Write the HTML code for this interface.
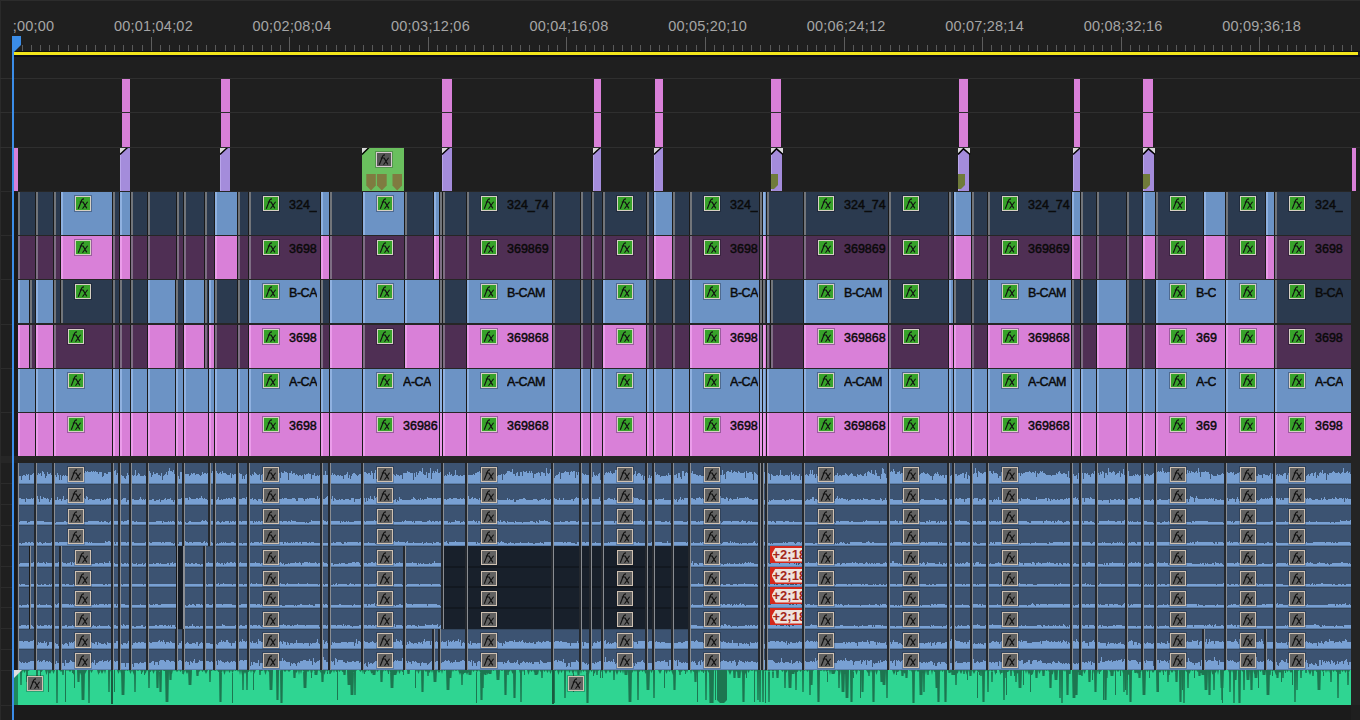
<!DOCTYPE html><html><head><meta charset="utf-8"><style>
*{margin:0;padding:0;box-sizing:border-box}
html,body{width:1360px;height:720px;overflow:hidden;background:#1f1f1f}
body>div,.abs{position:absolute}
#root{position:relative;width:1360px;height:720px;overflow:hidden;background:#1f1f1f;font-family:"Liberation Sans",sans-serif}
#root div{position:absolute}
#root svg{position:absolute}
.tc{width:120px;text-align:center;color:#a6a6a6;font-size:14.5px;letter-spacing:0.2px;line-height:16px;white-space:nowrap}
.lbl{color:#0a0a0a;font-size:12.5px;line-height:15px;white-space:nowrap;overflow:hidden;padding-top:3px;-webkit-text-stroke:0.45px #0a0a0a}
.fx{width:16px;height:15px;border:1.5px solid #cfc1b2;box-shadow:0 0 0 1px rgba(10,14,22,.3)}
.fg{background:#37a22a;border-color:#d6d0c4}
.fa{background:#626262;height:14.5px;width:16px;box-shadow:0 0 0 1px rgba(10,14,22,.25)}
.red{width:32px;height:17px;background:#d4281b;overflow:hidden}
.red:before{content:"";position:absolute;left:1.5px;top:1.5px;width:31px;height:14px;background:#eee3dd;clip-path:polygon(4px 0,100% 0,100% 100%,4px 100%,0 50%)}
.red span{position:absolute;left:2.5px;top:1px;color:#a3271b;font-size:13px;font-weight:bold;line-height:16px;white-space:nowrap}
</style></head><body><div id="root"><div style="left:0;top:0;width:1360px;height:1px;background:#2c2c2c"></div>
<div style="left:0;top:0;width:1px;height:720px;background:#2a2a2a"></div>
<div id="rul" style="left:13px;top:0;width:1347px;height:40px;overflow:hidden">
<div class="tc" style="left:-58.1px;top:18px">00;00;00;00</div>
<div class="tc" style="left:80.5px;top:18px">00;01;04;02</div>
<div class="tc" style="left:219.0px;top:18px">00;02;08;04</div>
<div class="tc" style="left:357.5px;top:18px">00;03;12;06</div>
<div class="tc" style="left:496.0px;top:18px">00;04;16;08</div>
<div class="tc" style="left:634.6px;top:18px">00;05;20;10</div>
<div class="tc" style="left:773.1px;top:18px">00;06;24;12</div>
<div class="tc" style="left:911.6px;top:18px">00;07;28;14</div>
<div class="tc" style="left:1050.2px;top:18px">00;08;32;16</div>
<div class="tc" style="left:1188.7px;top:18px">00;09;36;18</div>
</div>
<div style="left:22px;top:45px;width:1px;height:7px;background:#5a5a5a;"></div>
<div style="left:31px;top:45px;width:1px;height:7px;background:#5a5a5a;"></div>
<div style="left:40px;top:45px;width:1px;height:7px;background:#5a5a5a;"></div>
<div style="left:49px;top:45px;width:1px;height:7px;background:#5a5a5a;"></div>
<div style="left:58px;top:45px;width:1px;height:7px;background:#5a5a5a;"></div>
<div style="left:68px;top:45px;width:1px;height:7px;background:#5a5a5a;"></div>
<div style="left:77px;top:45px;width:1px;height:7px;background:#5a5a5a;"></div>
<div style="left:86px;top:45px;width:1px;height:7px;background:#5a5a5a;"></div>
<div style="left:95px;top:45px;width:1px;height:7px;background:#5a5a5a;"></div>
<div style="left:105px;top:45px;width:1px;height:7px;background:#5a5a5a;"></div>
<div style="left:114px;top:45px;width:1px;height:7px;background:#5a5a5a;"></div>
<div style="left:123px;top:45px;width:1px;height:7px;background:#5a5a5a;"></div>
<div style="left:132px;top:45px;width:1px;height:7px;background:#5a5a5a;"></div>
<div style="left:142px;top:45px;width:1px;height:7px;background:#5a5a5a;"></div>
<div style="left:151px;top:37px;width:1px;height:15px;background:#5e5e5e;"></div>
<div style="left:160px;top:45px;width:1px;height:7px;background:#5a5a5a;"></div>
<div style="left:169px;top:45px;width:1px;height:7px;background:#5a5a5a;"></div>
<div style="left:179px;top:45px;width:1px;height:7px;background:#5a5a5a;"></div>
<div style="left:188px;top:45px;width:1px;height:7px;background:#5a5a5a;"></div>
<div style="left:197px;top:45px;width:1px;height:7px;background:#5a5a5a;"></div>
<div style="left:206px;top:45px;width:1px;height:7px;background:#5a5a5a;"></div>
<div style="left:215px;top:45px;width:1px;height:7px;background:#5a5a5a;"></div>
<div style="left:225px;top:45px;width:1px;height:7px;background:#5a5a5a;"></div>
<div style="left:234px;top:45px;width:1px;height:7px;background:#5a5a5a;"></div>
<div style="left:243px;top:45px;width:1px;height:7px;background:#5a5a5a;"></div>
<div style="left:252px;top:45px;width:1px;height:7px;background:#5a5a5a;"></div>
<div style="left:262px;top:45px;width:1px;height:7px;background:#5a5a5a;"></div>
<div style="left:271px;top:45px;width:1px;height:7px;background:#5a5a5a;"></div>
<div style="left:280px;top:45px;width:1px;height:7px;background:#5a5a5a;"></div>
<div style="left:289px;top:37px;width:1px;height:15px;background:#5e5e5e;"></div>
<div style="left:299px;top:45px;width:1px;height:7px;background:#5a5a5a;"></div>
<div style="left:308px;top:45px;width:1px;height:7px;background:#5a5a5a;"></div>
<div style="left:317px;top:45px;width:1px;height:7px;background:#5a5a5a;"></div>
<div style="left:326px;top:45px;width:1px;height:7px;background:#5a5a5a;"></div>
<div style="left:336px;top:45px;width:1px;height:7px;background:#5a5a5a;"></div>
<div style="left:345px;top:45px;width:1px;height:7px;background:#5a5a5a;"></div>
<div style="left:354px;top:45px;width:1px;height:7px;background:#5a5a5a;"></div>
<div style="left:363px;top:45px;width:1px;height:7px;background:#5a5a5a;"></div>
<div style="left:372px;top:45px;width:1px;height:7px;background:#5a5a5a;"></div>
<div style="left:382px;top:45px;width:1px;height:7px;background:#5a5a5a;"></div>
<div style="left:391px;top:45px;width:1px;height:7px;background:#5a5a5a;"></div>
<div style="left:400px;top:45px;width:1px;height:7px;background:#5a5a5a;"></div>
<div style="left:409px;top:45px;width:1px;height:7px;background:#5a5a5a;"></div>
<div style="left:419px;top:45px;width:1px;height:7px;background:#5a5a5a;"></div>
<div style="left:428px;top:37px;width:1px;height:15px;background:#5e5e5e;"></div>
<div style="left:437px;top:45px;width:1px;height:7px;background:#5a5a5a;"></div>
<div style="left:446px;top:45px;width:1px;height:7px;background:#5a5a5a;"></div>
<div style="left:456px;top:45px;width:1px;height:7px;background:#5a5a5a;"></div>
<div style="left:465px;top:45px;width:1px;height:7px;background:#5a5a5a;"></div>
<div style="left:474px;top:45px;width:1px;height:7px;background:#5a5a5a;"></div>
<div style="left:483px;top:45px;width:1px;height:7px;background:#5a5a5a;"></div>
<div style="left:493px;top:45px;width:1px;height:7px;background:#5a5a5a;"></div>
<div style="left:502px;top:45px;width:1px;height:7px;background:#5a5a5a;"></div>
<div style="left:511px;top:45px;width:1px;height:7px;background:#5a5a5a;"></div>
<div style="left:520px;top:45px;width:1px;height:7px;background:#5a5a5a;"></div>
<div style="left:529px;top:45px;width:1px;height:7px;background:#5a5a5a;"></div>
<div style="left:539px;top:45px;width:1px;height:7px;background:#5a5a5a;"></div>
<div style="left:548px;top:45px;width:1px;height:7px;background:#5a5a5a;"></div>
<div style="left:557px;top:45px;width:1px;height:7px;background:#5a5a5a;"></div>
<div style="left:566px;top:37px;width:1px;height:15px;background:#5e5e5e;"></div>
<div style="left:576px;top:45px;width:1px;height:7px;background:#5a5a5a;"></div>
<div style="left:585px;top:45px;width:1px;height:7px;background:#5a5a5a;"></div>
<div style="left:594px;top:45px;width:1px;height:7px;background:#5a5a5a;"></div>
<div style="left:603px;top:45px;width:1px;height:7px;background:#5a5a5a;"></div>
<div style="left:613px;top:45px;width:1px;height:7px;background:#5a5a5a;"></div>
<div style="left:622px;top:45px;width:1px;height:7px;background:#5a5a5a;"></div>
<div style="left:631px;top:45px;width:1px;height:7px;background:#5a5a5a;"></div>
<div style="left:640px;top:45px;width:1px;height:7px;background:#5a5a5a;"></div>
<div style="left:650px;top:45px;width:1px;height:7px;background:#5a5a5a;"></div>
<div style="left:659px;top:45px;width:1px;height:7px;background:#5a5a5a;"></div>
<div style="left:668px;top:45px;width:1px;height:7px;background:#5a5a5a;"></div>
<div style="left:677px;top:45px;width:1px;height:7px;background:#5a5a5a;"></div>
<div style="left:686px;top:45px;width:1px;height:7px;background:#5a5a5a;"></div>
<div style="left:696px;top:45px;width:1px;height:7px;background:#5a5a5a;"></div>
<div style="left:705px;top:37px;width:1px;height:15px;background:#5e5e5e;"></div>
<div style="left:714px;top:45px;width:1px;height:7px;background:#5a5a5a;"></div>
<div style="left:723px;top:45px;width:1px;height:7px;background:#5a5a5a;"></div>
<div style="left:733px;top:45px;width:1px;height:7px;background:#5a5a5a;"></div>
<div style="left:742px;top:45px;width:1px;height:7px;background:#5a5a5a;"></div>
<div style="left:751px;top:45px;width:1px;height:7px;background:#5a5a5a;"></div>
<div style="left:760px;top:45px;width:1px;height:7px;background:#5a5a5a;"></div>
<div style="left:770px;top:45px;width:1px;height:7px;background:#5a5a5a;"></div>
<div style="left:779px;top:45px;width:1px;height:7px;background:#5a5a5a;"></div>
<div style="left:788px;top:45px;width:1px;height:7px;background:#5a5a5a;"></div>
<div style="left:797px;top:45px;width:1px;height:7px;background:#5a5a5a;"></div>
<div style="left:807px;top:45px;width:1px;height:7px;background:#5a5a5a;"></div>
<div style="left:816px;top:45px;width:1px;height:7px;background:#5a5a5a;"></div>
<div style="left:825px;top:45px;width:1px;height:7px;background:#5a5a5a;"></div>
<div style="left:834px;top:45px;width:1px;height:7px;background:#5a5a5a;"></div>
<div style="left:844px;top:37px;width:1px;height:15px;background:#5e5e5e;"></div>
<div style="left:853px;top:45px;width:1px;height:7px;background:#5a5a5a;"></div>
<div style="left:862px;top:45px;width:1px;height:7px;background:#5a5a5a;"></div>
<div style="left:871px;top:45px;width:1px;height:7px;background:#5a5a5a;"></div>
<div style="left:880px;top:45px;width:1px;height:7px;background:#5a5a5a;"></div>
<div style="left:890px;top:45px;width:1px;height:7px;background:#5a5a5a;"></div>
<div style="left:899px;top:45px;width:1px;height:7px;background:#5a5a5a;"></div>
<div style="left:908px;top:45px;width:1px;height:7px;background:#5a5a5a;"></div>
<div style="left:917px;top:45px;width:1px;height:7px;background:#5a5a5a;"></div>
<div style="left:927px;top:45px;width:1px;height:7px;background:#5a5a5a;"></div>
<div style="left:936px;top:45px;width:1px;height:7px;background:#5a5a5a;"></div>
<div style="left:945px;top:45px;width:1px;height:7px;background:#5a5a5a;"></div>
<div style="left:954px;top:45px;width:1px;height:7px;background:#5a5a5a;"></div>
<div style="left:964px;top:45px;width:1px;height:7px;background:#5a5a5a;"></div>
<div style="left:973px;top:45px;width:1px;height:7px;background:#5a5a5a;"></div>
<div style="left:982px;top:37px;width:1px;height:15px;background:#5e5e5e;"></div>
<div style="left:991px;top:45px;width:1px;height:7px;background:#5a5a5a;"></div>
<div style="left:1001px;top:45px;width:1px;height:7px;background:#5a5a5a;"></div>
<div style="left:1010px;top:45px;width:1px;height:7px;background:#5a5a5a;"></div>
<div style="left:1019px;top:45px;width:1px;height:7px;background:#5a5a5a;"></div>
<div style="left:1028px;top:45px;width:1px;height:7px;background:#5a5a5a;"></div>
<div style="left:1037px;top:45px;width:1px;height:7px;background:#5a5a5a;"></div>
<div style="left:1047px;top:45px;width:1px;height:7px;background:#5a5a5a;"></div>
<div style="left:1056px;top:45px;width:1px;height:7px;background:#5a5a5a;"></div>
<div style="left:1065px;top:45px;width:1px;height:7px;background:#5a5a5a;"></div>
<div style="left:1074px;top:45px;width:1px;height:7px;background:#5a5a5a;"></div>
<div style="left:1084px;top:45px;width:1px;height:7px;background:#5a5a5a;"></div>
<div style="left:1093px;top:45px;width:1px;height:7px;background:#5a5a5a;"></div>
<div style="left:1102px;top:45px;width:1px;height:7px;background:#5a5a5a;"></div>
<div style="left:1111px;top:45px;width:1px;height:7px;background:#5a5a5a;"></div>
<div style="left:1121px;top:37px;width:1px;height:15px;background:#5e5e5e;"></div>
<div style="left:1130px;top:45px;width:1px;height:7px;background:#5a5a5a;"></div>
<div style="left:1139px;top:45px;width:1px;height:7px;background:#5a5a5a;"></div>
<div style="left:1148px;top:45px;width:1px;height:7px;background:#5a5a5a;"></div>
<div style="left:1158px;top:45px;width:1px;height:7px;background:#5a5a5a;"></div>
<div style="left:1167px;top:45px;width:1px;height:7px;background:#5a5a5a;"></div>
<div style="left:1176px;top:45px;width:1px;height:7px;background:#5a5a5a;"></div>
<div style="left:1185px;top:45px;width:1px;height:7px;background:#5a5a5a;"></div>
<div style="left:1194px;top:45px;width:1px;height:7px;background:#5a5a5a;"></div>
<div style="left:1204px;top:45px;width:1px;height:7px;background:#5a5a5a;"></div>
<div style="left:1213px;top:45px;width:1px;height:7px;background:#5a5a5a;"></div>
<div style="left:1222px;top:45px;width:1px;height:7px;background:#5a5a5a;"></div>
<div style="left:1231px;top:45px;width:1px;height:7px;background:#5a5a5a;"></div>
<div style="left:1241px;top:45px;width:1px;height:7px;background:#5a5a5a;"></div>
<div style="left:1250px;top:45px;width:1px;height:7px;background:#5a5a5a;"></div>
<div style="left:1259px;top:37px;width:1px;height:15px;background:#5e5e5e;"></div>
<div style="left:1268px;top:45px;width:1px;height:7px;background:#5a5a5a;"></div>
<div style="left:1278px;top:45px;width:1px;height:7px;background:#5a5a5a;"></div>
<div style="left:1287px;top:45px;width:1px;height:7px;background:#5a5a5a;"></div>
<div style="left:1296px;top:45px;width:1px;height:7px;background:#5a5a5a;"></div>
<div style="left:1305px;top:45px;width:1px;height:7px;background:#5a5a5a;"></div>
<div style="left:1315px;top:45px;width:1px;height:7px;background:#5a5a5a;"></div>
<div style="left:1324px;top:45px;width:1px;height:7px;background:#5a5a5a;"></div>
<div style="left:1333px;top:45px;width:1px;height:7px;background:#5a5a5a;"></div>
<div style="left:1342px;top:45px;width:1px;height:7px;background:#5a5a5a;"></div>
<div style="left:1351px;top:45px;width:1px;height:7px;background:#5a5a5a;"></div>
<div style="left:13px;top:52px;width:1345px;height:3px;background:#f4e61c;"></div>
<div style="left:13px;top:55px;width:1347px;height:2px;background:#0d0d18;"></div>
<div style="left:13px;top:51px;width:1347px;height:1px;background:#111;"></div>
<div style="left:0px;top:78px;width:1360px;height:1px;background:#2f2f2f;"></div>
<div style="left:0px;top:112px;width:1360px;height:1px;background:#2f2f2f;"></div>
<div style="left:0px;top:147px;width:1360px;height:1px;background:#2f2f2f;"></div>
<div style="left:122px;top:79px;width:8px;height:33px;background:#d980d8;"></div>
<div style="left:122px;top:113px;width:8px;height:34px;background:#d980d8;"></div>
<div style="left:221px;top:79px;width:9px;height:33px;background:#d980d8;"></div>
<div style="left:221px;top:113px;width:9px;height:34px;background:#d980d8;"></div>
<div style="left:442px;top:79px;width:10px;height:33px;background:#d980d8;"></div>
<div style="left:442px;top:113px;width:10px;height:34px;background:#d980d8;"></div>
<div style="left:594px;top:79px;width:7px;height:33px;background:#d980d8;"></div>
<div style="left:594px;top:113px;width:7px;height:34px;background:#d980d8;"></div>
<div style="left:655px;top:79px;width:8px;height:33px;background:#d980d8;"></div>
<div style="left:655px;top:113px;width:8px;height:34px;background:#d980d8;"></div>
<div style="left:771px;top:79px;width:10px;height:33px;background:#d980d8;"></div>
<div style="left:771px;top:113px;width:10px;height:34px;background:#d980d8;"></div>
<div style="left:959px;top:79px;width:9px;height:33px;background:#d980d8;"></div>
<div style="left:959px;top:113px;width:9px;height:34px;background:#d980d8;"></div>
<div style="left:1074px;top:79px;width:6px;height:33px;background:#d980d8;"></div>
<div style="left:1074px;top:113px;width:6px;height:34px;background:#d980d8;"></div>
<div style="left:1143px;top:79px;width:10px;height:33px;background:#d980d8;"></div>
<div style="left:1143px;top:113px;width:10px;height:34px;background:#d980d8;"></div>
<div style="left:14px;top:148px;width:4px;height:43px;background:#d980d8;"></div>
<div style="left:1352px;top:148px;width:4px;height:43px;background:#d980d8;"></div>
<div style="left:120px;top:148px;width:10px;height:43px;background:#a48cdb;"></div>
<div style="left:120px;top:148px;width:1px;height:43px;background:#b9a6ea;"></div>
<svg class="abs" style="left:120px;top:148px" width="10" height="10"><polygon points="0,0 7,0 0,6" fill="#d9d9d9"/><line x1="0" y1="6.5" x2="7.5" y2="-0.5" stroke="#000" stroke-width="1.4"/></svg>
<div style="left:220px;top:148px;width:10px;height:43px;background:#a48cdb;"></div>
<div style="left:220px;top:148px;width:1px;height:43px;background:#b9a6ea;"></div>
<svg class="abs" style="left:220px;top:148px" width="10" height="10"><polygon points="0,0 7,0 0,6" fill="#d9d9d9"/><line x1="0" y1="6.5" x2="7.5" y2="-0.5" stroke="#000" stroke-width="1.4"/></svg>
<div style="left:442px;top:148px;width:10px;height:43px;background:#a48cdb;"></div>
<div style="left:442px;top:148px;width:1px;height:43px;background:#b9a6ea;"></div>
<svg class="abs" style="left:442px;top:148px" width="10" height="10"><polygon points="0,0 7,0 0,6" fill="#d9d9d9"/><line x1="0" y1="6.5" x2="7.5" y2="-0.5" stroke="#000" stroke-width="1.4"/></svg>
<div style="left:593px;top:148px;width:8px;height:43px;background:#a48cdb;"></div>
<div style="left:593px;top:148px;width:1px;height:43px;background:#b9a6ea;"></div>
<svg class="abs" style="left:593px;top:148px" width="8" height="10"><polygon points="0,0 7,0 0,6" fill="#d9d9d9"/><line x1="0" y1="6.5" x2="7.5" y2="-0.5" stroke="#000" stroke-width="1.4"/></svg>
<div style="left:654px;top:148px;width:9px;height:43px;background:#a48cdb;"></div>
<div style="left:654px;top:148px;width:1px;height:43px;background:#b9a6ea;"></div>
<svg class="abs" style="left:654px;top:148px" width="9" height="10"><polygon points="0,0 7,0 0,6" fill="#d9d9d9"/><line x1="0" y1="6.5" x2="7.5" y2="-0.5" stroke="#000" stroke-width="1.4"/></svg>
<div style="left:771px;top:148px;width:11px;height:43px;background:#a48cdb;"></div>
<div style="left:771px;top:148px;width:1px;height:43px;background:#b9a6ea;"></div>
<svg class="abs" style="left:771px;top:148px" width="13" height="12"><polygon points="0,0 12,0 12,6 5.5,0 0,6" fill="#d9d9d9"/><polyline points="0,6.5 5.5,0.8 12,6.5" fill="none" stroke="#000" stroke-width="1.6"/></svg>
<svg class="abs" style="left:771px;top:174px" width="8" height="16"><polygon points="0,0 7,0 7,11 3,15 0,15" fill="#6f7b3a"/></svg>
<div style="left:958px;top:148px;width:11px;height:43px;background:#a48cdb;"></div>
<div style="left:958px;top:148px;width:1px;height:43px;background:#b9a6ea;"></div>
<svg class="abs" style="left:958px;top:148px" width="13" height="12"><polygon points="0,0 12,0 12,6 5.5,0 0,6" fill="#d9d9d9"/><polyline points="0,6.5 5.5,0.8 12,6.5" fill="none" stroke="#000" stroke-width="1.6"/></svg>
<svg class="abs" style="left:958px;top:174px" width="8" height="16"><polygon points="0,0 7,0 7,11 3,15 0,15" fill="#6f7b3a"/></svg>
<div style="left:1073px;top:148px;width:7px;height:43px;background:#a48cdb;"></div>
<div style="left:1073px;top:148px;width:1px;height:43px;background:#b9a6ea;"></div>
<svg class="abs" style="left:1073px;top:148px" width="7" height="10"><polygon points="0,0 7,0 0,6" fill="#d9d9d9"/><line x1="0" y1="6.5" x2="7.5" y2="-0.5" stroke="#000" stroke-width="1.4"/></svg>
<div style="left:1143px;top:148px;width:11px;height:43px;background:#a48cdb;"></div>
<div style="left:1143px;top:148px;width:1px;height:43px;background:#b9a6ea;"></div>
<svg class="abs" style="left:1143px;top:148px" width="13" height="12"><polygon points="0,0 12,0 12,6 5.5,0 0,6" fill="#d9d9d9"/><polyline points="0,6.5 5.5,0.8 12,6.5" fill="none" stroke="#000" stroke-width="1.6"/></svg>
<svg class="abs" style="left:1143px;top:174px" width="8" height="16"><polygon points="0,0 7,0 7,11 3,15 0,15" fill="#6f7b3a"/></svg>
<div style="left:362px;top:148px;width:42px;height:43px;background:#6abf5e;"></div>
<svg class="abs" style="left:362px;top:148px" width="10" height="10"><polygon points="0,0 6,0 0,5.5" fill="#d9d9d9"/><line x1="0" y1="6.5" x2="7" y2="-0.5" stroke="#000" stroke-width="1.4"/></svg>
<div class="fx fa" style="left:376px;top:152px;background:#555;border-color:#d6c8cf"><svg width="16" height="15" style="left:-1.5px;top:-1.5px"><path d="M3.3 12.8L6.6 4.2Q7.1 2.9 9 2.9M4.8 6H8.3M8 5.9L11.8 12.4M12.6 5.7L7.5 12.7" stroke="#111" stroke-width="1.1" fill="none"/></svg></div>
<svg class="abs" style="left:362px;top:174px" width="42" height="17"><g fill="#7f7b40"><polygon points="4.3,0 13.8,0 13.8,11.5 9,16.5 4.3,11.5"/><polygon points="15,0 24.7,0 24.7,11.5 19.8,16.5 15,11.5"/><polygon points="30.5,0 40,0 40,11.5 35.2,16.5 30.5,11.5"/></g></svg>
<div style="left:14px;top:191px;width:1337px;height:265px;background:#262626;"></div>
<div class="clip" style="left:18px;top:192px;width:18px;height:43px;background:#2b3a4f;border-left:2px solid #72757a"></div>
<div style="left:17px;top:192px;width:1px;height:43px;background:#1a1a1a;"></div>
<div class="clip" style="left:36px;top:192px;width:18px;height:43px;background:#2b3a4f;border-left:2px solid #72757a"></div>
<div style="left:35px;top:192px;width:1px;height:43px;background:#1a1a1a;"></div>
<div class="clip" style="left:54px;top:192px;width:7px;height:43px;background:#2b3a4f;border-left:2px solid #72757a"></div>
<div style="left:53px;top:192px;width:1px;height:43px;background:#1a1a1a;"></div>
<div class="clip" style="left:61px;top:192px;width:52px;height:43px;background:#6c93c5;border-left:2px solid #8fb1e0"></div>
<div style="left:60px;top:192px;width:1px;height:43px;background:#1a1a1a;"></div>
<div class="clip" style="left:113px;top:192px;width:7px;height:43px;background:#2b3a4f;border-left:2px solid #72757a"></div>
<div style="left:112px;top:192px;width:1px;height:43px;background:#1a1a1a;"></div>
<div class="clip" style="left:120px;top:192px;width:11px;height:43px;background:#6c93c5;border-left:2px solid #8fb1e0"></div>
<div style="left:119px;top:192px;width:1px;height:43px;background:#1a1a1a;"></div>
<div class="clip" style="left:131px;top:192px;width:17px;height:43px;background:#2b3a4f;border-left:2px solid #72757a"></div>
<div style="left:130px;top:192px;width:1px;height:43px;background:#1a1a1a;"></div>
<div class="clip" style="left:148px;top:192px;width:29px;height:43px;background:#2b3a4f;border-left:2px solid #72757a"></div>
<div style="left:147px;top:192px;width:1px;height:43px;background:#1a1a1a;"></div>
<div class="clip" style="left:177px;top:192px;width:7px;height:43px;background:#2b3a4f;border-left:2px solid #72757a"></div>
<div style="left:176px;top:192px;width:1px;height:43px;background:#1a1a1a;"></div>
<div class="clip" style="left:184px;top:192px;width:21px;height:43px;background:#2b3a4f;border-left:2px solid #72757a"></div>
<div style="left:183px;top:192px;width:1px;height:43px;background:#1a1a1a;"></div>
<div class="clip" style="left:205px;top:192px;width:10px;height:43px;background:#2b3a4f;border-left:2px solid #72757a"></div>
<div style="left:204px;top:192px;width:1px;height:43px;background:#1a1a1a;"></div>
<div class="clip" style="left:215px;top:192px;width:23px;height:43px;background:#6c93c5;border-left:2px solid #8fb1e0"></div>
<div style="left:214px;top:192px;width:1px;height:43px;background:#1a1a1a;"></div>
<div class="clip" style="left:238px;top:192px;width:11px;height:43px;background:#2b3a4f;border-left:2px solid #72757a"></div>
<div style="left:237px;top:192px;width:1px;height:43px;background:#1a1a1a;"></div>
<div class="clip" style="left:249px;top:192px;width:72px;height:43px;background:#2b3a4f;border-left:2px solid #72757a"></div>
<div style="left:248px;top:192px;width:1px;height:43px;background:#1a1a1a;"></div>
<div class="clip" style="left:321px;top:192px;width:9px;height:43px;background:#6c93c5;border-left:2px solid #8fb1e0"></div>
<div style="left:320px;top:192px;width:1px;height:43px;background:#1a1a1a;"></div>
<div class="clip" style="left:330px;top:192px;width:33px;height:43px;background:#2b3a4f;border-left:2px solid #72757a"></div>
<div style="left:329px;top:192px;width:1px;height:43px;background:#1a1a1a;"></div>
<div class="clip" style="left:363px;top:192px;width:42px;height:43px;background:#6c93c5;border-left:2px solid #8fb1e0"></div>
<div style="left:362px;top:192px;width:1px;height:43px;background:#1a1a1a;"></div>
<div class="clip" style="left:405px;top:192px;width:29px;height:43px;background:#2b3a4f;border-left:2px solid #72757a"></div>
<div style="left:404px;top:192px;width:1px;height:43px;background:#1a1a1a;"></div>
<div class="clip" style="left:434px;top:192px;width:6px;height:43px;background:#6c93c5;border-left:2px solid #8fb1e0"></div>
<div style="left:433px;top:192px;width:1px;height:43px;background:#1a1a1a;"></div>
<div class="clip" style="left:440px;top:192px;width:3px;height:43px;background:#2b3a4f;border-left:2px solid #72757a"></div>
<div style="left:439px;top:192px;width:1px;height:43px;background:#1a1a1a;"></div>
<div class="clip" style="left:443px;top:192px;width:24px;height:43px;background:#2b3a4f;border-left:2px solid #72757a"></div>
<div style="left:442px;top:192px;width:1px;height:43px;background:#1a1a1a;"></div>
<div class="clip" style="left:467px;top:192px;width:86px;height:43px;background:#2b3a4f;border-left:2px solid #72757a"></div>
<div style="left:466px;top:192px;width:1px;height:43px;background:#1a1a1a;"></div>
<div class="clip" style="left:553px;top:192px;width:28px;height:43px;background:#2b3a4f;border-left:2px solid #72757a"></div>
<div style="left:552px;top:192px;width:1px;height:43px;background:#1a1a1a;"></div>
<div class="clip" style="left:581px;top:192px;width:11px;height:43px;background:#2b3a4f;border-left:2px solid #72757a"></div>
<div style="left:580px;top:192px;width:1px;height:43px;background:#1a1a1a;"></div>
<div class="clip" style="left:592px;top:192px;width:11px;height:43px;background:#2b3a4f;border-left:2px solid #72757a"></div>
<div style="left:591px;top:192px;width:1px;height:43px;background:#1a1a1a;"></div>
<div class="clip" style="left:603px;top:192px;width:44px;height:43px;background:#2b3a4f;border-left:2px solid #72757a"></div>
<div style="left:602px;top:192px;width:1px;height:43px;background:#1a1a1a;"></div>
<div class="clip" style="left:647px;top:192px;width:7px;height:43px;background:#2b3a4f;border-left:2px solid #72757a"></div>
<div style="left:646px;top:192px;width:1px;height:43px;background:#1a1a1a;"></div>
<div class="clip" style="left:654px;top:192px;width:19px;height:43px;background:#6c93c5;border-left:2px solid #8fb1e0"></div>
<div style="left:653px;top:192px;width:1px;height:43px;background:#1a1a1a;"></div>
<div class="clip" style="left:673px;top:192px;width:17px;height:43px;background:#2b3a4f;border-left:2px solid #72757a"></div>
<div style="left:672px;top:192px;width:1px;height:43px;background:#1a1a1a;"></div>
<div class="clip" style="left:690px;top:192px;width:70px;height:43px;background:#2b3a4f;border-left:2px solid #72757a"></div>
<div style="left:689px;top:192px;width:1px;height:43px;background:#1a1a1a;"></div>
<div class="clip" style="left:760px;top:192px;width:3px;height:43px;background:#2b3a4f;border-left:2px solid #72757a"></div>
<div style="left:759px;top:192px;width:1px;height:43px;background:#1a1a1a;"></div>
<div class="clip" style="left:763px;top:192px;width:4px;height:43px;background:#6c93c5;border-left:2px solid #8fb1e0"></div>
<div style="left:762px;top:192px;width:1px;height:43px;background:#1a1a1a;"></div>
<div class="clip" style="left:767px;top:192px;width:37px;height:43px;background:#2b3a4f;border-left:2px solid #72757a"></div>
<div style="left:766px;top:192px;width:1px;height:43px;background:#1a1a1a;"></div>
<div class="clip" style="left:804px;top:192px;width:85px;height:43px;background:#2b3a4f;border-left:2px solid #72757a"></div>
<div style="left:803px;top:192px;width:1px;height:43px;background:#1a1a1a;"></div>
<div class="clip" style="left:889px;top:192px;width:60px;height:43px;background:#2b3a4f;border-left:2px solid #72757a"></div>
<div style="left:888px;top:192px;width:1px;height:43px;background:#1a1a1a;"></div>
<div class="clip" style="left:949px;top:192px;width:5px;height:43px;background:#2b3a4f;border-left:2px solid #72757a"></div>
<div style="left:948px;top:192px;width:1px;height:43px;background:#1a1a1a;"></div>
<div class="clip" style="left:954px;top:192px;width:18px;height:43px;background:#6c93c5;border-left:2px solid #8fb1e0"></div>
<div style="left:953px;top:192px;width:1px;height:43px;background:#1a1a1a;"></div>
<div class="clip" style="left:972px;top:192px;width:16px;height:43px;background:#2b3a4f;border-left:2px solid #72757a"></div>
<div style="left:971px;top:192px;width:1px;height:43px;background:#1a1a1a;"></div>
<div class="clip" style="left:988px;top:192px;width:84px;height:43px;background:#2b3a4f;border-left:2px solid #72757a"></div>
<div style="left:987px;top:192px;width:1px;height:43px;background:#1a1a1a;"></div>
<div class="clip" style="left:1072px;top:192px;width:9px;height:43px;background:#6c93c5;border-left:2px solid #8fb1e0"></div>
<div style="left:1071px;top:192px;width:1px;height:43px;background:#1a1a1a;"></div>
<div class="clip" style="left:1081px;top:192px;width:16px;height:43px;background:#2b3a4f;border-left:2px solid #72757a"></div>
<div style="left:1080px;top:192px;width:1px;height:43px;background:#1a1a1a;"></div>
<div class="clip" style="left:1097px;top:192px;width:30px;height:43px;background:#2b3a4f;border-left:2px solid #72757a"></div>
<div style="left:1096px;top:192px;width:1px;height:43px;background:#1a1a1a;"></div>
<div class="clip" style="left:1127px;top:192px;width:16px;height:43px;background:#2b3a4f;border-left:2px solid #72757a"></div>
<div style="left:1126px;top:192px;width:1px;height:43px;background:#1a1a1a;"></div>
<div class="clip" style="left:1143px;top:192px;width:13px;height:43px;background:#6c93c5;border-left:2px solid #8fb1e0"></div>
<div style="left:1142px;top:192px;width:1px;height:43px;background:#1a1a1a;"></div>
<div class="clip" style="left:1156px;top:192px;width:48px;height:43px;background:#2b3a4f;border-left:2px solid #72757a"></div>
<div style="left:1155px;top:192px;width:1px;height:43px;background:#1a1a1a;"></div>
<div class="clip" style="left:1204px;top:192px;width:22px;height:43px;background:#6c93c5;border-left:2px solid #8fb1e0"></div>
<div style="left:1203px;top:192px;width:1px;height:43px;background:#1a1a1a;"></div>
<div class="clip" style="left:1226px;top:192px;width:40px;height:43px;background:#2b3a4f;border-left:2px solid #72757a"></div>
<div style="left:1225px;top:192px;width:1px;height:43px;background:#1a1a1a;"></div>
<div class="clip" style="left:1266px;top:192px;width:9px;height:43px;background:#6c93c5;border-left:2px solid #8fb1e0"></div>
<div style="left:1265px;top:192px;width:1px;height:43px;background:#1a1a1a;"></div>
<div class="clip" style="left:1275px;top:192px;width:76px;height:43px;background:#2b3a4f;border-left:2px solid #72757a"></div>
<div style="left:1274px;top:192px;width:1px;height:43px;background:#1a1a1a;"></div>
<div class="fx fg" style="left:75px;top:196px"><svg width="16" height="15" style="left:-1.5px;top:-1.5px"><path d="M3.3 12.8L6.6 4.2Q7.1 2.9 9 2.9M4.8 6H8.3M8 5.9L11.8 12.4M12.6 5.7L7.5 12.7" stroke="#111" stroke-width="1.1" fill="none"/></svg></div>
<div class="fx fg" style="left:263px;top:196px"><svg width="16" height="15" style="left:-1.5px;top:-1.5px"><path d="M3.3 12.8L6.6 4.2Q7.1 2.9 9 2.9M4.8 6H8.3M8 5.9L11.8 12.4M12.6 5.7L7.5 12.7" stroke="#111" stroke-width="1.1" fill="none"/></svg></div>
<div class="fx fg" style="left:377px;top:196px"><svg width="16" height="15" style="left:-1.5px;top:-1.5px"><path d="M3.3 12.8L6.6 4.2Q7.1 2.9 9 2.9M4.8 6H8.3M8 5.9L11.8 12.4M12.6 5.7L7.5 12.7" stroke="#111" stroke-width="1.1" fill="none"/></svg></div>
<div class="fx fg" style="left:481px;top:196px"><svg width="16" height="15" style="left:-1.5px;top:-1.5px"><path d="M3.3 12.8L6.6 4.2Q7.1 2.9 9 2.9M4.8 6H8.3M8 5.9L11.8 12.4M12.6 5.7L7.5 12.7" stroke="#111" stroke-width="1.1" fill="none"/></svg></div>
<div class="fx fg" style="left:617px;top:196px"><svg width="16" height="15" style="left:-1.5px;top:-1.5px"><path d="M3.3 12.8L6.6 4.2Q7.1 2.9 9 2.9M4.8 6H8.3M8 5.9L11.8 12.4M12.6 5.7L7.5 12.7" stroke="#111" stroke-width="1.1" fill="none"/></svg></div>
<div class="fx fg" style="left:704px;top:196px"><svg width="16" height="15" style="left:-1.5px;top:-1.5px"><path d="M3.3 12.8L6.6 4.2Q7.1 2.9 9 2.9M4.8 6H8.3M8 5.9L11.8 12.4M12.6 5.7L7.5 12.7" stroke="#111" stroke-width="1.1" fill="none"/></svg></div>
<div class="fx fg" style="left:818px;top:196px"><svg width="16" height="15" style="left:-1.5px;top:-1.5px"><path d="M3.3 12.8L6.6 4.2Q7.1 2.9 9 2.9M4.8 6H8.3M8 5.9L11.8 12.4M12.6 5.7L7.5 12.7" stroke="#111" stroke-width="1.1" fill="none"/></svg></div>
<div class="fx fg" style="left:903px;top:196px"><svg width="16" height="15" style="left:-1.5px;top:-1.5px"><path d="M3.3 12.8L6.6 4.2Q7.1 2.9 9 2.9M4.8 6H8.3M8 5.9L11.8 12.4M12.6 5.7L7.5 12.7" stroke="#111" stroke-width="1.1" fill="none"/></svg></div>
<div class="fx fg" style="left:1002px;top:196px"><svg width="16" height="15" style="left:-1.5px;top:-1.5px"><path d="M3.3 12.8L6.6 4.2Q7.1 2.9 9 2.9M4.8 6H8.3M8 5.9L11.8 12.4M12.6 5.7L7.5 12.7" stroke="#111" stroke-width="1.1" fill="none"/></svg></div>
<div class="fx fg" style="left:1170px;top:196px"><svg width="16" height="15" style="left:-1.5px;top:-1.5px"><path d="M3.3 12.8L6.6 4.2Q7.1 2.9 9 2.9M4.8 6H8.3M8 5.9L11.8 12.4M12.6 5.7L7.5 12.7" stroke="#111" stroke-width="1.1" fill="none"/></svg></div>
<div class="fx fg" style="left:1240px;top:196px"><svg width="16" height="15" style="left:-1.5px;top:-1.5px"><path d="M3.3 12.8L6.6 4.2Q7.1 2.9 9 2.9M4.8 6H8.3M8 5.9L11.8 12.4M12.6 5.7L7.5 12.7" stroke="#111" stroke-width="1.1" fill="none"/></svg></div>
<div class="fx fg" style="left:1289px;top:196px"><svg width="16" height="15" style="left:-1.5px;top:-1.5px"><path d="M3.3 12.8L6.6 4.2Q7.1 2.9 9 2.9M4.8 6H8.3M8 5.9L11.8 12.4M12.6 5.7L7.5 12.7" stroke="#111" stroke-width="1.1" fill="none"/></svg></div>
<div class="lbl" style="left:289px;top:195px">324_</div>
<div class="lbl" style="left:507px;top:195px">324_74</div>
<div class="lbl" style="left:730px;top:195px">324_</div>
<div class="lbl" style="left:844px;top:195px">324_74</div>
<div class="lbl" style="left:1028px;top:195px">324_74</div>
<div class="lbl" style="left:1315px;top:195px">324_</div>
<div class="clip" style="left:18px;top:236px;width:18px;height:43px;background:#4f2f54;border-left:2px solid #7e6e84"></div>
<div style="left:17px;top:236px;width:1px;height:43px;background:#1a1a1a;"></div>
<div class="clip" style="left:36px;top:236px;width:18px;height:43px;background:#4f2f54;border-left:2px solid #7e6e84"></div>
<div style="left:35px;top:236px;width:1px;height:43px;background:#1a1a1a;"></div>
<div class="clip" style="left:54px;top:236px;width:7px;height:43px;background:#4f2f54;border-left:2px solid #7e6e84"></div>
<div style="left:53px;top:236px;width:1px;height:43px;background:#1a1a1a;"></div>
<div class="clip" style="left:61px;top:236px;width:52px;height:43px;background:#d980d8;border-left:2px solid #eb9cea"></div>
<div style="left:60px;top:236px;width:1px;height:43px;background:#1a1a1a;"></div>
<div class="clip" style="left:113px;top:236px;width:7px;height:43px;background:#4f2f54;border-left:2px solid #7e6e84"></div>
<div style="left:112px;top:236px;width:1px;height:43px;background:#1a1a1a;"></div>
<div class="clip" style="left:120px;top:236px;width:11px;height:43px;background:#d980d8;border-left:2px solid #eb9cea"></div>
<div style="left:119px;top:236px;width:1px;height:43px;background:#1a1a1a;"></div>
<div class="clip" style="left:131px;top:236px;width:17px;height:43px;background:#4f2f54;border-left:2px solid #7e6e84"></div>
<div style="left:130px;top:236px;width:1px;height:43px;background:#1a1a1a;"></div>
<div class="clip" style="left:148px;top:236px;width:29px;height:43px;background:#4f2f54;border-left:2px solid #7e6e84"></div>
<div style="left:147px;top:236px;width:1px;height:43px;background:#1a1a1a;"></div>
<div class="clip" style="left:177px;top:236px;width:7px;height:43px;background:#4f2f54;border-left:2px solid #7e6e84"></div>
<div style="left:176px;top:236px;width:1px;height:43px;background:#1a1a1a;"></div>
<div class="clip" style="left:184px;top:236px;width:21px;height:43px;background:#4f2f54;border-left:2px solid #7e6e84"></div>
<div style="left:183px;top:236px;width:1px;height:43px;background:#1a1a1a;"></div>
<div class="clip" style="left:205px;top:236px;width:10px;height:43px;background:#4f2f54;border-left:2px solid #7e6e84"></div>
<div style="left:204px;top:236px;width:1px;height:43px;background:#1a1a1a;"></div>
<div class="clip" style="left:215px;top:236px;width:23px;height:43px;background:#d980d8;border-left:2px solid #eb9cea"></div>
<div style="left:214px;top:236px;width:1px;height:43px;background:#1a1a1a;"></div>
<div class="clip" style="left:238px;top:236px;width:11px;height:43px;background:#4f2f54;border-left:2px solid #7e6e84"></div>
<div style="left:237px;top:236px;width:1px;height:43px;background:#1a1a1a;"></div>
<div class="clip" style="left:249px;top:236px;width:72px;height:43px;background:#4f2f54;border-left:2px solid #7e6e84"></div>
<div style="left:248px;top:236px;width:1px;height:43px;background:#1a1a1a;"></div>
<div class="clip" style="left:321px;top:236px;width:9px;height:43px;background:#d980d8;border-left:2px solid #eb9cea"></div>
<div style="left:320px;top:236px;width:1px;height:43px;background:#1a1a1a;"></div>
<div class="clip" style="left:330px;top:236px;width:33px;height:43px;background:#4f2f54;border-left:2px solid #7e6e84"></div>
<div style="left:329px;top:236px;width:1px;height:43px;background:#1a1a1a;"></div>
<div class="clip" style="left:363px;top:236px;width:42px;height:43px;background:#4f2f54;border-left:2px solid #7e6e84"></div>
<div style="left:362px;top:236px;width:1px;height:43px;background:#1a1a1a;"></div>
<div class="clip" style="left:405px;top:236px;width:29px;height:43px;background:#4f2f54;border-left:2px solid #7e6e84"></div>
<div style="left:404px;top:236px;width:1px;height:43px;background:#1a1a1a;"></div>
<div class="clip" style="left:434px;top:236px;width:6px;height:43px;background:#d980d8;border-left:2px solid #eb9cea"></div>
<div style="left:433px;top:236px;width:1px;height:43px;background:#1a1a1a;"></div>
<div class="clip" style="left:440px;top:236px;width:3px;height:43px;background:#4f2f54;border-left:2px solid #7e6e84"></div>
<div style="left:439px;top:236px;width:1px;height:43px;background:#1a1a1a;"></div>
<div class="clip" style="left:443px;top:236px;width:24px;height:43px;background:#4f2f54;border-left:2px solid #7e6e84"></div>
<div style="left:442px;top:236px;width:1px;height:43px;background:#1a1a1a;"></div>
<div class="clip" style="left:467px;top:236px;width:86px;height:43px;background:#4f2f54;border-left:2px solid #7e6e84"></div>
<div style="left:466px;top:236px;width:1px;height:43px;background:#1a1a1a;"></div>
<div class="clip" style="left:553px;top:236px;width:28px;height:43px;background:#4f2f54;border-left:2px solid #7e6e84"></div>
<div style="left:552px;top:236px;width:1px;height:43px;background:#1a1a1a;"></div>
<div class="clip" style="left:581px;top:236px;width:11px;height:43px;background:#4f2f54;border-left:2px solid #7e6e84"></div>
<div style="left:580px;top:236px;width:1px;height:43px;background:#1a1a1a;"></div>
<div class="clip" style="left:592px;top:236px;width:11px;height:43px;background:#4f2f54;border-left:2px solid #7e6e84"></div>
<div style="left:591px;top:236px;width:1px;height:43px;background:#1a1a1a;"></div>
<div class="clip" style="left:603px;top:236px;width:44px;height:43px;background:#4f2f54;border-left:2px solid #7e6e84"></div>
<div style="left:602px;top:236px;width:1px;height:43px;background:#1a1a1a;"></div>
<div class="clip" style="left:647px;top:236px;width:7px;height:43px;background:#4f2f54;border-left:2px solid #7e6e84"></div>
<div style="left:646px;top:236px;width:1px;height:43px;background:#1a1a1a;"></div>
<div class="clip" style="left:654px;top:236px;width:19px;height:43px;background:#d980d8;border-left:2px solid #eb9cea"></div>
<div style="left:653px;top:236px;width:1px;height:43px;background:#1a1a1a;"></div>
<div class="clip" style="left:673px;top:236px;width:17px;height:43px;background:#4f2f54;border-left:2px solid #7e6e84"></div>
<div style="left:672px;top:236px;width:1px;height:43px;background:#1a1a1a;"></div>
<div class="clip" style="left:690px;top:236px;width:70px;height:43px;background:#4f2f54;border-left:2px solid #7e6e84"></div>
<div style="left:689px;top:236px;width:1px;height:43px;background:#1a1a1a;"></div>
<div class="clip" style="left:760px;top:236px;width:3px;height:43px;background:#4f2f54;border-left:2px solid #7e6e84"></div>
<div style="left:759px;top:236px;width:1px;height:43px;background:#1a1a1a;"></div>
<div class="clip" style="left:763px;top:236px;width:4px;height:43px;background:#d980d8;border-left:2px solid #eb9cea"></div>
<div style="left:762px;top:236px;width:1px;height:43px;background:#1a1a1a;"></div>
<div class="clip" style="left:767px;top:236px;width:37px;height:43px;background:#4f2f54;border-left:2px solid #7e6e84"></div>
<div style="left:766px;top:236px;width:1px;height:43px;background:#1a1a1a;"></div>
<div class="clip" style="left:804px;top:236px;width:85px;height:43px;background:#4f2f54;border-left:2px solid #7e6e84"></div>
<div style="left:803px;top:236px;width:1px;height:43px;background:#1a1a1a;"></div>
<div class="clip" style="left:889px;top:236px;width:60px;height:43px;background:#4f2f54;border-left:2px solid #7e6e84"></div>
<div style="left:888px;top:236px;width:1px;height:43px;background:#1a1a1a;"></div>
<div class="clip" style="left:949px;top:236px;width:5px;height:43px;background:#4f2f54;border-left:2px solid #7e6e84"></div>
<div style="left:948px;top:236px;width:1px;height:43px;background:#1a1a1a;"></div>
<div class="clip" style="left:954px;top:236px;width:18px;height:43px;background:#d980d8;border-left:2px solid #eb9cea"></div>
<div style="left:953px;top:236px;width:1px;height:43px;background:#1a1a1a;"></div>
<div class="clip" style="left:972px;top:236px;width:16px;height:43px;background:#4f2f54;border-left:2px solid #7e6e84"></div>
<div style="left:971px;top:236px;width:1px;height:43px;background:#1a1a1a;"></div>
<div class="clip" style="left:988px;top:236px;width:84px;height:43px;background:#4f2f54;border-left:2px solid #7e6e84"></div>
<div style="left:987px;top:236px;width:1px;height:43px;background:#1a1a1a;"></div>
<div class="clip" style="left:1072px;top:236px;width:9px;height:43px;background:#d980d8;border-left:2px solid #eb9cea"></div>
<div style="left:1071px;top:236px;width:1px;height:43px;background:#1a1a1a;"></div>
<div class="clip" style="left:1081px;top:236px;width:16px;height:43px;background:#4f2f54;border-left:2px solid #7e6e84"></div>
<div style="left:1080px;top:236px;width:1px;height:43px;background:#1a1a1a;"></div>
<div class="clip" style="left:1097px;top:236px;width:30px;height:43px;background:#4f2f54;border-left:2px solid #7e6e84"></div>
<div style="left:1096px;top:236px;width:1px;height:43px;background:#1a1a1a;"></div>
<div class="clip" style="left:1127px;top:236px;width:16px;height:43px;background:#4f2f54;border-left:2px solid #7e6e84"></div>
<div style="left:1126px;top:236px;width:1px;height:43px;background:#1a1a1a;"></div>
<div class="clip" style="left:1143px;top:236px;width:13px;height:43px;background:#d980d8;border-left:2px solid #eb9cea"></div>
<div style="left:1142px;top:236px;width:1px;height:43px;background:#1a1a1a;"></div>
<div class="clip" style="left:1156px;top:236px;width:48px;height:43px;background:#4f2f54;border-left:2px solid #7e6e84"></div>
<div style="left:1155px;top:236px;width:1px;height:43px;background:#1a1a1a;"></div>
<div class="clip" style="left:1204px;top:236px;width:22px;height:43px;background:#d980d8;border-left:2px solid #eb9cea"></div>
<div style="left:1203px;top:236px;width:1px;height:43px;background:#1a1a1a;"></div>
<div class="clip" style="left:1226px;top:236px;width:40px;height:43px;background:#4f2f54;border-left:2px solid #7e6e84"></div>
<div style="left:1225px;top:236px;width:1px;height:43px;background:#1a1a1a;"></div>
<div class="clip" style="left:1266px;top:236px;width:9px;height:43px;background:#d980d8;border-left:2px solid #eb9cea"></div>
<div style="left:1265px;top:236px;width:1px;height:43px;background:#1a1a1a;"></div>
<div class="clip" style="left:1275px;top:236px;width:76px;height:43px;background:#4f2f54;border-left:2px solid #7e6e84"></div>
<div style="left:1274px;top:236px;width:1px;height:43px;background:#1a1a1a;"></div>
<div class="fx fg" style="left:75px;top:240px"><svg width="16" height="15" style="left:-1.5px;top:-1.5px"><path d="M3.3 12.8L6.6 4.2Q7.1 2.9 9 2.9M4.8 6H8.3M8 5.9L11.8 12.4M12.6 5.7L7.5 12.7" stroke="#111" stroke-width="1.1" fill="none"/></svg></div>
<div class="fx fg" style="left:263px;top:240px"><svg width="16" height="15" style="left:-1.5px;top:-1.5px"><path d="M3.3 12.8L6.6 4.2Q7.1 2.9 9 2.9M4.8 6H8.3M8 5.9L11.8 12.4M12.6 5.7L7.5 12.7" stroke="#111" stroke-width="1.1" fill="none"/></svg></div>
<div class="fx fg" style="left:377px;top:240px"><svg width="16" height="15" style="left:-1.5px;top:-1.5px"><path d="M3.3 12.8L6.6 4.2Q7.1 2.9 9 2.9M4.8 6H8.3M8 5.9L11.8 12.4M12.6 5.7L7.5 12.7" stroke="#111" stroke-width="1.1" fill="none"/></svg></div>
<div class="fx fg" style="left:481px;top:240px"><svg width="16" height="15" style="left:-1.5px;top:-1.5px"><path d="M3.3 12.8L6.6 4.2Q7.1 2.9 9 2.9M4.8 6H8.3M8 5.9L11.8 12.4M12.6 5.7L7.5 12.7" stroke="#111" stroke-width="1.1" fill="none"/></svg></div>
<div class="fx fg" style="left:617px;top:240px"><svg width="16" height="15" style="left:-1.5px;top:-1.5px"><path d="M3.3 12.8L6.6 4.2Q7.1 2.9 9 2.9M4.8 6H8.3M8 5.9L11.8 12.4M12.6 5.7L7.5 12.7" stroke="#111" stroke-width="1.1" fill="none"/></svg></div>
<div class="fx fg" style="left:704px;top:240px"><svg width="16" height="15" style="left:-1.5px;top:-1.5px"><path d="M3.3 12.8L6.6 4.2Q7.1 2.9 9 2.9M4.8 6H8.3M8 5.9L11.8 12.4M12.6 5.7L7.5 12.7" stroke="#111" stroke-width="1.1" fill="none"/></svg></div>
<div class="fx fg" style="left:818px;top:240px"><svg width="16" height="15" style="left:-1.5px;top:-1.5px"><path d="M3.3 12.8L6.6 4.2Q7.1 2.9 9 2.9M4.8 6H8.3M8 5.9L11.8 12.4M12.6 5.7L7.5 12.7" stroke="#111" stroke-width="1.1" fill="none"/></svg></div>
<div class="fx fg" style="left:903px;top:240px"><svg width="16" height="15" style="left:-1.5px;top:-1.5px"><path d="M3.3 12.8L6.6 4.2Q7.1 2.9 9 2.9M4.8 6H8.3M8 5.9L11.8 12.4M12.6 5.7L7.5 12.7" stroke="#111" stroke-width="1.1" fill="none"/></svg></div>
<div class="fx fg" style="left:1002px;top:240px"><svg width="16" height="15" style="left:-1.5px;top:-1.5px"><path d="M3.3 12.8L6.6 4.2Q7.1 2.9 9 2.9M4.8 6H8.3M8 5.9L11.8 12.4M12.6 5.7L7.5 12.7" stroke="#111" stroke-width="1.1" fill="none"/></svg></div>
<div class="fx fg" style="left:1170px;top:240px"><svg width="16" height="15" style="left:-1.5px;top:-1.5px"><path d="M3.3 12.8L6.6 4.2Q7.1 2.9 9 2.9M4.8 6H8.3M8 5.9L11.8 12.4M12.6 5.7L7.5 12.7" stroke="#111" stroke-width="1.1" fill="none"/></svg></div>
<div class="fx fg" style="left:1240px;top:240px"><svg width="16" height="15" style="left:-1.5px;top:-1.5px"><path d="M3.3 12.8L6.6 4.2Q7.1 2.9 9 2.9M4.8 6H8.3M8 5.9L11.8 12.4M12.6 5.7L7.5 12.7" stroke="#111" stroke-width="1.1" fill="none"/></svg></div>
<div class="fx fg" style="left:1289px;top:240px"><svg width="16" height="15" style="left:-1.5px;top:-1.5px"><path d="M3.3 12.8L6.6 4.2Q7.1 2.9 9 2.9M4.8 6H8.3M8 5.9L11.8 12.4M12.6 5.7L7.5 12.7" stroke="#111" stroke-width="1.1" fill="none"/></svg></div>
<div class="lbl" style="left:289px;top:239px">3698</div>
<div class="lbl" style="left:507px;top:239px">369869</div>
<div class="lbl" style="left:730px;top:239px">3698</div>
<div class="lbl" style="left:844px;top:239px">369869</div>
<div class="lbl" style="left:1028px;top:239px">369869</div>
<div class="lbl" style="left:1315px;top:239px">3698</div>
<div class="clip" style="left:18px;top:280px;width:12px;height:43px;background:#6c93c5;border-left:2px solid #8fb1e0"></div>
<div style="left:17px;top:280px;width:1px;height:43px;background:#1a1a1a;"></div>
<div class="clip" style="left:30px;top:280px;width:6px;height:43px;background:#2b3a4f;border-left:2px solid #72757a"></div>
<div style="left:29px;top:280px;width:1px;height:43px;background:#1a1a1a;"></div>
<div class="clip" style="left:36px;top:280px;width:18px;height:43px;background:#6c93c5;border-left:2px solid #8fb1e0"></div>
<div style="left:35px;top:280px;width:1px;height:43px;background:#1a1a1a;"></div>
<div class="clip" style="left:54px;top:280px;width:7px;height:43px;background:#2b3a4f;border-left:2px solid #72757a"></div>
<div style="left:53px;top:280px;width:1px;height:43px;background:#1a1a1a;"></div>
<div class="clip" style="left:61px;top:280px;width:52px;height:43px;background:#2b3a4f;border-left:2px solid #72757a"></div>
<div style="left:60px;top:280px;width:1px;height:43px;background:#1a1a1a;"></div>
<div class="clip" style="left:113px;top:280px;width:7px;height:43px;background:#2b3a4f;border-left:2px solid #72757a"></div>
<div style="left:112px;top:280px;width:1px;height:43px;background:#1a1a1a;"></div>
<div class="clip" style="left:120px;top:280px;width:11px;height:43px;background:#2b3a4f;border-left:2px solid #72757a"></div>
<div style="left:119px;top:280px;width:1px;height:43px;background:#1a1a1a;"></div>
<div class="clip" style="left:131px;top:280px;width:17px;height:43px;background:#2b3a4f;border-left:2px solid #72757a"></div>
<div style="left:130px;top:280px;width:1px;height:43px;background:#1a1a1a;"></div>
<div class="clip" style="left:148px;top:280px;width:28px;height:43px;background:#6c93c5;border-left:2px solid #8fb1e0"></div>
<div style="left:147px;top:280px;width:1px;height:43px;background:#1a1a1a;"></div>
<div class="clip" style="left:176px;top:280px;width:8px;height:43px;background:#2b3a4f;border-left:2px solid #72757a"></div>
<div style="left:175px;top:280px;width:1px;height:43px;background:#1a1a1a;"></div>
<div class="clip" style="left:184px;top:280px;width:21px;height:43px;background:#6c93c5;border-left:2px solid #8fb1e0"></div>
<div style="left:183px;top:280px;width:1px;height:43px;background:#1a1a1a;"></div>
<div class="clip" style="left:205px;top:280px;width:4px;height:43px;background:#2b3a4f;border-left:2px solid #72757a"></div>
<div style="left:204px;top:280px;width:1px;height:43px;background:#1a1a1a;"></div>
<div class="clip" style="left:209px;top:280px;width:6px;height:43px;background:#6c93c5;border-left:2px solid #8fb1e0"></div>
<div style="left:208px;top:280px;width:1px;height:43px;background:#1a1a1a;"></div>
<div class="clip" style="left:215px;top:280px;width:23px;height:43px;background:#2b3a4f;border-left:2px solid #72757a"></div>
<div style="left:214px;top:280px;width:1px;height:43px;background:#1a1a1a;"></div>
<div class="clip" style="left:238px;top:280px;width:11px;height:43px;background:#2b3a4f;border-left:2px solid #72757a"></div>
<div style="left:237px;top:280px;width:1px;height:43px;background:#1a1a1a;"></div>
<div class="clip" style="left:249px;top:280px;width:72px;height:43px;background:#6c93c5;border-left:2px solid #8fb1e0"></div>
<div style="left:248px;top:280px;width:1px;height:43px;background:#1a1a1a;"></div>
<div class="clip" style="left:321px;top:280px;width:9px;height:43px;background:#2b3a4f;border-left:2px solid #72757a"></div>
<div style="left:320px;top:280px;width:1px;height:43px;background:#1a1a1a;"></div>
<div class="clip" style="left:330px;top:280px;width:33px;height:43px;background:#6c93c5;border-left:2px solid #8fb1e0"></div>
<div style="left:329px;top:280px;width:1px;height:43px;background:#1a1a1a;"></div>
<div class="clip" style="left:363px;top:280px;width:42px;height:43px;background:#6c93c5;border-left:2px solid #8fb1e0"></div>
<div style="left:362px;top:280px;width:1px;height:43px;background:#1a1a1a;"></div>
<div class="clip" style="left:405px;top:280px;width:35px;height:43px;background:#6c93c5;border-left:2px solid #8fb1e0"></div>
<div style="left:404px;top:280px;width:1px;height:43px;background:#1a1a1a;"></div>
<div class="clip" style="left:440px;top:280px;width:3px;height:43px;background:#2b3a4f;border-left:2px solid #72757a"></div>
<div style="left:439px;top:280px;width:1px;height:43px;background:#1a1a1a;"></div>
<div class="clip" style="left:443px;top:280px;width:24px;height:43px;background:#2b3a4f;border-left:2px solid #72757a"></div>
<div style="left:442px;top:280px;width:1px;height:43px;background:#1a1a1a;"></div>
<div class="clip" style="left:467px;top:280px;width:86px;height:43px;background:#6c93c5;border-left:2px solid #8fb1e0"></div>
<div style="left:466px;top:280px;width:1px;height:43px;background:#1a1a1a;"></div>
<div class="clip" style="left:553px;top:280px;width:28px;height:43px;background:#2b3a4f;border-left:2px solid #72757a"></div>
<div style="left:552px;top:280px;width:1px;height:43px;background:#1a1a1a;"></div>
<div class="clip" style="left:581px;top:280px;width:11px;height:43px;background:#2b3a4f;border-left:2px solid #72757a"></div>
<div style="left:580px;top:280px;width:1px;height:43px;background:#1a1a1a;"></div>
<div class="clip" style="left:592px;top:280px;width:11px;height:43px;background:#2b3a4f;border-left:2px solid #72757a"></div>
<div style="left:591px;top:280px;width:1px;height:43px;background:#1a1a1a;"></div>
<div class="clip" style="left:603px;top:280px;width:44px;height:43px;background:#6c93c5;border-left:2px solid #8fb1e0"></div>
<div style="left:602px;top:280px;width:1px;height:43px;background:#1a1a1a;"></div>
<div class="clip" style="left:647px;top:280px;width:7px;height:43px;background:#2b3a4f;border-left:2px solid #72757a"></div>
<div style="left:646px;top:280px;width:1px;height:43px;background:#1a1a1a;"></div>
<div class="clip" style="left:654px;top:280px;width:19px;height:43px;background:#2b3a4f;border-left:2px solid #72757a"></div>
<div style="left:653px;top:280px;width:1px;height:43px;background:#1a1a1a;"></div>
<div class="clip" style="left:673px;top:280px;width:17px;height:43px;background:#2b3a4f;border-left:2px solid #72757a"></div>
<div style="left:672px;top:280px;width:1px;height:43px;background:#1a1a1a;"></div>
<div class="clip" style="left:690px;top:280px;width:70px;height:43px;background:#6c93c5;border-left:2px solid #8fb1e0"></div>
<div style="left:689px;top:280px;width:1px;height:43px;background:#1a1a1a;"></div>
<div class="clip" style="left:760px;top:280px;width:3px;height:43px;background:#2b3a4f;border-left:2px solid #72757a"></div>
<div style="left:759px;top:280px;width:1px;height:43px;background:#1a1a1a;"></div>
<div class="clip" style="left:763px;top:280px;width:4px;height:43px;background:#2b3a4f;border-left:2px solid #72757a"></div>
<div style="left:762px;top:280px;width:1px;height:43px;background:#1a1a1a;"></div>
<div class="clip" style="left:767px;top:280px;width:4px;height:43px;background:#6c93c5;border-left:2px solid #8fb1e0"></div>
<div style="left:766px;top:280px;width:1px;height:43px;background:#1a1a1a;"></div>
<div class="clip" style="left:771px;top:280px;width:33px;height:43px;background:#2b3a4f;border-left:2px solid #72757a"></div>
<div style="left:770px;top:280px;width:1px;height:43px;background:#1a1a1a;"></div>
<div class="clip" style="left:804px;top:280px;width:85px;height:43px;background:#6c93c5;border-left:2px solid #8fb1e0"></div>
<div style="left:803px;top:280px;width:1px;height:43px;background:#1a1a1a;"></div>
<div class="clip" style="left:889px;top:280px;width:60px;height:43px;background:#2b3a4f;border-left:2px solid #72757a"></div>
<div style="left:888px;top:280px;width:1px;height:43px;background:#1a1a1a;"></div>
<div class="clip" style="left:949px;top:280px;width:5px;height:43px;background:#6c93c5;border-left:2px solid #8fb1e0"></div>
<div style="left:948px;top:280px;width:1px;height:43px;background:#1a1a1a;"></div>
<div class="clip" style="left:954px;top:280px;width:18px;height:43px;background:#2b3a4f;border-left:2px solid #72757a"></div>
<div style="left:953px;top:280px;width:1px;height:43px;background:#1a1a1a;"></div>
<div class="clip" style="left:972px;top:280px;width:16px;height:43px;background:#2b3a4f;border-left:2px solid #72757a"></div>
<div style="left:971px;top:280px;width:1px;height:43px;background:#1a1a1a;"></div>
<div class="clip" style="left:988px;top:280px;width:84px;height:43px;background:#6c93c5;border-left:2px solid #8fb1e0"></div>
<div style="left:987px;top:280px;width:1px;height:43px;background:#1a1a1a;"></div>
<div class="clip" style="left:1072px;top:280px;width:9px;height:43px;background:#2b3a4f;border-left:2px solid #72757a"></div>
<div style="left:1071px;top:280px;width:1px;height:43px;background:#1a1a1a;"></div>
<div class="clip" style="left:1081px;top:280px;width:16px;height:43px;background:#2b3a4f;border-left:2px solid #72757a"></div>
<div style="left:1080px;top:280px;width:1px;height:43px;background:#1a1a1a;"></div>
<div class="clip" style="left:1097px;top:280px;width:30px;height:43px;background:#6c93c5;border-left:2px solid #8fb1e0"></div>
<div style="left:1096px;top:280px;width:1px;height:43px;background:#1a1a1a;"></div>
<div class="clip" style="left:1127px;top:280px;width:16px;height:43px;background:#2b3a4f;border-left:2px solid #72757a"></div>
<div style="left:1126px;top:280px;width:1px;height:43px;background:#1a1a1a;"></div>
<div class="clip" style="left:1143px;top:280px;width:13px;height:43px;background:#2b3a4f;border-left:2px solid #72757a"></div>
<div style="left:1142px;top:280px;width:1px;height:43px;background:#1a1a1a;"></div>
<div class="clip" style="left:1156px;top:280px;width:70px;height:43px;background:#6c93c5;border-left:2px solid #8fb1e0"></div>
<div style="left:1155px;top:280px;width:1px;height:43px;background:#1a1a1a;"></div>
<div class="clip" style="left:1226px;top:280px;width:49px;height:43px;background:#6c93c5;border-left:2px solid #8fb1e0"></div>
<div style="left:1225px;top:280px;width:1px;height:43px;background:#1a1a1a;"></div>
<div class="clip" style="left:1275px;top:280px;width:76px;height:43px;background:#2b3a4f;border-left:2px solid #72757a"></div>
<div style="left:1274px;top:280px;width:1px;height:43px;background:#1a1a1a;"></div>
<div class="fx fg" style="left:75px;top:284px"><svg width="16" height="15" style="left:-1.5px;top:-1.5px"><path d="M3.3 12.8L6.6 4.2Q7.1 2.9 9 2.9M4.8 6H8.3M8 5.9L11.8 12.4M12.6 5.7L7.5 12.7" stroke="#111" stroke-width="1.1" fill="none"/></svg></div>
<div class="fx fg" style="left:263px;top:284px"><svg width="16" height="15" style="left:-1.5px;top:-1.5px"><path d="M3.3 12.8L6.6 4.2Q7.1 2.9 9 2.9M4.8 6H8.3M8 5.9L11.8 12.4M12.6 5.7L7.5 12.7" stroke="#111" stroke-width="1.1" fill="none"/></svg></div>
<div class="fx fg" style="left:377px;top:284px"><svg width="16" height="15" style="left:-1.5px;top:-1.5px"><path d="M3.3 12.8L6.6 4.2Q7.1 2.9 9 2.9M4.8 6H8.3M8 5.9L11.8 12.4M12.6 5.7L7.5 12.7" stroke="#111" stroke-width="1.1" fill="none"/></svg></div>
<div class="fx fg" style="left:481px;top:284px"><svg width="16" height="15" style="left:-1.5px;top:-1.5px"><path d="M3.3 12.8L6.6 4.2Q7.1 2.9 9 2.9M4.8 6H8.3M8 5.9L11.8 12.4M12.6 5.7L7.5 12.7" stroke="#111" stroke-width="1.1" fill="none"/></svg></div>
<div class="fx fg" style="left:617px;top:284px"><svg width="16" height="15" style="left:-1.5px;top:-1.5px"><path d="M3.3 12.8L6.6 4.2Q7.1 2.9 9 2.9M4.8 6H8.3M8 5.9L11.8 12.4M12.6 5.7L7.5 12.7" stroke="#111" stroke-width="1.1" fill="none"/></svg></div>
<div class="fx fg" style="left:704px;top:284px"><svg width="16" height="15" style="left:-1.5px;top:-1.5px"><path d="M3.3 12.8L6.6 4.2Q7.1 2.9 9 2.9M4.8 6H8.3M8 5.9L11.8 12.4M12.6 5.7L7.5 12.7" stroke="#111" stroke-width="1.1" fill="none"/></svg></div>
<div class="fx fg" style="left:818px;top:284px"><svg width="16" height="15" style="left:-1.5px;top:-1.5px"><path d="M3.3 12.8L6.6 4.2Q7.1 2.9 9 2.9M4.8 6H8.3M8 5.9L11.8 12.4M12.6 5.7L7.5 12.7" stroke="#111" stroke-width="1.1" fill="none"/></svg></div>
<div class="fx fg" style="left:903px;top:284px"><svg width="16" height="15" style="left:-1.5px;top:-1.5px"><path d="M3.3 12.8L6.6 4.2Q7.1 2.9 9 2.9M4.8 6H8.3M8 5.9L11.8 12.4M12.6 5.7L7.5 12.7" stroke="#111" stroke-width="1.1" fill="none"/></svg></div>
<div class="fx fg" style="left:1002px;top:284px"><svg width="16" height="15" style="left:-1.5px;top:-1.5px"><path d="M3.3 12.8L6.6 4.2Q7.1 2.9 9 2.9M4.8 6H8.3M8 5.9L11.8 12.4M12.6 5.7L7.5 12.7" stroke="#111" stroke-width="1.1" fill="none"/></svg></div>
<div class="fx fg" style="left:1170px;top:284px"><svg width="16" height="15" style="left:-1.5px;top:-1.5px"><path d="M3.3 12.8L6.6 4.2Q7.1 2.9 9 2.9M4.8 6H8.3M8 5.9L11.8 12.4M12.6 5.7L7.5 12.7" stroke="#111" stroke-width="1.1" fill="none"/></svg></div>
<div class="fx fg" style="left:1240px;top:284px"><svg width="16" height="15" style="left:-1.5px;top:-1.5px"><path d="M3.3 12.8L6.6 4.2Q7.1 2.9 9 2.9M4.8 6H8.3M8 5.9L11.8 12.4M12.6 5.7L7.5 12.7" stroke="#111" stroke-width="1.1" fill="none"/></svg></div>
<div class="fx fg" style="left:1289px;top:284px"><svg width="16" height="15" style="left:-1.5px;top:-1.5px"><path d="M3.3 12.8L6.6 4.2Q7.1 2.9 9 2.9M4.8 6H8.3M8 5.9L11.8 12.4M12.6 5.7L7.5 12.7" stroke="#111" stroke-width="1.1" fill="none"/></svg></div>
<div class="lbl" style="left:289px;top:283px;letter-spacing:-0.45px">B-CA</div>
<div class="lbl" style="left:507px;top:283px;letter-spacing:-0.45px">B-CAM</div>
<div class="lbl" style="left:730px;top:283px;letter-spacing:-0.45px">B-CA</div>
<div class="lbl" style="left:844px;top:283px;letter-spacing:-0.45px">B-CAM</div>
<div class="lbl" style="left:1028px;top:283px;letter-spacing:-0.45px">B-CAM</div>
<div class="lbl" style="left:1196px;top:283px;letter-spacing:-0.45px">B-C</div>
<div class="lbl" style="left:1315px;top:283px;letter-spacing:-0.45px">B-CA</div>
<div class="clip" style="left:18px;top:325px;width:12px;height:43px;background:#d980d8;border-left:2px solid #eb9cea"></div>
<div style="left:17px;top:325px;width:1px;height:43px;background:#1a1a1a;"></div>
<div class="clip" style="left:30px;top:325px;width:6px;height:43px;background:#4f2f54;border-left:2px solid #7e6e84"></div>
<div style="left:29px;top:325px;width:1px;height:43px;background:#1a1a1a;"></div>
<div class="clip" style="left:36px;top:325px;width:18px;height:43px;background:#d980d8;border-left:2px solid #eb9cea"></div>
<div style="left:35px;top:325px;width:1px;height:43px;background:#1a1a1a;"></div>
<div class="clip" style="left:54px;top:325px;width:59px;height:43px;background:#4f2f54;border-left:2px solid #7e6e84"></div>
<div style="left:53px;top:325px;width:1px;height:43px;background:#1a1a1a;"></div>
<div class="clip" style="left:113px;top:325px;width:7px;height:43px;background:#4f2f54;border-left:2px solid #7e6e84"></div>
<div style="left:112px;top:325px;width:1px;height:43px;background:#1a1a1a;"></div>
<div class="clip" style="left:120px;top:325px;width:11px;height:43px;background:#4f2f54;border-left:2px solid #7e6e84"></div>
<div style="left:119px;top:325px;width:1px;height:43px;background:#1a1a1a;"></div>
<div class="clip" style="left:131px;top:325px;width:17px;height:43px;background:#4f2f54;border-left:2px solid #7e6e84"></div>
<div style="left:130px;top:325px;width:1px;height:43px;background:#1a1a1a;"></div>
<div class="clip" style="left:148px;top:325px;width:28px;height:43px;background:#d980d8;border-left:2px solid #eb9cea"></div>
<div style="left:147px;top:325px;width:1px;height:43px;background:#1a1a1a;"></div>
<div class="clip" style="left:176px;top:325px;width:8px;height:43px;background:#4f2f54;border-left:2px solid #7e6e84"></div>
<div style="left:175px;top:325px;width:1px;height:43px;background:#1a1a1a;"></div>
<div class="clip" style="left:184px;top:325px;width:21px;height:43px;background:#d980d8;border-left:2px solid #eb9cea"></div>
<div style="left:183px;top:325px;width:1px;height:43px;background:#1a1a1a;"></div>
<div class="clip" style="left:205px;top:325px;width:4px;height:43px;background:#4f2f54;border-left:2px solid #7e6e84"></div>
<div style="left:204px;top:325px;width:1px;height:43px;background:#1a1a1a;"></div>
<div class="clip" style="left:209px;top:325px;width:6px;height:43px;background:#d980d8;border-left:2px solid #eb9cea"></div>
<div style="left:208px;top:325px;width:1px;height:43px;background:#1a1a1a;"></div>
<div class="clip" style="left:215px;top:325px;width:23px;height:43px;background:#4f2f54;border-left:2px solid #7e6e84"></div>
<div style="left:214px;top:325px;width:1px;height:43px;background:#1a1a1a;"></div>
<div class="clip" style="left:238px;top:325px;width:11px;height:43px;background:#4f2f54;border-left:2px solid #7e6e84"></div>
<div style="left:237px;top:325px;width:1px;height:43px;background:#1a1a1a;"></div>
<div class="clip" style="left:249px;top:325px;width:72px;height:43px;background:#d980d8;border-left:2px solid #eb9cea"></div>
<div style="left:248px;top:325px;width:1px;height:43px;background:#1a1a1a;"></div>
<div class="clip" style="left:321px;top:325px;width:9px;height:43px;background:#4f2f54;border-left:2px solid #7e6e84"></div>
<div style="left:320px;top:325px;width:1px;height:43px;background:#1a1a1a;"></div>
<div class="clip" style="left:330px;top:325px;width:33px;height:43px;background:#d980d8;border-left:2px solid #eb9cea"></div>
<div style="left:329px;top:325px;width:1px;height:43px;background:#1a1a1a;"></div>
<div class="clip" style="left:363px;top:325px;width:42px;height:43px;background:#4f2f54;border-left:2px solid #7e6e84"></div>
<div style="left:362px;top:325px;width:1px;height:43px;background:#1a1a1a;"></div>
<div class="clip" style="left:405px;top:325px;width:35px;height:43px;background:#d980d8;border-left:2px solid #eb9cea"></div>
<div style="left:404px;top:325px;width:1px;height:43px;background:#1a1a1a;"></div>
<div class="clip" style="left:440px;top:325px;width:3px;height:43px;background:#4f2f54;border-left:2px solid #7e6e84"></div>
<div style="left:439px;top:325px;width:1px;height:43px;background:#1a1a1a;"></div>
<div class="clip" style="left:443px;top:325px;width:24px;height:43px;background:#4f2f54;border-left:2px solid #7e6e84"></div>
<div style="left:442px;top:325px;width:1px;height:43px;background:#1a1a1a;"></div>
<div class="clip" style="left:467px;top:325px;width:86px;height:43px;background:#d980d8;border-left:2px solid #eb9cea"></div>
<div style="left:466px;top:325px;width:1px;height:43px;background:#1a1a1a;"></div>
<div class="clip" style="left:553px;top:325px;width:28px;height:43px;background:#4f2f54;border-left:2px solid #7e6e84"></div>
<div style="left:552px;top:325px;width:1px;height:43px;background:#1a1a1a;"></div>
<div class="clip" style="left:581px;top:325px;width:11px;height:43px;background:#4f2f54;border-left:2px solid #7e6e84"></div>
<div style="left:580px;top:325px;width:1px;height:43px;background:#1a1a1a;"></div>
<div class="clip" style="left:592px;top:325px;width:11px;height:43px;background:#4f2f54;border-left:2px solid #7e6e84"></div>
<div style="left:591px;top:325px;width:1px;height:43px;background:#1a1a1a;"></div>
<div class="clip" style="left:603px;top:325px;width:44px;height:43px;background:#d980d8;border-left:2px solid #eb9cea"></div>
<div style="left:602px;top:325px;width:1px;height:43px;background:#1a1a1a;"></div>
<div class="clip" style="left:647px;top:325px;width:7px;height:43px;background:#4f2f54;border-left:2px solid #7e6e84"></div>
<div style="left:646px;top:325px;width:1px;height:43px;background:#1a1a1a;"></div>
<div class="clip" style="left:654px;top:325px;width:19px;height:43px;background:#4f2f54;border-left:2px solid #7e6e84"></div>
<div style="left:653px;top:325px;width:1px;height:43px;background:#1a1a1a;"></div>
<div class="clip" style="left:673px;top:325px;width:17px;height:43px;background:#4f2f54;border-left:2px solid #7e6e84"></div>
<div style="left:672px;top:325px;width:1px;height:43px;background:#1a1a1a;"></div>
<div class="clip" style="left:690px;top:325px;width:70px;height:43px;background:#d980d8;border-left:2px solid #eb9cea"></div>
<div style="left:689px;top:325px;width:1px;height:43px;background:#1a1a1a;"></div>
<div class="clip" style="left:760px;top:325px;width:3px;height:43px;background:#4f2f54;border-left:2px solid #7e6e84"></div>
<div style="left:759px;top:325px;width:1px;height:43px;background:#1a1a1a;"></div>
<div class="clip" style="left:763px;top:325px;width:4px;height:43px;background:#d980d8;border-left:2px solid #eb9cea"></div>
<div style="left:762px;top:325px;width:1px;height:43px;background:#1a1a1a;"></div>
<div class="clip" style="left:767px;top:325px;width:4px;height:43px;background:#4f2f54;border-left:2px solid #7e6e84"></div>
<div style="left:766px;top:325px;width:1px;height:43px;background:#1a1a1a;"></div>
<div class="clip" style="left:771px;top:325px;width:33px;height:43px;background:#4f2f54;border-left:2px solid #7e6e84"></div>
<div style="left:770px;top:325px;width:1px;height:43px;background:#1a1a1a;"></div>
<div class="clip" style="left:804px;top:325px;width:85px;height:43px;background:#d980d8;border-left:2px solid #eb9cea"></div>
<div style="left:803px;top:325px;width:1px;height:43px;background:#1a1a1a;"></div>
<div class="clip" style="left:889px;top:325px;width:60px;height:43px;background:#4f2f54;border-left:2px solid #7e6e84"></div>
<div style="left:888px;top:325px;width:1px;height:43px;background:#1a1a1a;"></div>
<div class="clip" style="left:949px;top:325px;width:5px;height:43px;background:#d980d8;border-left:2px solid #eb9cea"></div>
<div style="left:948px;top:325px;width:1px;height:43px;background:#1a1a1a;"></div>
<div class="clip" style="left:954px;top:325px;width:18px;height:43px;background:#d980d8;border-left:2px solid #eb9cea"></div>
<div style="left:953px;top:325px;width:1px;height:43px;background:#1a1a1a;"></div>
<div class="clip" style="left:972px;top:325px;width:16px;height:43px;background:#4f2f54;border-left:2px solid #7e6e84"></div>
<div style="left:971px;top:325px;width:1px;height:43px;background:#1a1a1a;"></div>
<div class="clip" style="left:988px;top:325px;width:84px;height:43px;background:#d980d8;border-left:2px solid #eb9cea"></div>
<div style="left:987px;top:325px;width:1px;height:43px;background:#1a1a1a;"></div>
<div class="clip" style="left:1072px;top:325px;width:9px;height:43px;background:#4f2f54;border-left:2px solid #7e6e84"></div>
<div style="left:1071px;top:325px;width:1px;height:43px;background:#1a1a1a;"></div>
<div class="clip" style="left:1081px;top:325px;width:16px;height:43px;background:#4f2f54;border-left:2px solid #7e6e84"></div>
<div style="left:1080px;top:325px;width:1px;height:43px;background:#1a1a1a;"></div>
<div class="clip" style="left:1097px;top:325px;width:30px;height:43px;background:#d980d8;border-left:2px solid #eb9cea"></div>
<div style="left:1096px;top:325px;width:1px;height:43px;background:#1a1a1a;"></div>
<div class="clip" style="left:1127px;top:325px;width:16px;height:43px;background:#4f2f54;border-left:2px solid #7e6e84"></div>
<div style="left:1126px;top:325px;width:1px;height:43px;background:#1a1a1a;"></div>
<div class="clip" style="left:1143px;top:325px;width:13px;height:43px;background:#4f2f54;border-left:2px solid #7e6e84"></div>
<div style="left:1142px;top:325px;width:1px;height:43px;background:#1a1a1a;"></div>
<div class="clip" style="left:1156px;top:325px;width:70px;height:43px;background:#d980d8;border-left:2px solid #eb9cea"></div>
<div style="left:1155px;top:325px;width:1px;height:43px;background:#1a1a1a;"></div>
<div class="clip" style="left:1226px;top:325px;width:49px;height:43px;background:#d980d8;border-left:2px solid #eb9cea"></div>
<div style="left:1225px;top:325px;width:1px;height:43px;background:#1a1a1a;"></div>
<div class="clip" style="left:1275px;top:325px;width:76px;height:43px;background:#4f2f54;border-left:2px solid #7e6e84"></div>
<div style="left:1274px;top:325px;width:1px;height:43px;background:#1a1a1a;"></div>
<div class="fx fg" style="left:68px;top:329px"><svg width="16" height="15" style="left:-1.5px;top:-1.5px"><path d="M3.3 12.8L6.6 4.2Q7.1 2.9 9 2.9M4.8 6H8.3M8 5.9L11.8 12.4M12.6 5.7L7.5 12.7" stroke="#111" stroke-width="1.1" fill="none"/></svg></div>
<div class="fx fg" style="left:263px;top:329px"><svg width="16" height="15" style="left:-1.5px;top:-1.5px"><path d="M3.3 12.8L6.6 4.2Q7.1 2.9 9 2.9M4.8 6H8.3M8 5.9L11.8 12.4M12.6 5.7L7.5 12.7" stroke="#111" stroke-width="1.1" fill="none"/></svg></div>
<div class="fx fg" style="left:377px;top:329px"><svg width="16" height="15" style="left:-1.5px;top:-1.5px"><path d="M3.3 12.8L6.6 4.2Q7.1 2.9 9 2.9M4.8 6H8.3M8 5.9L11.8 12.4M12.6 5.7L7.5 12.7" stroke="#111" stroke-width="1.1" fill="none"/></svg></div>
<div class="fx fg" style="left:481px;top:329px"><svg width="16" height="15" style="left:-1.5px;top:-1.5px"><path d="M3.3 12.8L6.6 4.2Q7.1 2.9 9 2.9M4.8 6H8.3M8 5.9L11.8 12.4M12.6 5.7L7.5 12.7" stroke="#111" stroke-width="1.1" fill="none"/></svg></div>
<div class="fx fg" style="left:617px;top:329px"><svg width="16" height="15" style="left:-1.5px;top:-1.5px"><path d="M3.3 12.8L6.6 4.2Q7.1 2.9 9 2.9M4.8 6H8.3M8 5.9L11.8 12.4M12.6 5.7L7.5 12.7" stroke="#111" stroke-width="1.1" fill="none"/></svg></div>
<div class="fx fg" style="left:704px;top:329px"><svg width="16" height="15" style="left:-1.5px;top:-1.5px"><path d="M3.3 12.8L6.6 4.2Q7.1 2.9 9 2.9M4.8 6H8.3M8 5.9L11.8 12.4M12.6 5.7L7.5 12.7" stroke="#111" stroke-width="1.1" fill="none"/></svg></div>
<div class="fx fg" style="left:818px;top:329px"><svg width="16" height="15" style="left:-1.5px;top:-1.5px"><path d="M3.3 12.8L6.6 4.2Q7.1 2.9 9 2.9M4.8 6H8.3M8 5.9L11.8 12.4M12.6 5.7L7.5 12.7" stroke="#111" stroke-width="1.1" fill="none"/></svg></div>
<div class="fx fg" style="left:903px;top:329px"><svg width="16" height="15" style="left:-1.5px;top:-1.5px"><path d="M3.3 12.8L6.6 4.2Q7.1 2.9 9 2.9M4.8 6H8.3M8 5.9L11.8 12.4M12.6 5.7L7.5 12.7" stroke="#111" stroke-width="1.1" fill="none"/></svg></div>
<div class="fx fg" style="left:1002px;top:329px"><svg width="16" height="15" style="left:-1.5px;top:-1.5px"><path d="M3.3 12.8L6.6 4.2Q7.1 2.9 9 2.9M4.8 6H8.3M8 5.9L11.8 12.4M12.6 5.7L7.5 12.7" stroke="#111" stroke-width="1.1" fill="none"/></svg></div>
<div class="fx fg" style="left:1170px;top:329px"><svg width="16" height="15" style="left:-1.5px;top:-1.5px"><path d="M3.3 12.8L6.6 4.2Q7.1 2.9 9 2.9M4.8 6H8.3M8 5.9L11.8 12.4M12.6 5.7L7.5 12.7" stroke="#111" stroke-width="1.1" fill="none"/></svg></div>
<div class="fx fg" style="left:1240px;top:329px"><svg width="16" height="15" style="left:-1.5px;top:-1.5px"><path d="M3.3 12.8L6.6 4.2Q7.1 2.9 9 2.9M4.8 6H8.3M8 5.9L11.8 12.4M12.6 5.7L7.5 12.7" stroke="#111" stroke-width="1.1" fill="none"/></svg></div>
<div class="fx fg" style="left:1289px;top:329px"><svg width="16" height="15" style="left:-1.5px;top:-1.5px"><path d="M3.3 12.8L6.6 4.2Q7.1 2.9 9 2.9M4.8 6H8.3M8 5.9L11.8 12.4M12.6 5.7L7.5 12.7" stroke="#111" stroke-width="1.1" fill="none"/></svg></div>
<div class="lbl" style="left:289px;top:328px">3698</div>
<div class="lbl" style="left:507px;top:328px">369868</div>
<div class="lbl" style="left:730px;top:328px">3698</div>
<div class="lbl" style="left:844px;top:328px">369868</div>
<div class="lbl" style="left:1028px;top:328px">369868</div>
<div class="lbl" style="left:1196px;top:328px">369</div>
<div class="lbl" style="left:1315px;top:328px">3698</div>
<div class="clip" style="left:18px;top:369px;width:18px;height:43px;background:#6c93c5;border-left:2px solid #8fb1e0"></div>
<div style="left:17px;top:369px;width:1px;height:43px;background:#1a1a1a;"></div>
<div class="clip" style="left:36px;top:369px;width:18px;height:43px;background:#6c93c5;border-left:2px solid #8fb1e0"></div>
<div style="left:35px;top:369px;width:1px;height:43px;background:#1a1a1a;"></div>
<div class="clip" style="left:54px;top:369px;width:59px;height:43px;background:#6c93c5;border-left:2px solid #8fb1e0"></div>
<div style="left:53px;top:369px;width:1px;height:43px;background:#1a1a1a;"></div>
<div class="clip" style="left:113px;top:369px;width:7px;height:43px;background:#6c93c5;border-left:2px solid #8fb1e0"></div>
<div style="left:112px;top:369px;width:1px;height:43px;background:#1a1a1a;"></div>
<div class="clip" style="left:120px;top:369px;width:11px;height:43px;background:#6c93c5;border-left:2px solid #8fb1e0"></div>
<div style="left:119px;top:369px;width:1px;height:43px;background:#1a1a1a;"></div>
<div class="clip" style="left:131px;top:369px;width:17px;height:43px;background:#6c93c5;border-left:2px solid #8fb1e0"></div>
<div style="left:130px;top:369px;width:1px;height:43px;background:#1a1a1a;"></div>
<div class="clip" style="left:148px;top:369px;width:28px;height:43px;background:#6c93c5;border-left:2px solid #8fb1e0"></div>
<div style="left:147px;top:369px;width:1px;height:43px;background:#1a1a1a;"></div>
<div class="clip" style="left:176px;top:369px;width:8px;height:43px;background:#6c93c5;border-left:2px solid #8fb1e0"></div>
<div style="left:175px;top:369px;width:1px;height:43px;background:#1a1a1a;"></div>
<div class="clip" style="left:184px;top:369px;width:25px;height:43px;background:#6c93c5;border-left:2px solid #8fb1e0"></div>
<div style="left:183px;top:369px;width:1px;height:43px;background:#1a1a1a;"></div>
<div class="clip" style="left:209px;top:369px;width:6px;height:43px;background:#6c93c5;border-left:2px solid #8fb1e0"></div>
<div style="left:208px;top:369px;width:1px;height:43px;background:#1a1a1a;"></div>
<div class="clip" style="left:215px;top:369px;width:23px;height:43px;background:#6c93c5;border-left:2px solid #8fb1e0"></div>
<div style="left:214px;top:369px;width:1px;height:43px;background:#1a1a1a;"></div>
<div class="clip" style="left:238px;top:369px;width:11px;height:43px;background:#6c93c5;border-left:2px solid #8fb1e0"></div>
<div style="left:237px;top:369px;width:1px;height:43px;background:#1a1a1a;"></div>
<div class="clip" style="left:249px;top:369px;width:72px;height:43px;background:#6c93c5;border-left:2px solid #8fb1e0"></div>
<div style="left:248px;top:369px;width:1px;height:43px;background:#1a1a1a;"></div>
<div class="clip" style="left:321px;top:369px;width:9px;height:43px;background:#6c93c5;border-left:2px solid #8fb1e0"></div>
<div style="left:320px;top:369px;width:1px;height:43px;background:#1a1a1a;"></div>
<div class="clip" style="left:330px;top:369px;width:33px;height:43px;background:#6c93c5;border-left:2px solid #8fb1e0"></div>
<div style="left:329px;top:369px;width:1px;height:43px;background:#1a1a1a;"></div>
<div class="clip" style="left:363px;top:369px;width:77px;height:43px;background:#6c93c5;border-left:2px solid #8fb1e0"></div>
<div style="left:362px;top:369px;width:1px;height:43px;background:#1a1a1a;"></div>
<div class="clip" style="left:440px;top:369px;width:3px;height:43px;background:#6c93c5;border-left:2px solid #8fb1e0"></div>
<div style="left:439px;top:369px;width:1px;height:43px;background:#1a1a1a;"></div>
<div class="clip" style="left:443px;top:369px;width:24px;height:43px;background:#6c93c5;border-left:2px solid #8fb1e0"></div>
<div style="left:442px;top:369px;width:1px;height:43px;background:#1a1a1a;"></div>
<div class="clip" style="left:467px;top:369px;width:86px;height:43px;background:#6c93c5;border-left:2px solid #8fb1e0"></div>
<div style="left:466px;top:369px;width:1px;height:43px;background:#1a1a1a;"></div>
<div class="clip" style="left:553px;top:369px;width:28px;height:43px;background:#6c93c5;border-left:2px solid #8fb1e0"></div>
<div style="left:552px;top:369px;width:1px;height:43px;background:#1a1a1a;"></div>
<div class="clip" style="left:581px;top:369px;width:10px;height:43px;background:#6c93c5;border-left:2px solid #8fb1e0"></div>
<div style="left:580px;top:369px;width:1px;height:43px;background:#1a1a1a;"></div>
<div class="clip" style="left:591px;top:369px;width:12px;height:43px;background:#6c93c5;border-left:2px solid #8fb1e0"></div>
<div style="left:590px;top:369px;width:1px;height:43px;background:#1a1a1a;"></div>
<div class="clip" style="left:603px;top:369px;width:44px;height:43px;background:#6c93c5;border-left:2px solid #8fb1e0"></div>
<div style="left:602px;top:369px;width:1px;height:43px;background:#1a1a1a;"></div>
<div class="clip" style="left:647px;top:369px;width:7px;height:43px;background:#6c93c5;border-left:2px solid #8fb1e0"></div>
<div style="left:646px;top:369px;width:1px;height:43px;background:#1a1a1a;"></div>
<div class="clip" style="left:654px;top:369px;width:19px;height:43px;background:#6c93c5;border-left:2px solid #8fb1e0"></div>
<div style="left:653px;top:369px;width:1px;height:43px;background:#1a1a1a;"></div>
<div class="clip" style="left:673px;top:369px;width:17px;height:43px;background:#6c93c5;border-left:2px solid #8fb1e0"></div>
<div style="left:672px;top:369px;width:1px;height:43px;background:#1a1a1a;"></div>
<div class="clip" style="left:690px;top:369px;width:70px;height:43px;background:#6c93c5;border-left:2px solid #8fb1e0"></div>
<div style="left:689px;top:369px;width:1px;height:43px;background:#1a1a1a;"></div>
<div class="clip" style="left:760px;top:369px;width:3px;height:43px;background:#6c93c5;border-left:2px solid #8fb1e0"></div>
<div style="left:759px;top:369px;width:1px;height:43px;background:#1a1a1a;"></div>
<div class="clip" style="left:763px;top:369px;width:4px;height:43px;background:#6c93c5;border-left:2px solid #8fb1e0"></div>
<div style="left:762px;top:369px;width:1px;height:43px;background:#1a1a1a;"></div>
<div class="clip" style="left:767px;top:369px;width:37px;height:43px;background:#6c93c5;border-left:2px solid #8fb1e0"></div>
<div style="left:766px;top:369px;width:1px;height:43px;background:#1a1a1a;"></div>
<div class="clip" style="left:804px;top:369px;width:85px;height:43px;background:#6c93c5;border-left:2px solid #8fb1e0"></div>
<div style="left:803px;top:369px;width:1px;height:43px;background:#1a1a1a;"></div>
<div class="clip" style="left:889px;top:369px;width:60px;height:43px;background:#6c93c5;border-left:2px solid #8fb1e0"></div>
<div style="left:888px;top:369px;width:1px;height:43px;background:#1a1a1a;"></div>
<div class="clip" style="left:949px;top:369px;width:5px;height:43px;background:#6c93c5;border-left:2px solid #8fb1e0"></div>
<div style="left:948px;top:369px;width:1px;height:43px;background:#1a1a1a;"></div>
<div class="clip" style="left:954px;top:369px;width:18px;height:43px;background:#6c93c5;border-left:2px solid #8fb1e0"></div>
<div style="left:953px;top:369px;width:1px;height:43px;background:#1a1a1a;"></div>
<div class="clip" style="left:972px;top:369px;width:16px;height:43px;background:#6c93c5;border-left:2px solid #8fb1e0"></div>
<div style="left:971px;top:369px;width:1px;height:43px;background:#1a1a1a;"></div>
<div class="clip" style="left:988px;top:369px;width:84px;height:43px;background:#6c93c5;border-left:2px solid #8fb1e0"></div>
<div style="left:987px;top:369px;width:1px;height:43px;background:#1a1a1a;"></div>
<div class="clip" style="left:1072px;top:369px;width:9px;height:43px;background:#6c93c5;border-left:2px solid #8fb1e0"></div>
<div style="left:1071px;top:369px;width:1px;height:43px;background:#1a1a1a;"></div>
<div class="clip" style="left:1081px;top:369px;width:16px;height:43px;background:#6c93c5;border-left:2px solid #8fb1e0"></div>
<div style="left:1080px;top:369px;width:1px;height:43px;background:#1a1a1a;"></div>
<div class="clip" style="left:1097px;top:369px;width:30px;height:43px;background:#6c93c5;border-left:2px solid #8fb1e0"></div>
<div style="left:1096px;top:369px;width:1px;height:43px;background:#1a1a1a;"></div>
<div class="clip" style="left:1127px;top:369px;width:16px;height:43px;background:#6c93c5;border-left:2px solid #8fb1e0"></div>
<div style="left:1126px;top:369px;width:1px;height:43px;background:#1a1a1a;"></div>
<div class="clip" style="left:1143px;top:369px;width:13px;height:43px;background:#6c93c5;border-left:2px solid #8fb1e0"></div>
<div style="left:1142px;top:369px;width:1px;height:43px;background:#1a1a1a;"></div>
<div class="clip" style="left:1156px;top:369px;width:70px;height:43px;background:#6c93c5;border-left:2px solid #8fb1e0"></div>
<div style="left:1155px;top:369px;width:1px;height:43px;background:#1a1a1a;"></div>
<div class="clip" style="left:1226px;top:369px;width:49px;height:43px;background:#6c93c5;border-left:2px solid #8fb1e0"></div>
<div style="left:1225px;top:369px;width:1px;height:43px;background:#1a1a1a;"></div>
<div class="clip" style="left:1275px;top:369px;width:76px;height:43px;background:#6c93c5;border-left:2px solid #8fb1e0"></div>
<div style="left:1274px;top:369px;width:1px;height:43px;background:#1a1a1a;"></div>
<div class="fx fg" style="left:68px;top:373px"><svg width="16" height="15" style="left:-1.5px;top:-1.5px"><path d="M3.3 12.8L6.6 4.2Q7.1 2.9 9 2.9M4.8 6H8.3M8 5.9L11.8 12.4M12.6 5.7L7.5 12.7" stroke="#111" stroke-width="1.1" fill="none"/></svg></div>
<div class="fx fg" style="left:263px;top:373px"><svg width="16" height="15" style="left:-1.5px;top:-1.5px"><path d="M3.3 12.8L6.6 4.2Q7.1 2.9 9 2.9M4.8 6H8.3M8 5.9L11.8 12.4M12.6 5.7L7.5 12.7" stroke="#111" stroke-width="1.1" fill="none"/></svg></div>
<div class="fx fg" style="left:377px;top:373px"><svg width="16" height="15" style="left:-1.5px;top:-1.5px"><path d="M3.3 12.8L6.6 4.2Q7.1 2.9 9 2.9M4.8 6H8.3M8 5.9L11.8 12.4M12.6 5.7L7.5 12.7" stroke="#111" stroke-width="1.1" fill="none"/></svg></div>
<div class="fx fg" style="left:481px;top:373px"><svg width="16" height="15" style="left:-1.5px;top:-1.5px"><path d="M3.3 12.8L6.6 4.2Q7.1 2.9 9 2.9M4.8 6H8.3M8 5.9L11.8 12.4M12.6 5.7L7.5 12.7" stroke="#111" stroke-width="1.1" fill="none"/></svg></div>
<div class="fx fg" style="left:617px;top:373px"><svg width="16" height="15" style="left:-1.5px;top:-1.5px"><path d="M3.3 12.8L6.6 4.2Q7.1 2.9 9 2.9M4.8 6H8.3M8 5.9L11.8 12.4M12.6 5.7L7.5 12.7" stroke="#111" stroke-width="1.1" fill="none"/></svg></div>
<div class="fx fg" style="left:704px;top:373px"><svg width="16" height="15" style="left:-1.5px;top:-1.5px"><path d="M3.3 12.8L6.6 4.2Q7.1 2.9 9 2.9M4.8 6H8.3M8 5.9L11.8 12.4M12.6 5.7L7.5 12.7" stroke="#111" stroke-width="1.1" fill="none"/></svg></div>
<div class="fx fg" style="left:818px;top:373px"><svg width="16" height="15" style="left:-1.5px;top:-1.5px"><path d="M3.3 12.8L6.6 4.2Q7.1 2.9 9 2.9M4.8 6H8.3M8 5.9L11.8 12.4M12.6 5.7L7.5 12.7" stroke="#111" stroke-width="1.1" fill="none"/></svg></div>
<div class="fx fg" style="left:903px;top:373px"><svg width="16" height="15" style="left:-1.5px;top:-1.5px"><path d="M3.3 12.8L6.6 4.2Q7.1 2.9 9 2.9M4.8 6H8.3M8 5.9L11.8 12.4M12.6 5.7L7.5 12.7" stroke="#111" stroke-width="1.1" fill="none"/></svg></div>
<div class="fx fg" style="left:1002px;top:373px"><svg width="16" height="15" style="left:-1.5px;top:-1.5px"><path d="M3.3 12.8L6.6 4.2Q7.1 2.9 9 2.9M4.8 6H8.3M8 5.9L11.8 12.4M12.6 5.7L7.5 12.7" stroke="#111" stroke-width="1.1" fill="none"/></svg></div>
<div class="fx fg" style="left:1170px;top:373px"><svg width="16" height="15" style="left:-1.5px;top:-1.5px"><path d="M3.3 12.8L6.6 4.2Q7.1 2.9 9 2.9M4.8 6H8.3M8 5.9L11.8 12.4M12.6 5.7L7.5 12.7" stroke="#111" stroke-width="1.1" fill="none"/></svg></div>
<div class="fx fg" style="left:1240px;top:373px"><svg width="16" height="15" style="left:-1.5px;top:-1.5px"><path d="M3.3 12.8L6.6 4.2Q7.1 2.9 9 2.9M4.8 6H8.3M8 5.9L11.8 12.4M12.6 5.7L7.5 12.7" stroke="#111" stroke-width="1.1" fill="none"/></svg></div>
<div class="fx fg" style="left:1289px;top:373px"><svg width="16" height="15" style="left:-1.5px;top:-1.5px"><path d="M3.3 12.8L6.6 4.2Q7.1 2.9 9 2.9M4.8 6H8.3M8 5.9L11.8 12.4M12.6 5.7L7.5 12.7" stroke="#111" stroke-width="1.1" fill="none"/></svg></div>
<div class="lbl" style="left:289px;top:372px;letter-spacing:-0.45px">A-CA</div>
<div class="lbl" style="left:403px;top:372px;letter-spacing:-0.45px">A-CA</div>
<div class="lbl" style="left:507px;top:372px;letter-spacing:-0.45px">A-CAM</div>
<div class="lbl" style="left:730px;top:372px;letter-spacing:-0.45px">A-CA</div>
<div class="lbl" style="left:844px;top:372px;letter-spacing:-0.45px">A-CAM</div>
<div class="lbl" style="left:1028px;top:372px;letter-spacing:-0.45px">A-CAM</div>
<div class="lbl" style="left:1196px;top:372px;letter-spacing:-0.45px">A-C</div>
<div class="lbl" style="left:1315px;top:372px;letter-spacing:-0.45px">A-CA</div>
<div class="clip" style="left:18px;top:413px;width:18px;height:43px;background:#d980d8;border-left:2px solid #eb9cea"></div>
<div style="left:17px;top:413px;width:1px;height:43px;background:#1a1a1a;"></div>
<div class="clip" style="left:36px;top:413px;width:18px;height:43px;background:#d980d8;border-left:2px solid #eb9cea"></div>
<div style="left:35px;top:413px;width:1px;height:43px;background:#1a1a1a;"></div>
<div class="clip" style="left:54px;top:413px;width:59px;height:43px;background:#d980d8;border-left:2px solid #eb9cea"></div>
<div style="left:53px;top:413px;width:1px;height:43px;background:#1a1a1a;"></div>
<div class="clip" style="left:113px;top:413px;width:7px;height:43px;background:#d980d8;border-left:2px solid #eb9cea"></div>
<div style="left:112px;top:413px;width:1px;height:43px;background:#1a1a1a;"></div>
<div class="clip" style="left:120px;top:413px;width:11px;height:43px;background:#d980d8;border-left:2px solid #eb9cea"></div>
<div style="left:119px;top:413px;width:1px;height:43px;background:#1a1a1a;"></div>
<div class="clip" style="left:131px;top:413px;width:17px;height:43px;background:#d980d8;border-left:2px solid #eb9cea"></div>
<div style="left:130px;top:413px;width:1px;height:43px;background:#1a1a1a;"></div>
<div class="clip" style="left:148px;top:413px;width:28px;height:43px;background:#d980d8;border-left:2px solid #eb9cea"></div>
<div style="left:147px;top:413px;width:1px;height:43px;background:#1a1a1a;"></div>
<div class="clip" style="left:176px;top:413px;width:8px;height:43px;background:#d980d8;border-left:2px solid #eb9cea"></div>
<div style="left:175px;top:413px;width:1px;height:43px;background:#1a1a1a;"></div>
<div class="clip" style="left:184px;top:413px;width:25px;height:43px;background:#d980d8;border-left:2px solid #eb9cea"></div>
<div style="left:183px;top:413px;width:1px;height:43px;background:#1a1a1a;"></div>
<div class="clip" style="left:209px;top:413px;width:6px;height:43px;background:#d980d8;border-left:2px solid #eb9cea"></div>
<div style="left:208px;top:413px;width:1px;height:43px;background:#1a1a1a;"></div>
<div class="clip" style="left:215px;top:413px;width:23px;height:43px;background:#d980d8;border-left:2px solid #eb9cea"></div>
<div style="left:214px;top:413px;width:1px;height:43px;background:#1a1a1a;"></div>
<div class="clip" style="left:238px;top:413px;width:11px;height:43px;background:#d980d8;border-left:2px solid #eb9cea"></div>
<div style="left:237px;top:413px;width:1px;height:43px;background:#1a1a1a;"></div>
<div class="clip" style="left:249px;top:413px;width:72px;height:43px;background:#d980d8;border-left:2px solid #eb9cea"></div>
<div style="left:248px;top:413px;width:1px;height:43px;background:#1a1a1a;"></div>
<div class="clip" style="left:321px;top:413px;width:9px;height:43px;background:#d980d8;border-left:2px solid #eb9cea"></div>
<div style="left:320px;top:413px;width:1px;height:43px;background:#1a1a1a;"></div>
<div class="clip" style="left:330px;top:413px;width:33px;height:43px;background:#d980d8;border-left:2px solid #eb9cea"></div>
<div style="left:329px;top:413px;width:1px;height:43px;background:#1a1a1a;"></div>
<div class="clip" style="left:363px;top:413px;width:77px;height:43px;background:#d980d8;border-left:2px solid #eb9cea"></div>
<div style="left:362px;top:413px;width:1px;height:43px;background:#1a1a1a;"></div>
<div class="clip" style="left:440px;top:413px;width:3px;height:43px;background:#d980d8;border-left:2px solid #eb9cea"></div>
<div style="left:439px;top:413px;width:1px;height:43px;background:#1a1a1a;"></div>
<div class="clip" style="left:443px;top:413px;width:24px;height:43px;background:#d980d8;border-left:2px solid #eb9cea"></div>
<div style="left:442px;top:413px;width:1px;height:43px;background:#1a1a1a;"></div>
<div class="clip" style="left:467px;top:413px;width:86px;height:43px;background:#d980d8;border-left:2px solid #eb9cea"></div>
<div style="left:466px;top:413px;width:1px;height:43px;background:#1a1a1a;"></div>
<div class="clip" style="left:553px;top:413px;width:28px;height:43px;background:#d980d8;border-left:2px solid #eb9cea"></div>
<div style="left:552px;top:413px;width:1px;height:43px;background:#1a1a1a;"></div>
<div class="clip" style="left:581px;top:413px;width:10px;height:43px;background:#d980d8;border-left:2px solid #eb9cea"></div>
<div style="left:580px;top:413px;width:1px;height:43px;background:#1a1a1a;"></div>
<div class="clip" style="left:591px;top:413px;width:12px;height:43px;background:#d980d8;border-left:2px solid #eb9cea"></div>
<div style="left:590px;top:413px;width:1px;height:43px;background:#1a1a1a;"></div>
<div class="clip" style="left:603px;top:413px;width:44px;height:43px;background:#d980d8;border-left:2px solid #eb9cea"></div>
<div style="left:602px;top:413px;width:1px;height:43px;background:#1a1a1a;"></div>
<div class="clip" style="left:647px;top:413px;width:7px;height:43px;background:#d980d8;border-left:2px solid #eb9cea"></div>
<div style="left:646px;top:413px;width:1px;height:43px;background:#1a1a1a;"></div>
<div class="clip" style="left:654px;top:413px;width:19px;height:43px;background:#d980d8;border-left:2px solid #eb9cea"></div>
<div style="left:653px;top:413px;width:1px;height:43px;background:#1a1a1a;"></div>
<div class="clip" style="left:673px;top:413px;width:17px;height:43px;background:#d980d8;border-left:2px solid #eb9cea"></div>
<div style="left:672px;top:413px;width:1px;height:43px;background:#1a1a1a;"></div>
<div class="clip" style="left:690px;top:413px;width:70px;height:43px;background:#d980d8;border-left:2px solid #eb9cea"></div>
<div style="left:689px;top:413px;width:1px;height:43px;background:#1a1a1a;"></div>
<div class="clip" style="left:760px;top:413px;width:3px;height:43px;background:#d980d8;border-left:2px solid #eb9cea"></div>
<div style="left:759px;top:413px;width:1px;height:43px;background:#1a1a1a;"></div>
<div class="clip" style="left:763px;top:413px;width:4px;height:43px;background:#d980d8;border-left:2px solid #eb9cea"></div>
<div style="left:762px;top:413px;width:1px;height:43px;background:#1a1a1a;"></div>
<div class="clip" style="left:767px;top:413px;width:37px;height:43px;background:#d980d8;border-left:2px solid #eb9cea"></div>
<div style="left:766px;top:413px;width:1px;height:43px;background:#1a1a1a;"></div>
<div class="clip" style="left:804px;top:413px;width:85px;height:43px;background:#d980d8;border-left:2px solid #eb9cea"></div>
<div style="left:803px;top:413px;width:1px;height:43px;background:#1a1a1a;"></div>
<div class="clip" style="left:889px;top:413px;width:60px;height:43px;background:#d980d8;border-left:2px solid #eb9cea"></div>
<div style="left:888px;top:413px;width:1px;height:43px;background:#1a1a1a;"></div>
<div class="clip" style="left:949px;top:413px;width:5px;height:43px;background:#d980d8;border-left:2px solid #eb9cea"></div>
<div style="left:948px;top:413px;width:1px;height:43px;background:#1a1a1a;"></div>
<div class="clip" style="left:954px;top:413px;width:18px;height:43px;background:#d980d8;border-left:2px solid #eb9cea"></div>
<div style="left:953px;top:413px;width:1px;height:43px;background:#1a1a1a;"></div>
<div class="clip" style="left:972px;top:413px;width:16px;height:43px;background:#d980d8;border-left:2px solid #eb9cea"></div>
<div style="left:971px;top:413px;width:1px;height:43px;background:#1a1a1a;"></div>
<div class="clip" style="left:988px;top:413px;width:84px;height:43px;background:#d980d8;border-left:2px solid #eb9cea"></div>
<div style="left:987px;top:413px;width:1px;height:43px;background:#1a1a1a;"></div>
<div class="clip" style="left:1072px;top:413px;width:9px;height:43px;background:#d980d8;border-left:2px solid #eb9cea"></div>
<div style="left:1071px;top:413px;width:1px;height:43px;background:#1a1a1a;"></div>
<div class="clip" style="left:1081px;top:413px;width:16px;height:43px;background:#d980d8;border-left:2px solid #eb9cea"></div>
<div style="left:1080px;top:413px;width:1px;height:43px;background:#1a1a1a;"></div>
<div class="clip" style="left:1097px;top:413px;width:30px;height:43px;background:#d980d8;border-left:2px solid #eb9cea"></div>
<div style="left:1096px;top:413px;width:1px;height:43px;background:#1a1a1a;"></div>
<div class="clip" style="left:1127px;top:413px;width:16px;height:43px;background:#d980d8;border-left:2px solid #eb9cea"></div>
<div style="left:1126px;top:413px;width:1px;height:43px;background:#1a1a1a;"></div>
<div class="clip" style="left:1143px;top:413px;width:13px;height:43px;background:#d980d8;border-left:2px solid #eb9cea"></div>
<div style="left:1142px;top:413px;width:1px;height:43px;background:#1a1a1a;"></div>
<div class="clip" style="left:1156px;top:413px;width:70px;height:43px;background:#d980d8;border-left:2px solid #eb9cea"></div>
<div style="left:1155px;top:413px;width:1px;height:43px;background:#1a1a1a;"></div>
<div class="clip" style="left:1226px;top:413px;width:49px;height:43px;background:#d980d8;border-left:2px solid #eb9cea"></div>
<div style="left:1225px;top:413px;width:1px;height:43px;background:#1a1a1a;"></div>
<div class="clip" style="left:1275px;top:413px;width:76px;height:43px;background:#d980d8;border-left:2px solid #eb9cea"></div>
<div style="left:1274px;top:413px;width:1px;height:43px;background:#1a1a1a;"></div>
<div class="fx fg" style="left:68px;top:417px"><svg width="16" height="15" style="left:-1.5px;top:-1.5px"><path d="M3.3 12.8L6.6 4.2Q7.1 2.9 9 2.9M4.8 6H8.3M8 5.9L11.8 12.4M12.6 5.7L7.5 12.7" stroke="#111" stroke-width="1.1" fill="none"/></svg></div>
<div class="fx fg" style="left:263px;top:417px"><svg width="16" height="15" style="left:-1.5px;top:-1.5px"><path d="M3.3 12.8L6.6 4.2Q7.1 2.9 9 2.9M4.8 6H8.3M8 5.9L11.8 12.4M12.6 5.7L7.5 12.7" stroke="#111" stroke-width="1.1" fill="none"/></svg></div>
<div class="fx fg" style="left:377px;top:417px"><svg width="16" height="15" style="left:-1.5px;top:-1.5px"><path d="M3.3 12.8L6.6 4.2Q7.1 2.9 9 2.9M4.8 6H8.3M8 5.9L11.8 12.4M12.6 5.7L7.5 12.7" stroke="#111" stroke-width="1.1" fill="none"/></svg></div>
<div class="fx fg" style="left:481px;top:417px"><svg width="16" height="15" style="left:-1.5px;top:-1.5px"><path d="M3.3 12.8L6.6 4.2Q7.1 2.9 9 2.9M4.8 6H8.3M8 5.9L11.8 12.4M12.6 5.7L7.5 12.7" stroke="#111" stroke-width="1.1" fill="none"/></svg></div>
<div class="fx fg" style="left:617px;top:417px"><svg width="16" height="15" style="left:-1.5px;top:-1.5px"><path d="M3.3 12.8L6.6 4.2Q7.1 2.9 9 2.9M4.8 6H8.3M8 5.9L11.8 12.4M12.6 5.7L7.5 12.7" stroke="#111" stroke-width="1.1" fill="none"/></svg></div>
<div class="fx fg" style="left:704px;top:417px"><svg width="16" height="15" style="left:-1.5px;top:-1.5px"><path d="M3.3 12.8L6.6 4.2Q7.1 2.9 9 2.9M4.8 6H8.3M8 5.9L11.8 12.4M12.6 5.7L7.5 12.7" stroke="#111" stroke-width="1.1" fill="none"/></svg></div>
<div class="fx fg" style="left:818px;top:417px"><svg width="16" height="15" style="left:-1.5px;top:-1.5px"><path d="M3.3 12.8L6.6 4.2Q7.1 2.9 9 2.9M4.8 6H8.3M8 5.9L11.8 12.4M12.6 5.7L7.5 12.7" stroke="#111" stroke-width="1.1" fill="none"/></svg></div>
<div class="fx fg" style="left:903px;top:417px"><svg width="16" height="15" style="left:-1.5px;top:-1.5px"><path d="M3.3 12.8L6.6 4.2Q7.1 2.9 9 2.9M4.8 6H8.3M8 5.9L11.8 12.4M12.6 5.7L7.5 12.7" stroke="#111" stroke-width="1.1" fill="none"/></svg></div>
<div class="fx fg" style="left:1002px;top:417px"><svg width="16" height="15" style="left:-1.5px;top:-1.5px"><path d="M3.3 12.8L6.6 4.2Q7.1 2.9 9 2.9M4.8 6H8.3M8 5.9L11.8 12.4M12.6 5.7L7.5 12.7" stroke="#111" stroke-width="1.1" fill="none"/></svg></div>
<div class="fx fg" style="left:1170px;top:417px"><svg width="16" height="15" style="left:-1.5px;top:-1.5px"><path d="M3.3 12.8L6.6 4.2Q7.1 2.9 9 2.9M4.8 6H8.3M8 5.9L11.8 12.4M12.6 5.7L7.5 12.7" stroke="#111" stroke-width="1.1" fill="none"/></svg></div>
<div class="fx fg" style="left:1240px;top:417px"><svg width="16" height="15" style="left:-1.5px;top:-1.5px"><path d="M3.3 12.8L6.6 4.2Q7.1 2.9 9 2.9M4.8 6H8.3M8 5.9L11.8 12.4M12.6 5.7L7.5 12.7" stroke="#111" stroke-width="1.1" fill="none"/></svg></div>
<div class="fx fg" style="left:1289px;top:417px"><svg width="16" height="15" style="left:-1.5px;top:-1.5px"><path d="M3.3 12.8L6.6 4.2Q7.1 2.9 9 2.9M4.8 6H8.3M8 5.9L11.8 12.4M12.6 5.7L7.5 12.7" stroke="#111" stroke-width="1.1" fill="none"/></svg></div>
<div class="lbl" style="left:289px;top:416px">3698</div>
<div class="lbl" style="left:403px;top:416px">36986</div>
<div class="lbl" style="left:507px;top:416px">369868</div>
<div class="lbl" style="left:730px;top:416px">3698</div>
<div class="lbl" style="left:844px;top:416px">369868</div>
<div class="lbl" style="left:1028px;top:416px">369868</div>
<div class="lbl" style="left:1196px;top:416px">369</div>
<div class="lbl" style="left:1315px;top:416px">3698</div>
<div style="left:14px;top:191px;width:3px;height:265px;background:#1a1a1a;"></div>
<div style="left:14px;top:456px;width:1337px;height:7px;background:#262626;"></div>
<div style="left:14px;top:460px;width:1337px;height:3px;background:#222;"></div>
<div style="left:18px;top:463px;width:1333px;height:21px;background:#3c5372;"></div>
<div style="left:18px;top:484px;width:1333px;height:21px;background:#3c5372;"></div>
<div style="left:18px;top:484px;width:1333px;height:1px;background:#34475e;"></div>
<div style="left:18px;top:505px;width:1333px;height:20px;background:#3c5372;"></div>
<div style="left:18px;top:505px;width:1333px;height:1px;background:#34475e;"></div>
<div style="left:18px;top:525px;width:1333px;height:21px;background:#3c5372;"></div>
<div style="left:18px;top:525px;width:1333px;height:1px;background:#34475e;"></div>
<div style="left:18px;top:546px;width:1333px;height:21px;background:#3c5372;"></div>
<div style="left:18px;top:546px;width:1333px;height:1px;background:#34475e;"></div>
<div style="left:18px;top:567px;width:1333px;height:20px;background:#3c5372;"></div>
<div style="left:18px;top:567px;width:1333px;height:1px;background:#34475e;"></div>
<div style="left:18px;top:587px;width:1333px;height:21px;background:#3c5372;"></div>
<div style="left:18px;top:587px;width:1333px;height:1px;background:#34475e;"></div>
<div style="left:18px;top:608px;width:1333px;height:21px;background:#3c5372;"></div>
<div style="left:18px;top:608px;width:1333px;height:1px;background:#34475e;"></div>
<div style="left:18px;top:629px;width:1333px;height:20px;background:#3c5372;"></div>
<div style="left:18px;top:629px;width:1333px;height:1px;background:#34475e;"></div>
<div style="left:18px;top:649px;width:1333px;height:21px;background:#3c5372;"></div>
<div style="left:18px;top:649px;width:1333px;height:1px;background:#34475e;"></div>
<svg class="abs" style="left:0;top:0" width="1360" height="720"><g fill="#78a0d3"><path d="M18 483v-9h1v2h2v4h1v-4h1v-1h2v1h1v-2h1v1h1v-1h1v6h1v-5h2v-1h1v-1h1v-1h1v2h1v2h1v-1h1v-2h1v1h1v-1h1v3h1v-5h1v1h1v2h1v4h1v-2h1v-4h1v2h2v-1h1v2h2v4h1v-4h2v2h1v-4h1v2h1v5h1v-5h1v5h1v-4h1v-1h1v1h1v-1h1v1h3v-2h1v4h1v-6h1v1h1v-2h1v1h1v-1h1v1h1v1h1v1h1v-1h1v-2h1v2h2v-1h1v1h1v-2h1v1h1v-1h1v1h3v-1h1v1h1v-1h1v1h1v-1h1v1h2v2h1v-2h3v5h1v-1h1v-3h2v1h2v-2h4v-1h1v1h1v-1h1v-1h1v5h1v-2h1v1h1v1h1v1h1v-1h1v1h2v2h1v1h1v-3h1v-3h1v2h1v-1h1v-1h1v1h1v1h1v1h1v-1h1v-5h1v6h1v-1h1v-2h1v1h1v2h4v-1h1v1h1v-2h1v-1h2v-2h1v2h1v4h1v-2h1v-3h1v2h2v-1h2v2h2v1h1v-3h1v7h1v-4h1v-1h1v-1h1v-2h1v3h1v-4h1v-3h1v3h2v1h1v-2h1v4h2v3h1v-4h1v3h1v3h1v-7h2v-1h1v2h1v-1h1v2h4v2h1v-1h1v-2h1v1h1v-1h2v2h1v-1h3v1h1v1h1v-1h1v-3h1v2h1v-1h2v1h1v-1h2v-2h2v2h1v-2h1v2h1v-4h1v3h1v-1h1v2h1v1h1v-1h1v-1h1v2h1v-3h1v2h3v1h1v1h3v-2h1v5h1v-4h1v1h1v-1h2v1h1v-1h1v1h1v-2h1v1h2v5h1v-3h1v3h1v-4h1v-1h2v5h1v-4h2v1h1v-2h1v1h1v-3h1v1h1v1h1v1h2v-1h1v6h1v-5h1v-1h1v1h1v3h1v-3h1v5h1v-4h1v-1h1v-1h1v1h1v-1h1v4h1v-5h1v3h1v-3h2v1h1v1h1v-2h1v5h1v-6h1v1h2v-2h1v1h2v1h1v7h1v-7h2v-2h1v3h1v-1h2v2h1v-1h1v1h1v1h1v-1h2v1h1v-1h1v4h1v-5h1v1h1v-1h2v-1h1v1h2v5h1v-4h2v-2h1v3h2v-1h1v1h1v-1h2v3h1v-2h1v-1h2v-4h1v4h4v-2h1v2h1v-2h1v2h1v-1h1v1h1v1h1v-1h2v1h1v-1h1v1h2v3h1v-4h2v-1h1v-2h1v6h1v-3h1v4h1v-3h1v-2h1v-1h2v1h1v1h1v1h1v-1h1v-1h3v1h1v-5h1v2h2v1h1v1h1v-1h2v2h1v-4h1v2h1v6h1v-6h1v-3h1v9h1v-10h1v4h1v1h1v1h1v-3h1v3h1v3h1v-3h2v1h7v-2h1v1h1v1h1v-2h1v1h2v1h1v-1h2v4h1v-6h4v-2h1v1h2v1h3v7h1v-7h1v4h1v-5h1v3h1v-2h1v-2h2v1h1v-4h1v6h1v1h2v-3h1v6h1v-5h2v-5h1v11h1v-6h1v-2h1v2h1v-2h1v1h1v-3h1v4h2v-1h1v3h3v1h1v-1h1v1h1v-2h1v1h1v-3h1v3h1v-1h1v2h2v-1h1v-5h1v5h2v1h2v-1h1v1h2v-1h3v-1h2v1h5v-1h1v1h1v-2h2v-1h2v-1h1v2h1v-5h1v10h2v-5h3v-1h3v1h1v-1h1v1h1v1h1v-1h1v1h1v1h1v1h1v-1h3v-1h1v6h1v-6h1v1h1v-1h1v-1h1v-2h3v1h2v-3h1v5h2v2h1v-3h1v-1h1v4h2v-4h2v4h1v-5h1v1h2v-1h1v2h2v-2h1v2h1v-2h1v2h1v5h1v-4h2v-1h2v-1h1v1h1v3h1v-4h2v1h2v3h1v-8h1v5h1v1h1v-1h1v-4h1v6h1v1h1v-7h1v9h1v-2h1v-1h2v-1h1v-2h1v7h1v-6h3v-1h1v-1h1v1h3v3h1v-3h1v-1h1v1h1v-1h2v7h1v-6h1v3h1v-3h4v1h1v1h1v1h1v-1h1v1h6v2h1v-5h1v3h1v1h1v-1h1v1h1v-2h1v-1h1v7h1v-5h1v1h1v-1h2v-2h1v-1h1v1h1v-1h1v1h1v-2h1v2h1v1h1v-1h2v-3h2v5h1v2h2v-2h1v-4h1v4h2v-1h1v2h1v-1h1v-1h2v1h1v1h1v1h1v-3h1v1h1v-1h1v-3h1v5h1v-2h1v-1h2v1h1v2h1v-1h1v5h1v-4h1v-1h2v1h1v2h1v-3h1v3h1v-2h4v-4h1v3h1v-1h1v1h2v2h1v-1h5v-1h1v1h1v-3h1v2h7v-1h1v4h1v-5h2v4h1v2h1v-8h2v5h1v-3h1v-1h1v1h1v-1h1v-4h1v4h1v1h1v-2h1v3h3v1h2v1h1v-1h2v1h3v-1h1v-1h1v1h3v-1h1v-1h2v-5h1v5h1v1h1v-1h1v1h4v1h2v-5h1v5h1v-1h1v5h1v-7h1v-1h2v1h2v-2h1v3h1v-1h1v-1h1v1h2v1h1v-2h1v1h1v1h4v-1h1v6h1v-7h1v2h2v-1h3v2h1v6h1v-8h1v1h1v1h1v1h2v-1h1v3h1v-4h2v-2h1v1h1v1h1v1h1v1h1v-2h1v1h1v6h1v-6h1v1h1v1h3v-1h2v1h1v-1h1v-5h1v5h2v1h2v-1h3v1h1v-1h1v5h1v-8h1v3h1v-1h1v2h1v-1h2v1h2v-2h1v6h1v-4h1v-1h1v1h1v-1h2v-1h1v1h1v1h1v-2h1v-4h1v4h1v-4h1v5h1v-1h1v4h1v-4h1v2h1v-1h2v1h2v-4h1v4h1v-2h1v1h1v1h1v-2h1v2h1v-1h1v1h1v4h1v-4h3v-1h2v-2h1v3h1v-1h2v1h1v-1h3v-2h1v1h1v1h1v1h1v-1h1v-1h1v-1h1v1h1v2h3v1h1v-3h1v1h2v-1h1v1h1v1h2v-2h1v-1h1v3h1v-4h1v-1h1v1h1v1h1v-3h1v4h2v1h1v-5h1v3h1v3h3v3h1v-5h1v-6h1v1h1v4h1v1h1v4h1v-1h1v-4h1v1h1v-2h1v-1h1v1h1v-3h1v2h1v3h2v-2h2v-1h1v3h1v-1h3v5h1v-5h1v6h1v-7h1v-1h1v1h1v2h1v-1h3v2h3v1h2v-1h1v-1h1v-1h2v-1h1v1h1v1h2v-1h1v1h1v1h1v1h2v4h1v-4h1v-2h1v-1h1v1h1v-2h1v2h1v2h1v-1h1v1h1v-1h2v3h1v-3h4v1h2v-1h2v1h1v2h1v-4h2v2h1v-1h2v-1h2v-1h2v5h1v-4h1v-2h1v7h1v-4h1v1h1v-1h2v-2h1v1h1v-1h1v-5h1v5h1v4h1v-6h1v1h1v1h2v1h1v-1h1v-1h2v1h1v-1h2v-1h2v2h1v1h1v-3h1v2h3v1h1v4h1v-2h2v-4h1v4h1v-1h1v-2h1v2h2v1h1v4h1v-4h1v2h1v-3h1v-1h3v1h1v2h1v-5h1v1h2v3h1v-3h1v1h1v-1h2v-1h4v-1h1v1h1v1h1v-1h2v1h1v-2h1v6h1v-4h1v1h1v-1h1v-2h1v1h1v-1h1v2h2v1h1v1h5v1h1v-1h4v-2h1v1h1v-2h1v-1h1v2h1v1h2v-1h2v1h2v3h1v-6h1v7h1v-2h1v-2h1v-2h1v2h1v2h2v-1h1v4h1v-6h1v2h1v-1h1v1h1v-2h1v6h1v-6h2v1h1v-1h1v2h2v2h1v-3h1v-1h1v1h1v-3h2v1h1v-1h1v2h1v2h1v-3h1v2h1v-3h1v1h1v6h1v-5h2v2h1v-7h1v4h2v1h1v-1h1v-1h1v1h1v3h1v-1h1v-1h2v-2h1v6h1v-4h1v1h1v-5h1v6h2v1h1v-1h1v-4h1v5h4v-1h1v1h1v-2h1v1h1v-1h1v1h1v1h1v-1h2v-1h1v1h1v-1h1v2h1v-2h2v1h1v1h1v-1h2v-1h1v-1h1v1h1v-1h1v-2h1v1h1v-1h1v1h1v-1h1v1h1v-4h1v3h1v2h1v-1h1v1h1v-1h3v1h1v4h1v-8h1v5h1v1h1v-1h3v2h1v-1h1v-1h1v-2h2v1h1v-1h2v2h1v-4h1v3h1v-2h1v2h1v-2h1v1h2v1h1v-1h1v-1h1v2h1v-5h1v4h1v5h1v-5h4v-1h1v1h3v2h1v5h1v-5h1v1h1v1h4v-2h1v1h3v-1h1v-1h1v1h1v1h1v4h1v-4h1v-3h1v1h2v-1h2v1h1v-1h1v3h1v-1h2v-1h2v-1h1v-1h2v1h1v1h2v1h1v-2h1v2h1v-1h1v-4h1v4h1v2h1v-2h1v1h1v1h1v-2h1v3h2v-2h1v1h3v3h1v-4h2v1h3v1h1v-1h1v-2h1v6h1v-5h3v6h1v-5h1v-1h1v2h1v-2h1v1h2v1h1v-2h1v-1h2v6h1v-4h1v-2h1v2h2v-1h1v1h1v-3h1v4h1v-1h1v3h1v-2h2v-1h1v1h1v-1h2v-1h1v-4h1v10h1v-4h1v-1h1v-1h1v2h1v-2h1v-1h2v3h1v-3h1v-1h1v6h1v-3h1v1h1v-3h1v-1h1v1h1v-3h1v4h1v-1h2v7h1v-6h1v1h1v-2h3v-1h1v-1h1v1h1v1h3v-1h1v1h1v1h1v-1h1v-1h1v-4h1v5h2v-1h1v-1h1v2h1v-1h1v2h1V483z"/><rect x="18" y="482" width="1333" height="1.6"/><path d="M18 504v-5h1v-1h2v1h4v3h1v-4h1v1h4v-1h1v1h1v-1h1v4h1v-4h1v1h1v-3h1v3h1v3h1v-6h1v3h2v-2h1v1h2v1h1v-1h1v1h1v3h1v-2h1v-2h1v2h1v2h1v-2h3v-3h1v3h1v-1h2v2h1v-2h1v-3h1v4h2v-1h3v-1h1v1h2v1h2v-1h1v1h1v-1h3v-2h2v1h1v3h1v-2h1v-1h1v1h1v-3h1v1h1v3h1v-1h3v1h3v-1h5v2h1v-2h1v1h2v-1h1v1h1v-1h1v-1h1v1h1v-1h3v-1h1v2h4v1h3v-1h1v1h1v-1h1v-1h3v4h1v-2h2v2h1v-3h4v1h5v-1h1v-2h1v2h1v1h1v-1h1v1h1v-1h2v1h5v-1h2v2h2v-1h3v-1h1v3h1v-2h3v-1h1v-1h1v2h1v-1h3v-1h1v2h2v2h1v-2h2v-1h1v-1h1v1h3v-1h1v-2h1v3h2v-1h3v2h1v-3h1v1h1v1h5v-1h2v1h1v-1h2v-2h1v2h1v1h1v-1h1v1h2v1h1v2h1v-3h4v1h4v-1h1v-2h1v3h2v-1h1v1h1v-1h3v-1h1v1h1v-1h2v1h1v-1h1v1h1v-2h2v1h3v1h4v-1h3v1h1v-2h1v1h1v-1h1v2h3v-1h1v2h1v-1h2v1h1v1h1v-2h3v2h1v-2h4v-1h1v1h1v-1h1v-2h1v5h1v-3h8v1h3v-1h1v1h1v-1h3v1h5v-1h3v1h1v2h2v-3h5v1h1v2h1v-2h2v-1h1v1h1v-1h6v1h2v-3h1v3h1v-1h2v1h1v1h1v-1h2v-1h1v-1h1v-1h1v3h1v-1h1v1h2v-3h1v5h1v-3h1v1h1v1h3v-1h1v1h1v-1h2v1h2v-1h4v1h2v-2h3v4h1v-3h5v-1h1v3h1v-1h1v-1h1v-1h1v4h1v-4h1v3h1v-3h1v1h1v-3h1v3h2v1h1v-4h1v2h1v-1h1v1h2v1h1v1h1v-1h2v1h2v-1h1v-1h1v2h8v-1h1v3h1v-2h1v1h1v-4h1v2h2v1h9v-1h2v-2h1v1h1v1h1v1h2v-1h1v1h1v-2h1v2h1v-1h1v1h1v-1h3v-2h1v1h4v1h1v-1h3v1h1v-1h6v3h1v-2h2v1h1v-1h2v-1h2v1h2v-1h4v1h3v-1h1v1h2v-1h1v1h2v-1h1v1h1v-3h1v3h2v-1h1v-1h1v2h1v-1h2v1h2v1h1v-2h1v2h1v-1h1v1h3v-1h1v1h8v2h1v-3h3v1h9v-2h1v2h1v-1h1v1h3v-1h1v3h2v-2h3v-1h4v-1h2v1h1v1h7v-1h4v1h1v1h1v-1h2v-1h3v-1h1v2h1v-1h1v1h3v-1h1v-1h1v1h1v-1h2v1h2v1h2v-2h1v2h3v-2h1v2h7v-1h2v2h1v-2h1v-1h1v-1h1v1h2v1h2v-1h2v2h2v-1h2v-1h1v1h1v-1h3v1h7v-2h1v4h1v-2h2v1h4v-1h1v-1h2v1h3v1h1v-2h1v2h2v-1h1v-1h3v1h1v1h2v-3h1v2h5v-1h3v-1h1v1h4v1h1v1h1v-1h2v1h3v3h1v-3h9v-1h2v1h1v-1h5v-1h1v2h9v-1h2v1h1v-1h1v3h1v-2h1v-1h1v-2h1v3h1v-1h1v1h1v-2h5v-1h1v2h1v-1h2v1h2v1h1v-2h3v-1h1v1h1v1h1v-1h1v1h1v-1h2v2h2v-3h1v3h1v-1h3v-1h5v-2h1v2h1v-2h1v2h3v1h2v-2h1v1h1v3h1v-2h1v-1h1v1h1v1h1v-1h4v-2h1v2h1v-1h6v-1h1v1h1v-1h1v1h1v1h3v1h2v-1h4v-1h1v1h3v3h1v-3h1v1h4v2h1v-2h1v1h1v-1h2v-1h1v1h8v-1h2v1h1v1h1v-1h3v-1h1v1h1v-1h3v1h8v2h1v-2h2v1h1v-1h1v-1h1v1h2v-1h2v-2h2v4h1v-2h2v1h1v-1h1v1h2v-2h4v1h2v1h2v-3h1v1h1v1h1v-1h2v3h1v-2h1v-1h1v-2h1v3h1v-1h1v1h1v-1h2v1h3v1h1v-1h1v2h1v-1h2v-1h4v1h2v-1h2v1h1v-1h1v1h2v-2h1v1h4v1h3v-1h4v1h5v-2h1v1h1v2h1v-1h2v-2h1v2h1v-1h1v1h2v-1h3v1h9v-1h1v1h1v-1h1v1h1v-1h3v2h1v1h1v-2h3v-1h2v1h1v-1h1v1h1v1h1v-1h1v-1h3v1h11v-2h1v1h3v1h4v-1h2v1h2v-3h1v2h8v-1h1v1h2v-1h2v1h3v3h1v-3h2v-1h6v1h1v-1h4v3h1v-2h2v1h1v-1h1v-1h2v1h2v3h1v-2h4v2h1v-2h1v-1h1v1h1v-1h1v1h1v-3h1v3h3v-1h1v-1h2v2h1v-1h2v-1h1v1h1v1h7v-1h3v2h1v-3h1v1h5v-1h1v1h2v1h6v-3h1v3h1v-1h7v-1h2v3h1v-3h1v1h1v2h1v-2h1v1h1v-1h2v1h2v-1h1v1h2v-1h3v1h1v-1h2v-1h1v1h1v-1h2v1h1v-1h1v2h1v-2h2v-1h1v2h1v-1h1v2h1v-1h3v-1h2v4h1v-4h4v1h1v-2h1v1h1v1h3v1h1v-2h1v1h1v1h4v1h1v-1h6v3h1v-4h1v1h3v-1h2v1h2v-1h2v1h2v-1h1v1h4v-1h3v-1h3v1h2v-1h3v1h1v-2h1v3h10v1h1v-1h1v-1h1v1h6v-1h2v1h7v-1h2v1h1v-1h1v-1h1v3h1v-3h1v-2h1v2h1v1h1v-1h1v2h1v-1h1v-2h1v5h1v-3h1v1h2v-1h2v3h1v-3h1v-3h1v1h2v1h1v4h1v-4h1v-2h1v2h1v1h7v-1h1v1h3v-1h1v1h1v-1h1v1h1v-1h1v3h1v-2h2v1h3v-1h1v1h3v-1h2v-1h2v3h1v-2h3v-1h1v1h2v3h1v-3h1v-2h1v2h1v2h1v-2h3v-1h3v1h5v-1h1v1h2v1h4v1h1v-1h1v-1h1v-1h1v1h3v-1h1v1h1v-1h1v1h1v-1h2v-2h1v2h2v2h1v-1h1v-1h2v1h1v-1h1v2h1v-2h1v2h2v-2h5v-1h1v4h1v-2h6v1h1v1h1v-2h4v-1h1v1h1v-1h1v1h1v-1h1v1h1v-1h2v1h1v1h3v-1h3v1h3v-2h1v2h1v-1h1v-2h1v2h1v1h2v-1h4v-1h1v1h2v-2h1v1h1v1h2v-1h3v1h1v-1h1v4h1v-4h1v1h1v-1h1v1h3V504z"/><rect x="18" y="503" width="1333" height="1.6"/><path d="M18 524v-2h2v-1h7v2h1v-1h2v-1h14v1h11v1h1v-1h8v-1h2v1h2v-1h2v1h2v-1h1v1h15v-1h11v1h2v-1h1v1h2v-1h2v1h2v1h1v-1h1v-1h1v1h3v-1h9v1h1v-1h3v-1h2v1h5v1h2v-1h1v1h19v-1h6v2h1v-2h1v1h4v-1h1v1h1v-1h1v1h1v-1h2v1h4v-1h1v1h1v-1h1v1h5v1h2v-1h1v-1h2v1h10v-1h1v-1h1v1h2v-1h1v1h1v1h1v1h1v-3h1v1h4v1h3v-1h2v1h1v1h1v-1h1v-1h1v1h2v-1h4v2h1v-2h1v1h1v-1h2v1h1v-1h6v1h1v-1h11v2h1v-2h1v1h1v-1h1v1h1v-1h2v1h1v-1h2v1h1v-1h3v1h12v-1h3v1h1v-1h4v1h1v-1h2v1h1v-2h1v1h4v1h9v1h1v-1h1v1h2v-1h2v-2h1v1h10v2h1v-3h1v1h2v1h1v-1h13v2h1v-2h1v1h1v-1h1v1h2v-1h1v1h1v-1h1v1h5v-1h11v1h1v-1h8v-1h1v1h14v1h1v-1h4v1h8v-1h1v1h1v-1h1v-1h1v1h6v1h1v-1h1v2h1v-2h7v1h5v-1h2v-1h1v1h1v1h1v-1h2v1h1v-1h3v1h1v-1h4v1h1v-1h4v2h1v-1h1v1h1v-1h4v-2h1v1h4v2h1v-1h2v-1h1v1h3v-1h6v-1h1v1h1v1h1v-1h1v2h1v-2h2v1h10v-1h1v1h1v1h1v-2h6v1h1v-2h1v2h2v-1h2v1h1v1h1v-2h1v1h6v1h1v-2h1v1h6v1h1v-1h7v-1h3v1h2v1h1v-2h1v1h1v1h1v-3h1v1h4v-1h1v1h3v1h2v1h2v-1h8v-1h1v1h4v-1h3v1h2v-1h6v1h2v-1h2v1h20v-1h1v1h2v-1h11v2h1v-2h3v1h1v-1h9v1h1v-1h1v-1h1v1h9v-1h1v1h2v1h1v-1h17v1h4v-1h2v1h2v-1h1v2h1v-1h1v-1h11v1h4v-1h2v1h1v-1h6v1h2v-1h1v1h1v-1h4v2h1v-2h2v-1h1v1h2v1h7v-1h4v2h1v-1h1v-1h8v1h1v-1h7v1h2v-1h1v-1h1v1h3v2h1v-1h1v-1h2v1h1v-1h1v1h7v-1h7v2h1v-2h4v1h1v-1h2v1h1v1h1v-2h7v1h2v-1h4v1h4v-1h1v1h24v-1h2v1h2v-1h1v2h1v-2h1v2h1v-2h1v1h1v-1h3v2h1v-2h2v1h1v1h1v-2h3v1h1v-1h9v1h2v-1h2v1h10v-1h1v1h1v-1h1v-1h1v1h12v2h1v-2h15v-1h1v1h2v2h1v-2h17v-1h1v1h3v1h5v1h1v-2h2v1h1v-2h1v2h1v-1h5v2h1v-1h1v-1h1v2h1v-2h2v1h1v-1h1v1h1v-1h3v1h1v-1h2v2h1v-3h1v2h1v-1h5v-1h1v1h7v1h2v1h1v-2h6v1h1v-1h4v1h1v-1h4v-1h1v1h3v1h1v-1h5v1h1v-1h1v1h1v-1h4v1h1v-2h1v2h8v-1h4v-1h1v1h9v1h2v1h2v-2h12v2h1v-2h2v-1h1v1h4v1h1v-1h2v2h1v-2h1v1h1v-1h1v-1h1v1h3v1h1v1h1v-1h2v-1h3v1h1v-2h1v1h8v1h2v-1h2v2h1v-2h4v1h2v-1h2v1h2v1h1v-2h2v-1h1v3h1v-2h9v-1h1v1h6v1h2v-1h4v2h1v-2h2v-1h1v1h1v1h2v-1h1v1h1v-1h1v1h1v-1h1v1h4v-1h1v1h6v-1h3v1h6v1h1v-1h2v-1h1v1h3v1h2v-1h2v-1h1v1h3v-1h1v1h6v1h1v-1h4v-1h1v1h10v1h1v-2h2v1h1v-1h13v1h15v1h1v-1h3v-1h4v1h1v-1h1v2h1v-1h1v-1h5v1h1v-1h1v1h2v1h1v-1h1v-1h1v1h1v1h1v-1h22v-1h2v1h1v1h2v-1h9v-1h1v1h8v-1h7v1h1v-2h2v1h1v1h4v-1h1v1h6v-1h1v1h13v1h1v-1h3v1h1v-1h5v-2h1v1h5v-1h1v1h3v-1h1V524z"/><rect x="18" y="523" width="1333" height="1.6"/><path d="M18 545v-2h3v1h1v-1h3v-1h2v1h1v-1h2v1h1v-1h2v1h1v1h1v-2h3v1h1v-1h2v1h1v1h1v-1h2v-1h1v1h5v-1h1v1h2v-1h4v1h1v-1h10v1h2v-1h1v1h2v-1h1v1h1v-1h3v-1h2v1h1v1h2v-1h4v1h1v-1h1v1h1v-1h1v1h13v-2h1v1h2v-1h2v1h5v2h1v-2h10v1h1v-1h2v1h1v-1h1v1h1v-1h2v1h11v-1h1v1h3v-1h1v1h2v-1h9v1h1v-1h2v1h1v-1h6v1h2v1h1v-1h3v-1h1v2h1v-2h6v-1h1v1h2v1h1v-1h3v1h1v-1h8v1h2v-1h1v-1h1v2h1v-1h1v1h1v-1h4v1h4v1h1v-1h1v1h1v-1h2v-1h1v1h1v-1h1v1h1v-1h1v1h5v-1h3v1h3v1h1v-1h4v1h1v-1h5v-1h1v2h1v-1h1v-1h1v1h2v-1h5v1h1v-1h4v-1h1v1h7v1h3v-1h1v1h1v1h1v-2h5v2h1v-2h2v1h1v-1h1v1h3v-1h1v1h1v-1h1v1h1v-1h3v1h1v-1h2v2h1v-2h5v1h2v-1h1v1h1v-1h3v1h19v-1h1v1h2v-1h5v1h1v1h2v-2h2v1h1v-1h11v1h1v-1h3v1h1v-1h1v1h4v-1h1v1h6v1h1v-1h3v-1h15v-1h1v1h3v-1h1v1h6v1h1v-1h1v-1h1v2h5v-1h1v1h8v-1h1v2h1v-1h2v-1h1v1h5v1h1v-2h1v1h2v-1h3v1h4v-1h3v-1h1v2h1v1h1v-2h6v-1h1v1h9v2h1v-2h1v1h1v-1h8v2h1v-2h1v1h2v-1h3v1h4v-1h8v2h2v-2h2v1h1v-1h1v-1h1v1h2v1h3v1h1v-1h2v-1h1v1h3v1h1v-1h5v-1h1v1h7v-1h1v1h4v1h2v-1h5v-1h1v1h2v1h1v-2h19v1h1v-1h2v1h1v-1h4v1h4v1h2v-2h8v1h1v-1h5v1h4v-1h1v1h5v-1h1v1h1v1h1v-1h4v-1h1v1h1v-1h8v1h10v1h2v-1h1v-1h5v1h2v-1h1v1h12v-1h3v2h1v-2h7v1h5v-2h1v2h6v-1h12v1h1v-1h2v1h4v-1h1v1h6v-1h1v1h1v-1h8v1h1v-1h1v-1h2v2h1v-2h1v2h1v-2h1v1h2v1h1v1h1v-1h1v-1h5v1h2v-2h1v2h1v-1h1v1h1v-1h1v1h4v1h1v-1h1v1h1v-1h5v1h1v-1h5v-1h1v-1h1v2h1v1h1v-1h7v-1h1v1h5v1h1v-1h1v1h1v-1h10v-1h1v1h1v-1h1v1h2v-1h6v1h1v1h1v-1h1v-1h3v1h1v-1h1v-1h1v2h10v1h2v-1h4v1h1v-1h2v1h1v-2h5v1h1v-1h1v1h4v1h1v-1h1v1h1v-1h1v1h1v-1h1v-1h2v1h1v-1h1v1h1v1h2v-1h1v1h2v-2h12v1h4v-1h2v-1h1v1h1v1h2v-1h2v1h17v-1h1v1h1v-1h8v1h4v-1h15v1h1v-1h4v1h1v-1h1v1h1v-1h10v2h1v-2h1v1h1v-1h1v1h6v-1h2v1h2v-1h9v1h1v-1h4v1h2v-1h3v1h1v-1h2v1h1v-1h1v1h1v1h3v-1h7v-1h2v2h1v-2h2v1h1v-1h1v2h1v-2h7v1h1v-1h3v1h1v-1h1v1h1v-1h3v1h3v-1h1v1h4v1h1v-1h9v1h1v-1h4v-1h1v1h11v1h2v-2h1v1h3v-1h10v1h1v-1h7v-1h1v1h8v1h1v-1h9v1h1v1h1v-1h1v-1h2v1h7v-1h1v1h1v-1h1v1h6v1h1v-1h1v-1h1v1h3v-1h1v1h1v-1h1v1h1v-1h1v1h1v1h1v-1h5v-1h1v1h1v-1h4v1h1v1h1v-2h12v2h1v-2h4v1h2v-1h15v1h1v-2h1v1h12v1h5v-1h1v1h1v-1h2v2h1v-2h2v-1h1v1h15v1h1v1h1v-2h2v2h1v-2h5v1h3v-1h3v-1h1v2h1v-1h1v1h1v-1h5v1h1v-1h1v1h1v-1h1v1h10v1h2v-1h10v1h1v-1h2v-1h2v1h4v-1h1v1h2v-1h1v1h15v-1h4v1h4v1h1v-1h1v1h1v-1h3v-1h1v1h6v-1h12v1h1v-1h5v1h1v-1h1v1h2v-1h1v1h2v-1h12v1h1V545z"/><rect x="18" y="544" width="1333" height="1.6"/><path d="M18 566v-3h1v1h1v-1h9v1h1v-1h3v-1h1v1h2v-1h1v1h1v-1h1v1h4v-1h1v1h1v1h1v-2h1v1h11v-1h1v1h3v-1h1v1h3v1h1v-1h3v-1h1v3h1v-3h1v1h1v-1h2v1h4v1h2v1h1v-2h2v1h2v-1h2v1h1v-1h1v1h4v-1h3v1h1v-1h4v1h1v-2h1v1h4v-2h1v2h5v1h6v-1h1v1h2v-1h2v1h1v-1h1v1h3v-2h1v1h1v1h3v-1h1v2h1v-1h4v-1h1v2h1v-1h1v-1h2v1h6v-1h1v1h2v-1h3v1h1v-1h1v1h6v-1h2v2h1v-2h2v-1h1v2h1v-1h8v2h1v-1h1v-1h3v1h1v-1h1v1h2v-1h2v1h2v-1h2v1h3v1h1v-1h2v1h1v-2h4v-1h1v1h5v-1h1v1h2v-1h1v1h2v1h1v-1h2v2h1v-2h1v1h1v-1h1v-1h1v1h2v-1h2v1h2v-1h1v1h2v-1h1v-1h1v2h1v-1h1v1h14v-1h1v1h4v1h1v-1h3v-1h1v2h10v-1h2v-1h2v1h1v-1h1v1h1v1h1v-1h1v2h1v-1h3v-1h1v1h1v-1h5v-1h1v1h3v-1h1v1h1v2h1v-2h2v-1h4v1h1v-1h1v1h5v-1h1v1h1v1h1v-1h5v-1h1v1h3v1h1v-1h2v-1h1v1h2v2h1v-1h5v-1h1v1h1v-1h4v1h3v-1h4v-1h3v1h1v-1h3v1h1v2h1v-2h1v-1h1v2h1v-1h3v1h1v-1h3v-1h2v1h2v-1h1v1h2v-1h2v2h1v-1h6v1h1v-1h4v-1h1v1h2v1h1v-1h3v-1h1v1h3v-1h1v1h8v-1h1v1h4v2h1v-2h1v1h1v-1h1v1h2v-1h1v1h5v-1h1v1h2v-1h2v-2h1v2h6v1h1v1h1v-2h2v1h1v-1h1v2h1v-2h1v1h4v-1h4v1h1v-1h1v1h1v-2h1v2h1v-1h2v1h1v-1h4v1h2v-1h2v2h1v-1h1v-1h10v-1h1v1h3v1h1v-3h1v2h5v-1h1v2h1v-1h2v-1h1v2h5v-1h1v1h8v-1h1v1h1v-1h4v1h2v-1h7v1h1v-1h5v1h1v-1h3v-1h1v1h1v-1h1v1h6v1h4v-1h1v1h1v-1h1v1h5v-1h1v1h1v-1h4v1h1v-2h1v1h1v-1h2v1h6v1h1v-1h1v-1h1v1h2v2h1v-2h1v1h6v-1h2v2h1v-1h1v-2h1v2h2v-1h3v1h8v-1h1v1h2v-1h6v-1h1v2h1v-1h2v2h3v-2h1v1h2v-1h3v1h1v-1h4v-1h1v1h1v1h1v-1h9v2h1v-2h5v-1h1v1h3v1h3v-1h2v1h1v-2h1v1h3v2h1v-2h2v-1h1v1h10v1h1v-1h2v-1h1v1h2v-1h1v1h1v-1h1v1h1v-2h1v4h1v-2h3v1h1v1h1v-2h4v1h2v-1h6v-1h2v1h2v-1h1v1h5v1h2v1h1v-1h3v-1h1v1h1v-1h1v1h4v-1h1v1h4v-1h1v1h2v-1h1v1h1v-1h1v-1h1v1h2v-1h1v1h1v-1h1v1h3v1h8v-1h1v1h2v-2h1v3h1v-1h1v-1h1v1h2v-1h2v-2h1v1h1v1h3v-1h1v2h1v-3h1v2h1v-1h1v1h6v1h1v-1h4v1h1v-1h1v2h1v-2h1v2h1v-1h1v-1h1v1h1v-1h6v-1h1v1h7v-1h1v1h5v-1h1v2h1v-1h2v-1h1v1h2v-1h1v1h3v1h4v-1h3v2h1v-1h1v-1h3v1h1v-1h6v-1h1v1h2v-1h1v1h2v1h1v-1h4v1h2v-1h1v-1h1v1h1v1h1v-1h1v1h1v-1h2v1h1v-1h1v1h1v-1h4v1h3v-1h2v-1h1v1h6v-2h2v2h4v1h1v-1h1v1h3v-1h3v1h1v-1h2v2h1v-2h2v1h1v-1h2v-1h1v1h2v-1h1v1h2v1h1v-1h1v-1h1v1h1v2h1v-1h1v-2h1v1h7v1h4v-2h1v2h2v1h1v-2h2v1h1v-1h1v1h8v-1h1v1h1v-1h1v1h2v-1h1v1h1v-1h2v1h1v-1h1v-1h2v1h6v2h1v-2h1v-1h3v2h1v-1h1v1h9v-1h1v1h4v-1h3v-1h1v1h6v1h1v-1h3v1h4v-1h1v1h2v-1h1v1h2v-2h1v1h3v2h1v-2h7v1h1v-2h2v1h1v2h1v-2h2v-1h1v1h2v1h1v-1h5v-1h1v1h1v-1h1v1h4v1h2v-1h2v2h1v-2h2v1h1v1h1v-2h3v1h1v-1h2v1h1v-1h1v-1h1v1h1v1h1v-1h2v1h4v-1h1v1h1v-1h3v2h1v-2h2v-1h2v1h6v1h1v1h1v-1h5v1h1v-2h1v2h1v-2h2v2h1v-2h3v-1h1v1h10v2h1v-2h4v1h1v-1h2v-1h1v1h3v-1h1v1h2v-1h1v1h2v-1h2v1h1v1h1v-1h1v1h3v-1h4v1h1v-2h1v1h3v-1h1v1h5v-1h1v1h3v2h1v-2h1v1h2v-1h1v1h2v-1h5v1h2v-1h10v1h8v-1h1v1h1v-1h2v2h1v-2h1v1h1v-1h1v1h4v-1h2v2h1v-3h1v1h3v1h1v-1h2v1h1v1h1v-1h3v-1h7v1h1v-1h2v-1h1v1h6v1h1v-1h1v1h4v-1h1v1h6v1h1v-1h4v-1h2v1h8v-1h4v1h1v-1h9v1h1v-1h1v2h1v-1h2v-1h1v2h1v-2h5v-1h1v1h2v1h1v-1h2v-1h1v1h2v-1h1v1h2v-1h1v1h2v1h4v-1h2v-1h1v1h5v1h2v-1h1v1h1v1h1v-1h2v-1h9v-1h2v1h5v1h1v-1h1v1h1V566z"/><rect x="18" y="565" width="1333" height="1.6"/><path d="M18 586v-2h2v1h1v-1h4v1h6v-1h7v1h3v-1h1v1h2v-1h2v1h3v-1h1v1h1v-1h8v1h3v-1h3v1h1v-1h3v1h4v-1h1v1h2v-1h5v1h5v-1h1v1h1v-1h1v1h1v-1h13v1h2v-1h2v1h1v-1h14v1h1v-1h20v1h1v-1h3v1h1v-1h34v1h1v-1h24v1h1v-1h6v1h1v-1h3v-1h1v2h1v-1h3v-1h1v1h8v1h1v-1h10v1h1v-1h7v-1h1v1h4v-1h1v1h7v1h1v-2h1v2h1v-1h4v1h2v-1h2v1h1v-1h1v-1h1v1h2v-1h1v1h4v1h1v-1h1v-1h1v1h10v-1h1v1h8v-1h1v1h10v1h1v-1h2v1h1v-1h2v1h1v-1h6v1h2v-1h1v1h1v-1h1v-1h1v2h1v-1h9v1h2v-1h1v-1h1v1h3v1h1v-1h13v1h1v-1h7v-1h1v1h8v1h6v-1h1v1h2v-1h8v1h2v-1h2v1h1v-1h12v1h1v-1h11v1h1v-1h8v1h1v-1h3v-1h1v1h7v1h1v-1h1v1h2v-1h3v1h1v-1h6v1h1v-1h15v1h1v-1h2v1h2v-1h2v1h1v-1h14v1h1v-1h5v1h1v-1h6v1h1v-1h12v-1h1v1h5v-1h1v2h1v-1h11v1h1v-1h10v-1h1v1h7v1h1v-1h32v1h1v1h1v-1h1v-1h4v1h1v-1h4v1h1v-1h5v1h3v-1h2v1h1v-1h14v1h1v-1h4v1h1v-1h3v1h1v-1h2v1h2v-1h1v1h1v-1h2v1h2v-1h1v1h1v-1h1v1h2v-1h8v1h1v-1h1v1h1v-1h8v1h2v-1h1v1h3v-1h9v-1h1v1h9v1h1v-1h1v2h1v-1h2v-1h1v1h1v-1h1v1h3v-1h1v1h1v-1h2v1h3v-1h4v1h3v-1h4v1h1v-1h6v-1h1v1h9v1h1v-1h2v1h1v-1h7v1h1v-1h3v1h1v-1h4v1h1v-1h1v1h2v-1h3v1h3v-1h3v1h2v-1h1v1h4v-1h1v1h2v-1h3v1h1v-1h20v1h1v-1h3v1h1v-1h1v1h3v-1h5v1h1v-1h11v1h1v-1h3v1h1v-1h9v1h1v-1h2v1h1v-1h3v1h5v-1h1v1h1v-1h1v1h3v-1h2v1h2v-1h1v1h2v-1h1v1h2v-1h7v1h1v-1h12v1h1v-1h4v1h3v-1h1v1h1v-1h7v1h3v-1h1v1h2v-1h2v1h2v-1h26v1h1v-1h2v1h1v-1h10v1h1v-1h1v1h1v-1h20v1h1v-1h2v1h1v-1h5v1h1v-1h7v1h1v-1h2v-1h1v1h6v1h1v-1h6v1h4v-1h17v1h1v-1h2v1h1v-1h2v-1h1v1h9v1h5v-1h5v1h2v-1h3v-1h1v2h1v-1h2v1h1v-1h1v1h4v-1h3v1h1v-1h1v-1h1v1h20v1h1v-1h4v1h1v-1h12v1h1v-1h1v-1h1v1h2v1h1v-1h2v1h1v-1h1v1h1v-1h1v2h1v-1h1v-1h1v1h1v-1h1v1h2v-1h2v1h1v-1h4v1h2v-1h5v1h1v-1h4v1h1v-1h1v1h1v-1h6v1h1v-1h29v1h1v-1h6v-1h1v1h5v1h2v-1h3v1h1v-1h3v1h1v-1h1v1h1v-1h4v1h3v-1h8v-1h1v1h1v1h1v-1h4v1h1v-1h19v1h7v-1h1v1h1v-1h3v-1h1v2h1v-1h4v-1h1v1h1v1h1v-1h6v1h1v-1h1v-1h1v2h1v-1h1v1h1v-1h5v-1h2v1h9v1h1v-1h2v1h3v-1h3v1h1v-1h2v1h2v-1h5V586z"/><rect x="18" y="585" width="1333" height="1.6"/><path d="M18 607v-2h3v1h1v-1h5v-1h1v1h3v-1h5v1h3v-1h1v1h6v-1h1v1h4v1h1v-2h4v1h1v-1h1v-1h1v1h10v1h1v-1h1v1h1v-1h1v1h1v-1h1v1h1v-1h3v1h7v1h1v-1h7v-1h1v1h1v-1h1v1h2v-1h5v1h1v-1h2v1h1v-1h8v2h1v-2h2v-1h1v1h5v1h6v1h1v-1h8v-1h1v1h5v-1h1v1h1v-1h2v1h3v-1h1v1h1v-1h3v1h3v-1h15v1h8v-1h1v1h1v1h2v-1h1v-1h1v1h2v-1h2v1h1v1h1v-2h4v1h1v-1h1v1h1v-1h2v-1h1v1h3v1h3v-1h10v1h1v-1h9v1h6v-1h1v1h2v-1h6v1h1v-1h8v1h1v-1h3v1h1v-1h1v1h1v1h1v-1h1v1h1v-2h2v1h1v-1h1v1h1v1h1v-1h10v1h3v-1h9v1h1v-1h1v1h1v-1h3v-1h2v1h7v-1h1v1h3v1h2v-2h5v2h1v-1h2v-1h1v1h1v-1h2v1h12v-1h2v1h11v1h1v-1h1v-1h1v1h6v-2h1v1h5v2h1v-2h2v1h1v-1h3v-1h1v3h1v-2h3v-1h2v1h5v1h3v-1h1v1h5v1h1v-1h3v-1h2v1h3v-1h1v1h1v-2h1v1h5v1h1v-1h14v2h1v-2h9v1h3v1h1v-2h7v1h3v-1h1v1h1v-1h5v1h1v-2h1v1h2v1h1v-1h5v1h1v-1h2v1h5v-1h11v-1h1v1h8v-1h1v2h1v-1h1v-1h1v1h5v2h1v-1h1v-1h2v1h1v-1h5v1h7v1h1v-1h2v1h1v-1h4v-1h4v2h1v-1h7v-1h1v1h1v-1h3v-1h1v1h3v1h1v-1h10v1h1v-1h1v1h2v-1h3v1h1v-1h3v1h2v-2h1v2h4v-1h6v1h1v-1h1v1h3v-1h3v1h1v-1h3v1h2v-1h5v1h1v1h1v-2h4v1h1v-1h1v2h1v-2h2v1h1v-1h1v1h1v-1h1v-1h1v3h1v-1h1v-1h1v1h1v-1h2v1h2v-2h1v1h3v1h2v-1h1v1h2v-1h3v1h2v-1h2v1h4v-1h1v1h1v-1h1v1h1v-1h2v1h2v-1h1v1h14v-1h1v1h1v-1h1v1h6v-1h1v1h1v-1h2v1h7v-1h1v1h9v-1h1v1h7v1h1v-2h1v1h1v-1h4v1h1v-1h1v1h1v-1h2v1h1v-1h2v1h2v-1h3v1h1v-1h1v2h1v-1h1v-1h1v1h1v-1h1v1h2v-1h1v-1h1v2h1v-1h2v1h1v1h1v-1h20v-1h1v1h4v-1h7v-1h1v1h10v1h2v-1h1v1h2v-1h2v1h1v-1h4v1h2v-1h3v1h1v-1h3v1h3v-1h1v1h5v1h1v-1h1v-1h16v1h1v-1h1v1h1v-1h2v1h1v1h1v-1h4v-1h1v1h11v1h1v-1h8v-1h1v1h5v-1h2v1h2v1h1v-2h1v1h1v-1h4v1h8v1h1v-1h2v1h1v-1h1v1h1v-1h9v-2h1v2h1v-1h2v1h1v-1h2v2h1v-1h2v1h1v-1h1v1h1v-1h8v1h1v-2h2v1h1v-1h2v1h1v-1h8v1h4v-1h1v1h12v-1h1v1h6v1h1v-1h2v1h1v-2h5v1h1v-1h2v2h1v-2h1v1h14v-1h1v1h7v-1h2v1h6v-1h1v1h4v1h1v-1h8v1h1v-1h3v-1h1v-1h1v1h1v1h1v1h1v-2h3v1h1v-1h7v1h1v-1h15v1h1v-1h6v1h4v1h1v-1h3v-1h1v-1h1v2h1v-1h4v1h1v-1h3v1h1v-1h5v-1h1v1h1v1h1v-1h1v1h1v-1h1v1h4v-1h3v2h1v-2h4v1h1v-1h4v1h3v1h1v-1h1v-1h1v-1h1v2h1v-1h3v2h1v-1h1v-1h1v1h1v-1h11v1h5v-1h1v1h6v-1h1v2h1v-1h5v-1h1v1h3v-1h1v1h6v-1h10v1h2v-1h11v2h1v-2h1v1h4v1h2v-1h10v1h1v-1h1v-1h1v1h9v1h1v-1h3v-1h1v1h1v-1h3v1h3v-1h1v1h9v-1h1v1h12v-1h3v1h1v-1h7v-1h2v1h2v-1h1v2h1v-1h4v1h5v-1h2v1h3v-2h1v2h2v-1h4v1h3v-1h1v1h3v-1h1v1h20v-1h7v2h1v-2h2v1h1v-1h2v1h1v-1h3v-1h1v2h3v-1h1v1h1V607z"/><rect x="18" y="606" width="1333" height="1.6"/><path d="M18 628v-2h3v-1h5v1h1v-1h5v1h1v1h1v-2h2v2h1v-2h1v1h2v-1h1v1h3v-1h3v1h1v-1h2v1h1v-1h1v1h1v-1h1v1h11v-1h2v2h1v-1h4v-1h1v1h2v-1h4v-1h1v1h1v1h1v-1h1v1h1v-1h1v1h1v-1h1v1h1v-1h1v1h2v1h1v-1h1v-1h1v1h2v1h1v-1h2v-1h1v1h8v-1h1v1h1v1h1v-1h2v-1h3v1h2v-1h4v1h1v-2h1v1h1v1h1v-1h4v1h4v1h2v-1h5v-1h2v2h2v-1h1v-1h1v1h8v-1h2v1h2v-1h4v1h1v-1h2v1h2v-1h1v1h1v-1h1v2h1v-2h3v2h1v-2h5v1h1v-1h1v1h5v1h1v-1h3v-2h1v2h2v1h1v-1h3v1h1v-1h22v-2h1v1h2v1h10v-1h1v1h1v-1h1v1h2v-1h2v1h3v-1h7v1h1v-1h4v1h1v-1h2v1h1v1h1v-2h1v1h1v-1h6v1h1v1h1v-2h1v1h3v-1h7v-1h1v1h2v1h1v-1h3v1h2v-1h1v1h1v-1h3v-1h1v1h7v1h1v-1h13v2h1v-2h6v1h1v-1h9v1h1v-1h5v1h1v-2h1v2h1v-1h1v1h1v-1h3v1h2v1h1v-1h6v-1h2v1h1v-1h1v1h1v-1h3v1h1v-1h3v1h1v-1h2v1h1v-1h3v1h1v-1h2v1h1v-1h5v1h3v1h1v-2h2v1h1v-2h1v3h1v-2h6v1h2v-1h2v1h1v-1h4v1h1v-1h3v1h2v1h1v-2h1v1h6v-2h1v1h6v-1h1v1h4v-1h1v3h1v-1h1v-1h1v1h2v-1h1v1h9v-1h1v-1h1v1h5v1h1v-1h1v1h2v1h1v-1h13v-1h8v2h1v-1h12v-1h3v1h2v-1h2v2h1v-2h1v1h4v-1h12v1h1v-1h6v1h2v-1h2v1h3v-1h4v1h1v-1h2v1h3v-1h1v1h1v-1h1v1h7v-1h3v1h1v-1h4v2h1v-2h1v1h1v-1h5v1h1v-2h1v2h1v-1h5v-1h1v2h1v-1h2v1h2v1h2v-1h4v1h1v-1h18v-1h1v1h2v1h1v-2h1v1h1v-2h2v1h3v1h1v-1h1v1h9v-1h2v1h3v1h1v-1h6v-1h1v1h2v-1h1v1h3v-1h10v-1h1v1h1v1h3v-1h9v1h11v-1h1v1h1v-1h6v1h7v-1h1v1h2v-1h8v-1h1v2h1v-1h2v1h2v-1h2v1h1v-2h2v1h1v1h1v-1h2v1h1v1h1v-1h5v1h1v-1h7v-1h2v1h1v-1h1v1h1v-1h2v1h1v-1h2v1h2v-1h9v-1h1v1h9v1h1v-1h3v1h4v-1h2v1h1v-1h1v1h1v1h1v-2h2v1h2v-1h7v-1h1v1h1v1h7v-1h1v-1h1v1h5v1h23v-1h3v1h11v-1h1v1h3v1h1v-1h3v-1h1v1h5v-1h4v2h1v-2h1v2h1v-2h6v1h1v-1h1v1h4v1h1v-1h7v1h1v-1h8v-1h1v1h1v1h1v-1h1v-1h1v1h21v1h1v-2h1v1h1v-1h1v1h8v1h1v-1h3v-1h1v1h1v-1h1v1h1v1h1v-1h5v1h1v-1h1v-1h1v1h2v-1h1v1h5v-1h2v1h1v-1h1v-1h1v1h5v-1h1v1h2v1h5v-1h7v-1h1v1h9v1h1v-1h10v1h3v-1h1v2h1v-1h3v-1h1v1h3v-1h1v1h11v-1h4v1h1v1h1v-2h2v1h3v-1h1v1h4v-1h1v1h1v-1h1v1h3v-1h1v1h3v-2h1v1h1v1h1v1h1v-1h1v1h1v-2h1v1h2v-1h5v1h1v-1h1v1h1v-1h3v1h2v-1h3v2h1v-2h5v1h1v-1h3v1h1v-1h2v2h1v-2h1v1h4v1h1v-1h5v-1h2v1h1v-1h6v1h14v1h1v-1h5v-1h2v1h2v-1h1v1h3v-1h1v1h1v1h1v-1h1v1h1v-1h1v1h1v-1h1v1h1v-1h6v-1h1v1h3v1h1v-1h5v1h1v-1h6v-1h3v1h2v-1h6v2h1v-2h10v1h1v-1h1v1h1v-1h2v-1h1v1h1v1h1v-1h1v2h1v-2h1v-1h1v2h5v-1h2v1h3v-1h5v-1h1v1h1v1h1v-1h2v2h1v-2h4v-1h1v2h3v-2h1v2h5v-1h1v1h23v1h1v-1h9v-1h1v1h1v-1h1v1h1v-1h3v1h1v-1h2v1h2v-1h17v-1h2v1h3v1h1v1h2v-2h1v1h1v-1h1v1h9v1h1v-1h1v-1h1v1h6v1h1v-2h7V628z"/><rect x="18" y="627" width="1333" height="1.6"/><path d="M18 648v-6h1v-1h4v1h1v-1h4v1h2v-1h3v-1h1v2h1v-1h1v1h1v3h1v-3h1v1h1v-1h1v1h3v-2h1v2h1v-1h1v4h1v-1h1v-3h3v3h1v-3h1v1h2v1h2v2h1v-3h2v1h2v1h1v-1h1v-1h2v1h1v2h1v-4h1v1h1v-1h1v1h1v-1h1v-1h1v1h1v1h1v-1h1v-3h1v3h3v1h1v-1h1v1h1v1h3v-1h2v-4h1v3h1v1h2v1h1v-2h2v3h1v-3h1v1h2v1h3v-1h1v1h1v1h1v-3h1v1h4v2h1v-2h3v-2h2v3h1v-1h1v-2h1v3h1v1h1v-2h3v1h1v-1h1v-2h3v1h1v3h1v-2h2v-1h1v1h2v-1h2v1h1v-1h3v1h2v3h1v-3h2v-1h1v1h2v-1h6v-1h1v-1h1v2h1v-1h1v1h1v-2h1v2h1v2h1v-2h3v1h1v-2h1v1h1v1h4v-1h1v-1h1v4h1v-2h2v-2h1v1h1v4h1v-3h1v1h1v-1h1v-1h1v1h1v1h3v-1h3v1h1v-2h2v4h1v-2h1v-1h1v-1h1v1h8v1h4v1h1v-2h1v1h1v1h1v-2h1v-1h2v-2h1v2h1v-1h1v1h2v-2h2v2h1v1h2v3h1v-3h3v-2h1v2h3v-1h1v-1h1v1h1v-3h1v2h2v1h1v-1h2v1h3v1h1v-2h1v2h3v-1h1v2h1v-5h1v2h2v1h4v1h4v-2h1v1h3v-1h2v-1h1v2h1v-1h2v1h1v-1h1v1h1v2h1v-3h1v1h2v3h1v-3h1v1h1v2h1v-2h3v1h1v-1h2v-3h1v3h6v1h1v-1h5v3h1v-3h1v1h1v-1h4v-1h1v-3h1v4h1v1h1v-3h1v2h2v-3h1v4h1v-2h1v-1h1v2h2v-1h2v3h1v-3h1v1h1v-1h1v1h6v-1h6v1h1v-1h6v4h1v-3h1v-4h1v5h1v-3h2v1h1v-1h1v-2h1v2h2v1h3v1h2v-1h2v-1h1v1h1v1h2v-1h1v1h1v-1h5v1h2v-2h1v4h1v-2h2v1h1v-1h1v1h1v-2h4v-3h1v2h2v1h1v-2h1v1h1v4h1v1h1v-4h2v3h1v-3h1v2h1v-3h1v1h1v1h2v1h1v-1h3v1h1v-2h2v1h1v-1h1v2h1v-3h1v-2h1v3h1v-1h4v4h1v-4h1v1h1v-1h2v1h1v-1h1v1h1v-1h1v1h1v-1h1v1h1v-1h1v1h3v-1h1v5h1v-6h1v2h1v-1h1v1h1v-1h1v-1h1v2h1v-1h3v-2h1v3h1v-2h1v6h1v-3h1v-1h1v1h2v1h1v-1h2v1h1v-3h1v4h1v-2h4v1h1v-1h6v1h1v-2h1v2h1v-2h1v-1h2v1h1v-1h1v1h2v1h4v-2h1v1h1v1h3v3h1v-3h1v1h1v-3h1v1h3v-1h4v1h1v-2h1v2h4v-1h1v1h1v-1h1v-1h1v2h1v1h1v-1h1v1h3v-1h1v1h3v-1h1v2h2v-2h2v-1h1v1h2v1h1v-1h1v-1h1v1h2v-1h3v1h2v-1h1v1h3v-1h4v1h1v-1h2v1h5v1h3v3h1v-3h6v-2h1v2h3v-2h1v1h1v4h1v-4h2v1h4v-2h1v2h1v3h1v-3h1v-1h1v1h2v-2h1v1h2v-1h3v1h1v-1h1v-1h1v4h1v-1h1v-1h1v2h1v-1h1v1h1v-1h2v-1h2v1h1v1h1v-1h2v1h1v-1h1v-1h1v1h1v-1h2v-1h4v-2h1v3h1v-1h2v1h3v2h1v-3h7v5h1v-5h2v1h1v-1h3v4h1v-3h1v2h1v-2h1v-1h1v1h3v1h1v-1h4v1h13v-1h3v1h2v-1h2v-1h4v2h1v-2h4v1h1v-1h1v-1h1v1h1v1h5v1h1v-2h3v1h1v1h1v-2h1v1h1v-1h2v-1h1v1h1v1h1v-2h1v2h2v2h1v-3h1v1h2v-1h1v1h2v1h2v-1h1v1h3v-3h1v3h5v3h1v-3h3v1h2v-1h1v1h1v-1h1v1h2v2h1v-4h1v1h4v-1h1v1h1v-1h1v-3h1v4h2v-1h1v1h2v1h1v-1h2v-1h3v-1h5v1h1v-1h3v1h2v-1h2v1h2v1h1v-2h1v4h1v-2h1v1h1v-2h2v1h4v-1h1v1h1v-1h1v-1h1v1h3v-1h1v1h2v-1h1v-1h1v1h1v1h1v-1h3v1h1v-1h1v1h1v-1h1v1h2v-1h1v3h1v-3h4v1h2v1h1v-1h1v1h1v-1h2v1h11v-1h2v2h1v-2h1v1h1v-1h2v1h1v-1h4v1h2v3h1v-4h4v-1h1v1h4v-2h1v2h1v2h1v-3h4v1h2v3h1v-3h1v1h1v-1h1v1h5v-1h1v3h1v-3h1v-1h2v1h1v2h1v-2h1v-2h1v2h4v2h1v-1h2v1h1v1h1v-1h1v-1h1v1h1v-1h1v1h1v-1h1v1h2v-1h1v1h1v-1h3v1h1v-1h1v-1h1v1h5v1h1v-1h3v-1h1v1h1v-1h1v4h1v-3h2v-1h1v3h1v-2h1v-1h4v2h1v-1h3v-1h2v-1h4v-2h1v4h1v-3h1v1h1v-1h1v1h4v1h3v1h1v-1h2v2h1v-2h2v-2h1v3h3v1h1v-1h1v1h3v-1h1v1h1v-1h1v1h2v1h1v-2h2v3h1v-4h1v2h1v-1h2v-1h1v-1h2v1h2v-1h1v1h2v2h1v-2h1v-1h2v2h4v-1h2v-1h11v1h1v-2h1v2h1v-1h4v2h5v-1h8v-1h1v3h1v-3h4v-1h1v1h2v1h2v-1h1v1h2v-1h1v1h3v-1h1v1h1v-1h1v2h1v-1h1v-2h1v1h1v1h1v-1h1v3h1v-2h1v1h1v-1h1v-1h1v1h1v-1h2v1h1v-3h1v2h1v1h1v-1h1v-1h1v2h2v-1h2v2h3v3h1v-4h3v-1h1v-1h1v2h1v1h3v-1h2v1h6v3h1v-2h1v-2h1v2h1v-1h4v1h1v-1h1v1h2v-1h2v-1h1v2h3v1h1v-3h1v-1h2v1h1v-1h2v-1h1v1h1v4h1v-3h3v3h1v-2h2v1h2v-1h1v3h1v-3h1v1h1v-1h1v-1h1v1h3v1h2v-1h3v-1h1v1h3v1h1v-2h1v1h3v1h2v-3h1v2h2v-1h1v1h1v2h1v-2h1v-1h1v2h1v-1h1v1h1v-1h1v-1h2v-1h1v1h1v1h3v-1h1v-1h1v1h4v-2h1v1h4v-1h1v5h1v-3h1v-1h2v1h2v-1h1v1h1v-3h1v5h1v-2h1v-3h1v3h1v-1h3v3h1v-3h4v1h3v-1h1v1h1v-1h1v1h1v-1h5v1h3v-1h1v-2h1v2h1v1h1v2h1v-5h1v3h2v-2h1v1h5v1h1v1h1v-1h1v-2h1v-1h1v5h1v-3h2v1h3v-1h1v1h1v-3h1v2h1v3h1v-3h3v1h6v2h1v-2h3v1h4v-1h1v1h4v-1h1v3h1v-3h1v1h1v-2h3v4h1v-4h5v1h1v1h2v-4h1v3h3v-1h1v1h1v1h1v-1h1v1h2v1h1v-1h4v3h1v-4h1v1h2v-2h1v2h1v1h1v-2h1v-1h2v1h2v-3h1v2h4v2h1v-1h4v-1h1v1h1v1h1v-2h3v-2h1v1h1v2h4V648z"/><rect x="18" y="647" width="1333" height="1.6"/><path d="M18 669v-7h1v-1h1v1h1v1h1v-1h1v1h2v-1h1v1h2v-1h2v-1h5v-1h1v2h1v-1h1v-1h1v2h1v-1h1v1h1v-1h1v-1h2v2h1v-1h2v1h1v-1h1v1h1v1h2v-1h1v1h1v1h1v-3h1v2h7v3h1v-6h1v3h3v-1h1v-2h1v1h1v1h3v4h1v-7h1v4h2v-1h1v-2h1v3h3v1h2v-1h2v4h1v-3h1v-1h2v-1h1v1h1v-3h1v5h1v-2h2v-1h1v-1h3v-1h1v2h1v-1h3v-1h1v2h1v-1h1v-1h1v1h1v3h1v-3h2v1h1v-1h2v1h2v-2h1v3h4v4h1v-4h6v1h1v3h1v-4h4v1h1v-1h1v-1h1v1h3v-1h2v-1h1v1h2v1h2v-1h1v-1h2v4h1v-3h3v3h1v-4h1v-1h4v1h1v1h1v-2h3v1h1v1h1v-1h3v1h1v-2h1v1h1v1h1v-1h1v-1h2v1h1v3h1v-7h1v3h1v2h1v-1h1v1h2v3h1v-4h1v1h1v1h1v-2h1v-2h1v4h3v-1h1v-2h1v1h4v-1h2v1h3v1h2v-1h1v1h1v-1h4v4h1v-5h1v1h1v-1h1v1h1v1h2v1h1v-1h2v-1h1v1h1v1h1v-1h1v-1h1v1h1v-1h2v1h2v1h1v2h1v-4h1v-1h3v1h1v-1h3v2h3v4h1v-4h1v3h1v-3h2v1h3v-3h1v6h1v-3h3v-1h3v-1h1v-1h1v1h4v-1h2v1h1v-1h4v1h3v-3h1v3h1v-1h1v1h1v1h4v4h1v-3h1v1h1v-1h2v1h1v2h1v-3h1v-1h1v1h1v-2h3v-1h3v1h3v-2h1v2h2v4h1v-7h1v4h1v1h1v-1h1v-1h2v-1h1v1h1v1h2v-5h1v3h2v2h3v-3h1v3h1v-1h1v1h1v-1h1v4h1v-7h1v1h1v3h1v-2h5v2h2v1h2v-2h1v1h4v-1h2v1h2v-1h3v2h1v-1h1v1h3v1h1v-1h1v3h1v1h1v-5h1v2h1v-1h2v1h1v-1h1v-1h1v-1h2v1h1v2h1v-1h1v-1h1v-3h1v4h3v-1h1v-1h1v-1h1v1h1v-1h1v2h1v-1h1v-1h1v2h1v-1h1v-1h1v1h1v-1h1v1h4v-3h1v4h2v-1h2v2h1v-2h1v1h2v2h1v-3h2v1h1v-1h1v1h1v1h3v3h1v-3h1v-1h1v1h4v2h1v-1h1v-1h1v-1h1v-1h1v-1h1v1h1v-1h1v2h1v-1h2v-1h1v1h1v-1h1v3h1v-1h2v-1h1v-1h1v1h2v-1h1v1h1v2h1v-1h1v1h1v-1h2v-2h1v2h4v-1h2v-1h2v1h1v1h1v2h1v2h1v-5h2v1h1v-2h1v6h1v-5h1v2h2v3h1v-4h1v-1h2v1h1v5h1v-5h1v1h1v-3h1v3h4v1h1v-1h1v-1h1v3h1v-3h1v1h1v2h1v-2h1v-1h6v2h1v-2h1v1h2v-2h1v-1h1v2h1v1h4v-1h1v1h1v-1h1v-2h1v4h1v1h1v-2h2v-1h1v-1h1v1h1v1h1v-1h2v1h1v-1h1v1h1v-1h1v2h2v-2h5v2h1v-4h1v1h1v1h1v1h4v-1h7v-1h1v-1h2v2h1v-2h1v1h3v1h1v-3h1v4h2v4h1v-1h1v-3h2v4h1v-5h5v-2h1v1h1v1h6v1h1v1h1v-1h1v2h1v-1h1v-2h2v1h3v1h1v-2h1v1h1v-1h2v-1h2v1h4v-5h1v5h2v-1h2v1h1v-1h1v1h1v-3h1v3h1v2h1v-1h1v-1h3v1h1v-1h1v4h1v-3h1v-1h3v-1h1v2h1v-2h1v1h1v1h1v4h1v-4h1v3h1v-3h1v1h1v-2h4v-1h1v-1h1v2h1v1h2v-4h1v5h1v-1h4v-1h2v-1h1v1h2v-1h3v1h1v-1h3v-1h1v2h3v4h1v-6h2v1h2v-1h2v1h1v-1h1v6h1v-6h1v2h2v1h2v-1h1v1h1v-1h1v1h2v2h1v-2h1v2h1v-3h1v-1h1v1h1v-1h1v2h1v2h2v-3h1v-1h1v4h1v-5h1v2h1v-1h1v-1h1v2h3v1h3v-5h1v3h2v1h1v1h1v-2h1v1h1v-1h1v-1h1v2h1v-1h2v-1h1v1h3v1h2v-1h2v2h1v-2h2v-1h1v2h1v4h1v-1h1v-3h1v-2h1v1h2v1h2v1h1v-2h1v1h1v-1h1v1h3v-1h2v1h3v1h1v-1h1v-1h1v-1h1v1h1v1h1v-1h1v1h1v-2h3v1h1v-1h5v1h1v1h1v1h3v-1h1v1h1v-1h1v-4h1v4h1v1h2v-1h4v1h2v-3h1v4h1v-1h2v-1h1v-1h2v2h1v-2h1v1h1v1h1v-1h2v1h1v-2h1v1h4v-1h2v1h1v-1h1v1h1v-4h1v3h1v-1h2v2h1v-1h3v1h1v1h1v-1h1v2h1v-1h3v-1h1v1h2v1h1v-1h3v-2h1v-1h1v1h1v-1h2v1h1v-1h1v1h1v-3h1v2h1v1h3v-1h2v1h1v4h1v-3h1v-1h5v-1h1v4h1v-2h1v-2h1v1h1v-1h1v5h1v-5h1v1h2v-1h2v7h1v-4h1v1h1v-1h3v-2h1v2h1v-3h1v2h2v-1h2v-1h1v1h1v-1h2v1h3v2h1v-2h1v-1h1v6h1v-6h1v1h1v-1h1v1h1v1h1v-1h1v-1h1v1h2v1h2v1h1v1h2v-2h1v-4h1v3h1v-1h1v2h2v1h1v-2h1v2h1v-1h2v1h2v-1h2v1h1v-1h1v1h1v-1h2v-1h2v1h1v3h1v-2h1v3h2v-3h1v-1h2v2h1v-2h4v1h1v1h2v-1h1v-4h1v4h3v1h1v-1h1v-1h1v-1h1v2h6v-1h3v1h1v-1h3v1h1v-3h1v3h1v-4h1v4h2v-1h1v-1h1v1h1v1h1v-1h3v-2h1v1h3v1h1v-4h1v4h2v1h1v-1h2v1h1v-1h3v4h1v-5h1v1h2v5h1v-4h1v-1h2v-1h1v3h1v-3h1v-2h1v2h4v-1h1v1h3v-1h1v1h2v-1h2v4h1v-1h2v-1h2v-2h2v4h2v-3h1v-1h4v2h1v-1h2v-1h1v1h1v2h4v1h1v-1h4v1h1v-2h1v-1h1v1h1v1h3v-2h1v1h1v1h2v1h1v-1h1v1h1v-1h2v1h1v-1h1v1h1v-1h1v-3h1v2h1v1h1v1h2v-1h1v1h1v-1h1v-1h1v2h1v-1h1v-1h2v1h1v-1h2v1h1v-2h1v1h1v-1h1v4h1v-3h1v1h4v4h1v-4h2v-2h1v-4h1v5h3v-1h3v-1h1v1h2v-1h1v2h1v-1h3v-1h1v1h1v-1h3v-1h1v3h1v-1h1v-2h1v2h3v-1h1v1h2v-1h5v1h1v1h1v2h1v-2h2v-2h2v1h2v2h1v-3h1v1h6v5h1v-6h1v1h1v-1h3v3h1v-3h1v1h3v-1h1v1h1v1h1v-1h1v2h1v-3h1v1h1v-1h3v1h1v1h3v-2h1v6h1v-6h1v1h2v-1h1v2h1v1h1v-1h2v-4h1v3h1v1h2v1h2v2h1v-2h3v-1h2v4h1v-6h1v1h1v-1h1v1h1v-1h1v2h1v-1h1v-1h3v1h3v-4h1v3h1v1h2v4h1v-5h1v2h5v-1h1v-1h2v1h2v-1h1v1h1v-1h1v1h1v1h2v1h1v-1h2v-1h1v-1h1v2h1v-1h2v-1h3v1h3v-1h1v1h2v1h1v1h1v-5h1v-1h1v4h1v1h2v-1h1v1h2v-1h1v1h1v-1h2v-1h1v-1h1v2h1v-1h1v1h1v1h5v3h1v1h1v-3h1v-1h1v-2h2v1h1v1h2v-3h1v4h3v2h1v-2h1v-1h1v1h1v-1h1v1h1v-1h2v1h2v1h1v-1h1v1h1v-3h1v-1h1v2h1v-2h1v3h1v4h1v-3h2v-1h1v1h1v1h2v-2h1v1h1v2h2v-6h2v5h1v-5h1v2h1v-1h1v2h1v-2h1v1h1v-1h1v1h1v2h1v-4h1v1h1v2h1v-1h1v3h1v-1h1v-3h1v3h1v-2h2v-1h2v3h1v-3h1v-1h1v-1h1v3h1v3h1v-3h2V669z"/><rect x="18" y="668" width="1333" height="1.6"/></g></svg>
<div style="left:443px;top:546px;width:246px;height:83px;background:#18202b;"></div>
<div style="left:443px;top:566px;width:246px;height:2px;background:#121820;"></div>
<div style="left:443px;top:586px;width:246px;height:2px;background:#121820;"></div>
<div style="left:443px;top:607px;width:246px;height:2px;background:#121820;"></div>
<div style="left:16px;top:463px;width:2px;height:21px;background:#24282e;"></div>
<div style="left:18px;top:463px;width:1px;height:21px;background:#8a8d92;"></div>
<div style="left:34px;top:463px;width:2px;height:21px;background:#24282e;"></div>
<div style="left:36px;top:463px;width:1px;height:21px;background:#8a8d92;"></div>
<div style="left:52px;top:463px;width:2px;height:21px;background:#24282e;"></div>
<div style="left:54px;top:463px;width:1px;height:21px;background:#8a8d92;"></div>
<div style="left:111px;top:463px;width:2px;height:21px;background:#24282e;"></div>
<div style="left:113px;top:463px;width:1px;height:21px;background:#8a8d92;"></div>
<div style="left:118px;top:463px;width:2px;height:21px;background:#24282e;"></div>
<div style="left:120px;top:463px;width:1px;height:21px;background:#8a8d92;"></div>
<div style="left:129px;top:463px;width:2px;height:21px;background:#24282e;"></div>
<div style="left:131px;top:463px;width:1px;height:21px;background:#8a8d92;"></div>
<div style="left:146px;top:463px;width:2px;height:21px;background:#24282e;"></div>
<div style="left:148px;top:463px;width:1px;height:21px;background:#8a8d92;"></div>
<div style="left:175px;top:463px;width:2px;height:21px;background:#24282e;"></div>
<div style="left:177px;top:463px;width:1px;height:21px;background:#8a8d92;"></div>
<div style="left:182px;top:463px;width:2px;height:21px;background:#24282e;"></div>
<div style="left:184px;top:463px;width:1px;height:21px;background:#8a8d92;"></div>
<div style="left:208px;top:463px;width:2px;height:21px;background:#24282e;"></div>
<div style="left:210px;top:463px;width:1px;height:21px;background:#8a8d92;"></div>
<div style="left:213px;top:463px;width:2px;height:21px;background:#24282e;"></div>
<div style="left:215px;top:463px;width:1px;height:21px;background:#8a8d92;"></div>
<div style="left:236px;top:463px;width:2px;height:21px;background:#24282e;"></div>
<div style="left:238px;top:463px;width:1px;height:21px;background:#8a8d92;"></div>
<div style="left:247px;top:463px;width:2px;height:21px;background:#24282e;"></div>
<div style="left:249px;top:463px;width:1px;height:21px;background:#8a8d92;"></div>
<div style="left:320px;top:463px;width:2px;height:21px;background:#24282e;"></div>
<div style="left:322px;top:463px;width:1px;height:21px;background:#8a8d92;"></div>
<div style="left:328px;top:463px;width:2px;height:21px;background:#24282e;"></div>
<div style="left:330px;top:463px;width:1px;height:21px;background:#8a8d92;"></div>
<div style="left:361px;top:463px;width:2px;height:21px;background:#24282e;"></div>
<div style="left:363px;top:463px;width:1px;height:21px;background:#8a8d92;"></div>
<div style="left:441px;top:463px;width:2px;height:21px;background:#24282e;"></div>
<div style="left:443px;top:463px;width:1px;height:21px;background:#8a8d92;"></div>
<div style="left:465px;top:463px;width:2px;height:21px;background:#24282e;"></div>
<div style="left:467px;top:463px;width:1px;height:21px;background:#8a8d92;"></div>
<div style="left:551px;top:463px;width:2px;height:21px;background:#24282e;"></div>
<div style="left:553px;top:463px;width:1px;height:21px;background:#8a8d92;"></div>
<div style="left:579px;top:463px;width:2px;height:21px;background:#24282e;"></div>
<div style="left:581px;top:463px;width:1px;height:21px;background:#8a8d92;"></div>
<div style="left:589px;top:463px;width:2px;height:21px;background:#24282e;"></div>
<div style="left:591px;top:463px;width:1px;height:21px;background:#8a8d92;"></div>
<div style="left:601px;top:463px;width:2px;height:21px;background:#24282e;"></div>
<div style="left:603px;top:463px;width:1px;height:21px;background:#8a8d92;"></div>
<div style="left:645px;top:463px;width:2px;height:21px;background:#24282e;"></div>
<div style="left:647px;top:463px;width:1px;height:21px;background:#8a8d92;"></div>
<div style="left:652px;top:463px;width:2px;height:21px;background:#24282e;"></div>
<div style="left:654px;top:463px;width:1px;height:21px;background:#8a8d92;"></div>
<div style="left:671px;top:463px;width:2px;height:21px;background:#24282e;"></div>
<div style="left:673px;top:463px;width:1px;height:21px;background:#8a8d92;"></div>
<div style="left:688px;top:463px;width:2px;height:21px;background:#24282e;"></div>
<div style="left:690px;top:463px;width:1px;height:21px;background:#8a8d92;"></div>
<div style="left:758px;top:463px;width:2px;height:21px;background:#24282e;"></div>
<div style="left:760px;top:463px;width:1px;height:21px;background:#8a8d92;"></div>
<div style="left:761px;top:463px;width:2px;height:21px;background:#24282e;"></div>
<div style="left:763px;top:463px;width:1px;height:21px;background:#8a8d92;"></div>
<div style="left:765px;top:463px;width:2px;height:21px;background:#24282e;"></div>
<div style="left:767px;top:463px;width:1px;height:21px;background:#8a8d92;"></div>
<div style="left:802px;top:463px;width:2px;height:21px;background:#24282e;"></div>
<div style="left:804px;top:463px;width:1px;height:21px;background:#8a8d92;"></div>
<div style="left:887px;top:463px;width:2px;height:21px;background:#24282e;"></div>
<div style="left:889px;top:463px;width:1px;height:21px;background:#8a8d92;"></div>
<div style="left:947px;top:463px;width:2px;height:21px;background:#24282e;"></div>
<div style="left:949px;top:463px;width:1px;height:21px;background:#8a8d92;"></div>
<div style="left:952px;top:463px;width:2px;height:21px;background:#24282e;"></div>
<div style="left:954px;top:463px;width:1px;height:21px;background:#8a8d92;"></div>
<div style="left:970px;top:463px;width:2px;height:21px;background:#24282e;"></div>
<div style="left:972px;top:463px;width:1px;height:21px;background:#8a8d92;"></div>
<div style="left:986px;top:463px;width:2px;height:21px;background:#24282e;"></div>
<div style="left:988px;top:463px;width:1px;height:21px;background:#8a8d92;"></div>
<div style="left:1070px;top:463px;width:2px;height:21px;background:#24282e;"></div>
<div style="left:1072px;top:463px;width:1px;height:21px;background:#8a8d92;"></div>
<div style="left:1079px;top:463px;width:2px;height:21px;background:#24282e;"></div>
<div style="left:1081px;top:463px;width:1px;height:21px;background:#8a8d92;"></div>
<div style="left:1095px;top:463px;width:2px;height:21px;background:#24282e;"></div>
<div style="left:1097px;top:463px;width:1px;height:21px;background:#8a8d92;"></div>
<div style="left:1125px;top:463px;width:2px;height:21px;background:#24282e;"></div>
<div style="left:1127px;top:463px;width:1px;height:21px;background:#8a8d92;"></div>
<div style="left:1141px;top:463px;width:2px;height:21px;background:#24282e;"></div>
<div style="left:1143px;top:463px;width:1px;height:21px;background:#8a8d92;"></div>
<div style="left:1154px;top:463px;width:2px;height:21px;background:#24282e;"></div>
<div style="left:1156px;top:463px;width:1px;height:21px;background:#8a8d92;"></div>
<div style="left:1224px;top:463px;width:2px;height:21px;background:#24282e;"></div>
<div style="left:1226px;top:463px;width:1px;height:21px;background:#8a8d92;"></div>
<div style="left:1273px;top:463px;width:2px;height:21px;background:#24282e;"></div>
<div style="left:1275px;top:463px;width:1px;height:21px;background:#8a8d92;"></div>
<div class="fx fa" style="left:68px;top:467px"><svg width="16" height="15" style="left:-1.5px;top:-1.5px"><path d="M3.3 12.8L6.6 4.2Q7.1 2.9 9 2.9M4.8 6H8.3M8 5.9L11.8 12.4M12.6 5.7L7.5 12.7" stroke="#111" stroke-width="1.1" fill="none"/></svg></div>
<div class="fx fa" style="left:263px;top:467px"><svg width="16" height="15" style="left:-1.5px;top:-1.5px"><path d="M3.3 12.8L6.6 4.2Q7.1 2.9 9 2.9M4.8 6H8.3M8 5.9L11.8 12.4M12.6 5.7L7.5 12.7" stroke="#111" stroke-width="1.1" fill="none"/></svg></div>
<div class="fx fa" style="left:377px;top:467px"><svg width="16" height="15" style="left:-1.5px;top:-1.5px"><path d="M3.3 12.8L6.6 4.2Q7.1 2.9 9 2.9M4.8 6H8.3M8 5.9L11.8 12.4M12.6 5.7L7.5 12.7" stroke="#111" stroke-width="1.1" fill="none"/></svg></div>
<div class="fx fa" style="left:481px;top:467px"><svg width="16" height="15" style="left:-1.5px;top:-1.5px"><path d="M3.3 12.8L6.6 4.2Q7.1 2.9 9 2.9M4.8 6H8.3M8 5.9L11.8 12.4M12.6 5.7L7.5 12.7" stroke="#111" stroke-width="1.1" fill="none"/></svg></div>
<div class="fx fa" style="left:617px;top:467px"><svg width="16" height="15" style="left:-1.5px;top:-1.5px"><path d="M3.3 12.8L6.6 4.2Q7.1 2.9 9 2.9M4.8 6H8.3M8 5.9L11.8 12.4M12.6 5.7L7.5 12.7" stroke="#111" stroke-width="1.1" fill="none"/></svg></div>
<div class="fx fa" style="left:704px;top:467px"><svg width="16" height="15" style="left:-1.5px;top:-1.5px"><path d="M3.3 12.8L6.6 4.2Q7.1 2.9 9 2.9M4.8 6H8.3M8 5.9L11.8 12.4M12.6 5.7L7.5 12.7" stroke="#111" stroke-width="1.1" fill="none"/></svg></div>
<div class="fx fa" style="left:818px;top:467px"><svg width="16" height="15" style="left:-1.5px;top:-1.5px"><path d="M3.3 12.8L6.6 4.2Q7.1 2.9 9 2.9M4.8 6H8.3M8 5.9L11.8 12.4M12.6 5.7L7.5 12.7" stroke="#111" stroke-width="1.1" fill="none"/></svg></div>
<div class="fx fa" style="left:903px;top:467px"><svg width="16" height="15" style="left:-1.5px;top:-1.5px"><path d="M3.3 12.8L6.6 4.2Q7.1 2.9 9 2.9M4.8 6H8.3M8 5.9L11.8 12.4M12.6 5.7L7.5 12.7" stroke="#111" stroke-width="1.1" fill="none"/></svg></div>
<div class="fx fa" style="left:1002px;top:467px"><svg width="16" height="15" style="left:-1.5px;top:-1.5px"><path d="M3.3 12.8L6.6 4.2Q7.1 2.9 9 2.9M4.8 6H8.3M8 5.9L11.8 12.4M12.6 5.7L7.5 12.7" stroke="#111" stroke-width="1.1" fill="none"/></svg></div>
<div class="fx fa" style="left:1170px;top:467px"><svg width="16" height="15" style="left:-1.5px;top:-1.5px"><path d="M3.3 12.8L6.6 4.2Q7.1 2.9 9 2.9M4.8 6H8.3M8 5.9L11.8 12.4M12.6 5.7L7.5 12.7" stroke="#111" stroke-width="1.1" fill="none"/></svg></div>
<div class="fx fa" style="left:1240px;top:467px"><svg width="16" height="15" style="left:-1.5px;top:-1.5px"><path d="M3.3 12.8L6.6 4.2Q7.1 2.9 9 2.9M4.8 6H8.3M8 5.9L11.8 12.4M12.6 5.7L7.5 12.7" stroke="#111" stroke-width="1.1" fill="none"/></svg></div>
<div class="fx fa" style="left:1289px;top:467px"><svg width="16" height="15" style="left:-1.5px;top:-1.5px"><path d="M3.3 12.8L6.6 4.2Q7.1 2.9 9 2.9M4.8 6H8.3M8 5.9L11.8 12.4M12.6 5.7L7.5 12.7" stroke="#111" stroke-width="1.1" fill="none"/></svg></div>
<div style="left:16px;top:484px;width:2px;height:21px;background:#24282e;"></div>
<div style="left:18px;top:484px;width:1px;height:21px;background:#8a8d92;"></div>
<div style="left:34px;top:484px;width:2px;height:21px;background:#24282e;"></div>
<div style="left:36px;top:484px;width:1px;height:21px;background:#8a8d92;"></div>
<div style="left:52px;top:484px;width:2px;height:21px;background:#24282e;"></div>
<div style="left:54px;top:484px;width:1px;height:21px;background:#8a8d92;"></div>
<div style="left:111px;top:484px;width:2px;height:21px;background:#24282e;"></div>
<div style="left:113px;top:484px;width:1px;height:21px;background:#8a8d92;"></div>
<div style="left:118px;top:484px;width:2px;height:21px;background:#24282e;"></div>
<div style="left:120px;top:484px;width:1px;height:21px;background:#8a8d92;"></div>
<div style="left:129px;top:484px;width:2px;height:21px;background:#24282e;"></div>
<div style="left:131px;top:484px;width:1px;height:21px;background:#8a8d92;"></div>
<div style="left:146px;top:484px;width:2px;height:21px;background:#24282e;"></div>
<div style="left:148px;top:484px;width:1px;height:21px;background:#8a8d92;"></div>
<div style="left:175px;top:484px;width:2px;height:21px;background:#24282e;"></div>
<div style="left:177px;top:484px;width:1px;height:21px;background:#8a8d92;"></div>
<div style="left:182px;top:484px;width:2px;height:21px;background:#24282e;"></div>
<div style="left:184px;top:484px;width:1px;height:21px;background:#8a8d92;"></div>
<div style="left:208px;top:484px;width:2px;height:21px;background:#24282e;"></div>
<div style="left:210px;top:484px;width:1px;height:21px;background:#8a8d92;"></div>
<div style="left:213px;top:484px;width:2px;height:21px;background:#24282e;"></div>
<div style="left:215px;top:484px;width:1px;height:21px;background:#8a8d92;"></div>
<div style="left:236px;top:484px;width:2px;height:21px;background:#24282e;"></div>
<div style="left:238px;top:484px;width:1px;height:21px;background:#8a8d92;"></div>
<div style="left:247px;top:484px;width:2px;height:21px;background:#24282e;"></div>
<div style="left:249px;top:484px;width:1px;height:21px;background:#8a8d92;"></div>
<div style="left:320px;top:484px;width:2px;height:21px;background:#24282e;"></div>
<div style="left:322px;top:484px;width:1px;height:21px;background:#8a8d92;"></div>
<div style="left:328px;top:484px;width:2px;height:21px;background:#24282e;"></div>
<div style="left:330px;top:484px;width:1px;height:21px;background:#8a8d92;"></div>
<div style="left:361px;top:484px;width:2px;height:21px;background:#24282e;"></div>
<div style="left:363px;top:484px;width:1px;height:21px;background:#8a8d92;"></div>
<div style="left:441px;top:484px;width:2px;height:21px;background:#24282e;"></div>
<div style="left:443px;top:484px;width:1px;height:21px;background:#8a8d92;"></div>
<div style="left:465px;top:484px;width:2px;height:21px;background:#24282e;"></div>
<div style="left:467px;top:484px;width:1px;height:21px;background:#8a8d92;"></div>
<div style="left:551px;top:484px;width:2px;height:21px;background:#24282e;"></div>
<div style="left:553px;top:484px;width:1px;height:21px;background:#8a8d92;"></div>
<div style="left:579px;top:484px;width:2px;height:21px;background:#24282e;"></div>
<div style="left:581px;top:484px;width:1px;height:21px;background:#8a8d92;"></div>
<div style="left:589px;top:484px;width:2px;height:21px;background:#24282e;"></div>
<div style="left:591px;top:484px;width:1px;height:21px;background:#8a8d92;"></div>
<div style="left:601px;top:484px;width:2px;height:21px;background:#24282e;"></div>
<div style="left:603px;top:484px;width:1px;height:21px;background:#8a8d92;"></div>
<div style="left:645px;top:484px;width:2px;height:21px;background:#24282e;"></div>
<div style="left:647px;top:484px;width:1px;height:21px;background:#8a8d92;"></div>
<div style="left:652px;top:484px;width:2px;height:21px;background:#24282e;"></div>
<div style="left:654px;top:484px;width:1px;height:21px;background:#8a8d92;"></div>
<div style="left:671px;top:484px;width:2px;height:21px;background:#24282e;"></div>
<div style="left:673px;top:484px;width:1px;height:21px;background:#8a8d92;"></div>
<div style="left:688px;top:484px;width:2px;height:21px;background:#24282e;"></div>
<div style="left:690px;top:484px;width:1px;height:21px;background:#8a8d92;"></div>
<div style="left:758px;top:484px;width:2px;height:21px;background:#24282e;"></div>
<div style="left:760px;top:484px;width:1px;height:21px;background:#8a8d92;"></div>
<div style="left:761px;top:484px;width:2px;height:21px;background:#24282e;"></div>
<div style="left:763px;top:484px;width:1px;height:21px;background:#8a8d92;"></div>
<div style="left:765px;top:484px;width:2px;height:21px;background:#24282e;"></div>
<div style="left:767px;top:484px;width:1px;height:21px;background:#8a8d92;"></div>
<div style="left:802px;top:484px;width:2px;height:21px;background:#24282e;"></div>
<div style="left:804px;top:484px;width:1px;height:21px;background:#8a8d92;"></div>
<div style="left:887px;top:484px;width:2px;height:21px;background:#24282e;"></div>
<div style="left:889px;top:484px;width:1px;height:21px;background:#8a8d92;"></div>
<div style="left:947px;top:484px;width:2px;height:21px;background:#24282e;"></div>
<div style="left:949px;top:484px;width:1px;height:21px;background:#8a8d92;"></div>
<div style="left:952px;top:484px;width:2px;height:21px;background:#24282e;"></div>
<div style="left:954px;top:484px;width:1px;height:21px;background:#8a8d92;"></div>
<div style="left:970px;top:484px;width:2px;height:21px;background:#24282e;"></div>
<div style="left:972px;top:484px;width:1px;height:21px;background:#8a8d92;"></div>
<div style="left:986px;top:484px;width:2px;height:21px;background:#24282e;"></div>
<div style="left:988px;top:484px;width:1px;height:21px;background:#8a8d92;"></div>
<div style="left:1070px;top:484px;width:2px;height:21px;background:#24282e;"></div>
<div style="left:1072px;top:484px;width:1px;height:21px;background:#8a8d92;"></div>
<div style="left:1079px;top:484px;width:2px;height:21px;background:#24282e;"></div>
<div style="left:1081px;top:484px;width:1px;height:21px;background:#8a8d92;"></div>
<div style="left:1095px;top:484px;width:2px;height:21px;background:#24282e;"></div>
<div style="left:1097px;top:484px;width:1px;height:21px;background:#8a8d92;"></div>
<div style="left:1125px;top:484px;width:2px;height:21px;background:#24282e;"></div>
<div style="left:1127px;top:484px;width:1px;height:21px;background:#8a8d92;"></div>
<div style="left:1141px;top:484px;width:2px;height:21px;background:#24282e;"></div>
<div style="left:1143px;top:484px;width:1px;height:21px;background:#8a8d92;"></div>
<div style="left:1154px;top:484px;width:2px;height:21px;background:#24282e;"></div>
<div style="left:1156px;top:484px;width:1px;height:21px;background:#8a8d92;"></div>
<div style="left:1224px;top:484px;width:2px;height:21px;background:#24282e;"></div>
<div style="left:1226px;top:484px;width:1px;height:21px;background:#8a8d92;"></div>
<div style="left:1273px;top:484px;width:2px;height:21px;background:#24282e;"></div>
<div style="left:1275px;top:484px;width:1px;height:21px;background:#8a8d92;"></div>
<div class="fx fa" style="left:68px;top:488px"><svg width="16" height="15" style="left:-1.5px;top:-1.5px"><path d="M3.3 12.8L6.6 4.2Q7.1 2.9 9 2.9M4.8 6H8.3M8 5.9L11.8 12.4M12.6 5.7L7.5 12.7" stroke="#111" stroke-width="1.1" fill="none"/></svg></div>
<div class="fx fa" style="left:263px;top:488px"><svg width="16" height="15" style="left:-1.5px;top:-1.5px"><path d="M3.3 12.8L6.6 4.2Q7.1 2.9 9 2.9M4.8 6H8.3M8 5.9L11.8 12.4M12.6 5.7L7.5 12.7" stroke="#111" stroke-width="1.1" fill="none"/></svg></div>
<div class="fx fa" style="left:377px;top:488px"><svg width="16" height="15" style="left:-1.5px;top:-1.5px"><path d="M3.3 12.8L6.6 4.2Q7.1 2.9 9 2.9M4.8 6H8.3M8 5.9L11.8 12.4M12.6 5.7L7.5 12.7" stroke="#111" stroke-width="1.1" fill="none"/></svg></div>
<div class="fx fa" style="left:481px;top:488px"><svg width="16" height="15" style="left:-1.5px;top:-1.5px"><path d="M3.3 12.8L6.6 4.2Q7.1 2.9 9 2.9M4.8 6H8.3M8 5.9L11.8 12.4M12.6 5.7L7.5 12.7" stroke="#111" stroke-width="1.1" fill="none"/></svg></div>
<div class="fx fa" style="left:617px;top:488px"><svg width="16" height="15" style="left:-1.5px;top:-1.5px"><path d="M3.3 12.8L6.6 4.2Q7.1 2.9 9 2.9M4.8 6H8.3M8 5.9L11.8 12.4M12.6 5.7L7.5 12.7" stroke="#111" stroke-width="1.1" fill="none"/></svg></div>
<div class="fx fa" style="left:704px;top:488px"><svg width="16" height="15" style="left:-1.5px;top:-1.5px"><path d="M3.3 12.8L6.6 4.2Q7.1 2.9 9 2.9M4.8 6H8.3M8 5.9L11.8 12.4M12.6 5.7L7.5 12.7" stroke="#111" stroke-width="1.1" fill="none"/></svg></div>
<div class="fx fa" style="left:818px;top:488px"><svg width="16" height="15" style="left:-1.5px;top:-1.5px"><path d="M3.3 12.8L6.6 4.2Q7.1 2.9 9 2.9M4.8 6H8.3M8 5.9L11.8 12.4M12.6 5.7L7.5 12.7" stroke="#111" stroke-width="1.1" fill="none"/></svg></div>
<div class="fx fa" style="left:903px;top:488px"><svg width="16" height="15" style="left:-1.5px;top:-1.5px"><path d="M3.3 12.8L6.6 4.2Q7.1 2.9 9 2.9M4.8 6H8.3M8 5.9L11.8 12.4M12.6 5.7L7.5 12.7" stroke="#111" stroke-width="1.1" fill="none"/></svg></div>
<div class="fx fa" style="left:1002px;top:488px"><svg width="16" height="15" style="left:-1.5px;top:-1.5px"><path d="M3.3 12.8L6.6 4.2Q7.1 2.9 9 2.9M4.8 6H8.3M8 5.9L11.8 12.4M12.6 5.7L7.5 12.7" stroke="#111" stroke-width="1.1" fill="none"/></svg></div>
<div class="fx fa" style="left:1170px;top:488px"><svg width="16" height="15" style="left:-1.5px;top:-1.5px"><path d="M3.3 12.8L6.6 4.2Q7.1 2.9 9 2.9M4.8 6H8.3M8 5.9L11.8 12.4M12.6 5.7L7.5 12.7" stroke="#111" stroke-width="1.1" fill="none"/></svg></div>
<div class="fx fa" style="left:1240px;top:488px"><svg width="16" height="15" style="left:-1.5px;top:-1.5px"><path d="M3.3 12.8L6.6 4.2Q7.1 2.9 9 2.9M4.8 6H8.3M8 5.9L11.8 12.4M12.6 5.7L7.5 12.7" stroke="#111" stroke-width="1.1" fill="none"/></svg></div>
<div class="fx fa" style="left:1289px;top:488px"><svg width="16" height="15" style="left:-1.5px;top:-1.5px"><path d="M3.3 12.8L6.6 4.2Q7.1 2.9 9 2.9M4.8 6H8.3M8 5.9L11.8 12.4M12.6 5.7L7.5 12.7" stroke="#111" stroke-width="1.1" fill="none"/></svg></div>
<div style="left:16px;top:505px;width:2px;height:20px;background:#24282e;"></div>
<div style="left:18px;top:505px;width:1px;height:20px;background:#8a8d92;"></div>
<div style="left:34px;top:505px;width:2px;height:20px;background:#24282e;"></div>
<div style="left:36px;top:505px;width:1px;height:20px;background:#8a8d92;"></div>
<div style="left:52px;top:505px;width:2px;height:20px;background:#24282e;"></div>
<div style="left:54px;top:505px;width:1px;height:20px;background:#8a8d92;"></div>
<div style="left:111px;top:505px;width:2px;height:20px;background:#24282e;"></div>
<div style="left:113px;top:505px;width:1px;height:20px;background:#8a8d92;"></div>
<div style="left:118px;top:505px;width:2px;height:20px;background:#24282e;"></div>
<div style="left:120px;top:505px;width:1px;height:20px;background:#8a8d92;"></div>
<div style="left:129px;top:505px;width:2px;height:20px;background:#24282e;"></div>
<div style="left:131px;top:505px;width:1px;height:20px;background:#8a8d92;"></div>
<div style="left:146px;top:505px;width:2px;height:20px;background:#24282e;"></div>
<div style="left:148px;top:505px;width:1px;height:20px;background:#8a8d92;"></div>
<div style="left:175px;top:505px;width:2px;height:20px;background:#24282e;"></div>
<div style="left:177px;top:505px;width:1px;height:20px;background:#8a8d92;"></div>
<div style="left:182px;top:505px;width:2px;height:20px;background:#24282e;"></div>
<div style="left:184px;top:505px;width:1px;height:20px;background:#8a8d92;"></div>
<div style="left:208px;top:505px;width:2px;height:20px;background:#24282e;"></div>
<div style="left:210px;top:505px;width:1px;height:20px;background:#8a8d92;"></div>
<div style="left:213px;top:505px;width:2px;height:20px;background:#24282e;"></div>
<div style="left:215px;top:505px;width:1px;height:20px;background:#8a8d92;"></div>
<div style="left:236px;top:505px;width:2px;height:20px;background:#24282e;"></div>
<div style="left:238px;top:505px;width:1px;height:20px;background:#8a8d92;"></div>
<div style="left:247px;top:505px;width:2px;height:20px;background:#24282e;"></div>
<div style="left:249px;top:505px;width:1px;height:20px;background:#8a8d92;"></div>
<div style="left:320px;top:505px;width:2px;height:20px;background:#24282e;"></div>
<div style="left:322px;top:505px;width:1px;height:20px;background:#8a8d92;"></div>
<div style="left:328px;top:505px;width:2px;height:20px;background:#24282e;"></div>
<div style="left:330px;top:505px;width:1px;height:20px;background:#8a8d92;"></div>
<div style="left:361px;top:505px;width:2px;height:20px;background:#24282e;"></div>
<div style="left:363px;top:505px;width:1px;height:20px;background:#8a8d92;"></div>
<div style="left:441px;top:505px;width:2px;height:20px;background:#24282e;"></div>
<div style="left:443px;top:505px;width:1px;height:20px;background:#8a8d92;"></div>
<div style="left:465px;top:505px;width:2px;height:20px;background:#24282e;"></div>
<div style="left:467px;top:505px;width:1px;height:20px;background:#8a8d92;"></div>
<div style="left:551px;top:505px;width:2px;height:20px;background:#24282e;"></div>
<div style="left:553px;top:505px;width:1px;height:20px;background:#8a8d92;"></div>
<div style="left:579px;top:505px;width:2px;height:20px;background:#24282e;"></div>
<div style="left:581px;top:505px;width:1px;height:20px;background:#8a8d92;"></div>
<div style="left:589px;top:505px;width:2px;height:20px;background:#24282e;"></div>
<div style="left:591px;top:505px;width:1px;height:20px;background:#8a8d92;"></div>
<div style="left:601px;top:505px;width:2px;height:20px;background:#24282e;"></div>
<div style="left:603px;top:505px;width:1px;height:20px;background:#8a8d92;"></div>
<div style="left:645px;top:505px;width:2px;height:20px;background:#24282e;"></div>
<div style="left:647px;top:505px;width:1px;height:20px;background:#8a8d92;"></div>
<div style="left:652px;top:505px;width:2px;height:20px;background:#24282e;"></div>
<div style="left:654px;top:505px;width:1px;height:20px;background:#8a8d92;"></div>
<div style="left:671px;top:505px;width:2px;height:20px;background:#24282e;"></div>
<div style="left:673px;top:505px;width:1px;height:20px;background:#8a8d92;"></div>
<div style="left:688px;top:505px;width:2px;height:20px;background:#24282e;"></div>
<div style="left:690px;top:505px;width:1px;height:20px;background:#8a8d92;"></div>
<div style="left:758px;top:505px;width:2px;height:20px;background:#24282e;"></div>
<div style="left:760px;top:505px;width:1px;height:20px;background:#8a8d92;"></div>
<div style="left:761px;top:505px;width:2px;height:20px;background:#24282e;"></div>
<div style="left:763px;top:505px;width:1px;height:20px;background:#8a8d92;"></div>
<div style="left:765px;top:505px;width:2px;height:20px;background:#24282e;"></div>
<div style="left:767px;top:505px;width:1px;height:20px;background:#8a8d92;"></div>
<div style="left:802px;top:505px;width:2px;height:20px;background:#24282e;"></div>
<div style="left:804px;top:505px;width:1px;height:20px;background:#8a8d92;"></div>
<div style="left:887px;top:505px;width:2px;height:20px;background:#24282e;"></div>
<div style="left:889px;top:505px;width:1px;height:20px;background:#8a8d92;"></div>
<div style="left:947px;top:505px;width:2px;height:20px;background:#24282e;"></div>
<div style="left:949px;top:505px;width:1px;height:20px;background:#8a8d92;"></div>
<div style="left:952px;top:505px;width:2px;height:20px;background:#24282e;"></div>
<div style="left:954px;top:505px;width:1px;height:20px;background:#8a8d92;"></div>
<div style="left:970px;top:505px;width:2px;height:20px;background:#24282e;"></div>
<div style="left:972px;top:505px;width:1px;height:20px;background:#8a8d92;"></div>
<div style="left:986px;top:505px;width:2px;height:20px;background:#24282e;"></div>
<div style="left:988px;top:505px;width:1px;height:20px;background:#8a8d92;"></div>
<div style="left:1070px;top:505px;width:2px;height:20px;background:#24282e;"></div>
<div style="left:1072px;top:505px;width:1px;height:20px;background:#8a8d92;"></div>
<div style="left:1079px;top:505px;width:2px;height:20px;background:#24282e;"></div>
<div style="left:1081px;top:505px;width:1px;height:20px;background:#8a8d92;"></div>
<div style="left:1095px;top:505px;width:2px;height:20px;background:#24282e;"></div>
<div style="left:1097px;top:505px;width:1px;height:20px;background:#8a8d92;"></div>
<div style="left:1125px;top:505px;width:2px;height:20px;background:#24282e;"></div>
<div style="left:1127px;top:505px;width:1px;height:20px;background:#8a8d92;"></div>
<div style="left:1141px;top:505px;width:2px;height:20px;background:#24282e;"></div>
<div style="left:1143px;top:505px;width:1px;height:20px;background:#8a8d92;"></div>
<div style="left:1154px;top:505px;width:2px;height:20px;background:#24282e;"></div>
<div style="left:1156px;top:505px;width:1px;height:20px;background:#8a8d92;"></div>
<div style="left:1224px;top:505px;width:2px;height:20px;background:#24282e;"></div>
<div style="left:1226px;top:505px;width:1px;height:20px;background:#8a8d92;"></div>
<div style="left:1273px;top:505px;width:2px;height:20px;background:#24282e;"></div>
<div style="left:1275px;top:505px;width:1px;height:20px;background:#8a8d92;"></div>
<div class="fx fa" style="left:68px;top:509px"><svg width="16" height="15" style="left:-1.5px;top:-1.5px"><path d="M3.3 12.8L6.6 4.2Q7.1 2.9 9 2.9M4.8 6H8.3M8 5.9L11.8 12.4M12.6 5.7L7.5 12.7" stroke="#111" stroke-width="1.1" fill="none"/></svg></div>
<div class="fx fa" style="left:263px;top:509px"><svg width="16" height="15" style="left:-1.5px;top:-1.5px"><path d="M3.3 12.8L6.6 4.2Q7.1 2.9 9 2.9M4.8 6H8.3M8 5.9L11.8 12.4M12.6 5.7L7.5 12.7" stroke="#111" stroke-width="1.1" fill="none"/></svg></div>
<div class="fx fa" style="left:377px;top:509px"><svg width="16" height="15" style="left:-1.5px;top:-1.5px"><path d="M3.3 12.8L6.6 4.2Q7.1 2.9 9 2.9M4.8 6H8.3M8 5.9L11.8 12.4M12.6 5.7L7.5 12.7" stroke="#111" stroke-width="1.1" fill="none"/></svg></div>
<div class="fx fa" style="left:481px;top:509px"><svg width="16" height="15" style="left:-1.5px;top:-1.5px"><path d="M3.3 12.8L6.6 4.2Q7.1 2.9 9 2.9M4.8 6H8.3M8 5.9L11.8 12.4M12.6 5.7L7.5 12.7" stroke="#111" stroke-width="1.1" fill="none"/></svg></div>
<div class="fx fa" style="left:617px;top:509px"><svg width="16" height="15" style="left:-1.5px;top:-1.5px"><path d="M3.3 12.8L6.6 4.2Q7.1 2.9 9 2.9M4.8 6H8.3M8 5.9L11.8 12.4M12.6 5.7L7.5 12.7" stroke="#111" stroke-width="1.1" fill="none"/></svg></div>
<div class="fx fa" style="left:704px;top:509px"><svg width="16" height="15" style="left:-1.5px;top:-1.5px"><path d="M3.3 12.8L6.6 4.2Q7.1 2.9 9 2.9M4.8 6H8.3M8 5.9L11.8 12.4M12.6 5.7L7.5 12.7" stroke="#111" stroke-width="1.1" fill="none"/></svg></div>
<div class="fx fa" style="left:818px;top:509px"><svg width="16" height="15" style="left:-1.5px;top:-1.5px"><path d="M3.3 12.8L6.6 4.2Q7.1 2.9 9 2.9M4.8 6H8.3M8 5.9L11.8 12.4M12.6 5.7L7.5 12.7" stroke="#111" stroke-width="1.1" fill="none"/></svg></div>
<div class="fx fa" style="left:903px;top:509px"><svg width="16" height="15" style="left:-1.5px;top:-1.5px"><path d="M3.3 12.8L6.6 4.2Q7.1 2.9 9 2.9M4.8 6H8.3M8 5.9L11.8 12.4M12.6 5.7L7.5 12.7" stroke="#111" stroke-width="1.1" fill="none"/></svg></div>
<div class="fx fa" style="left:1002px;top:509px"><svg width="16" height="15" style="left:-1.5px;top:-1.5px"><path d="M3.3 12.8L6.6 4.2Q7.1 2.9 9 2.9M4.8 6H8.3M8 5.9L11.8 12.4M12.6 5.7L7.5 12.7" stroke="#111" stroke-width="1.1" fill="none"/></svg></div>
<div class="fx fa" style="left:1170px;top:509px"><svg width="16" height="15" style="left:-1.5px;top:-1.5px"><path d="M3.3 12.8L6.6 4.2Q7.1 2.9 9 2.9M4.8 6H8.3M8 5.9L11.8 12.4M12.6 5.7L7.5 12.7" stroke="#111" stroke-width="1.1" fill="none"/></svg></div>
<div class="fx fa" style="left:1240px;top:509px"><svg width="16" height="15" style="left:-1.5px;top:-1.5px"><path d="M3.3 12.8L6.6 4.2Q7.1 2.9 9 2.9M4.8 6H8.3M8 5.9L11.8 12.4M12.6 5.7L7.5 12.7" stroke="#111" stroke-width="1.1" fill="none"/></svg></div>
<div class="fx fa" style="left:1289px;top:509px"><svg width="16" height="15" style="left:-1.5px;top:-1.5px"><path d="M3.3 12.8L6.6 4.2Q7.1 2.9 9 2.9M4.8 6H8.3M8 5.9L11.8 12.4M12.6 5.7L7.5 12.7" stroke="#111" stroke-width="1.1" fill="none"/></svg></div>
<div style="left:16px;top:525px;width:2px;height:21px;background:#24282e;"></div>
<div style="left:18px;top:525px;width:1px;height:21px;background:#8a8d92;"></div>
<div style="left:34px;top:525px;width:2px;height:21px;background:#24282e;"></div>
<div style="left:36px;top:525px;width:1px;height:21px;background:#8a8d92;"></div>
<div style="left:52px;top:525px;width:2px;height:21px;background:#24282e;"></div>
<div style="left:54px;top:525px;width:1px;height:21px;background:#8a8d92;"></div>
<div style="left:111px;top:525px;width:2px;height:21px;background:#24282e;"></div>
<div style="left:113px;top:525px;width:1px;height:21px;background:#8a8d92;"></div>
<div style="left:118px;top:525px;width:2px;height:21px;background:#24282e;"></div>
<div style="left:120px;top:525px;width:1px;height:21px;background:#8a8d92;"></div>
<div style="left:129px;top:525px;width:2px;height:21px;background:#24282e;"></div>
<div style="left:131px;top:525px;width:1px;height:21px;background:#8a8d92;"></div>
<div style="left:146px;top:525px;width:2px;height:21px;background:#24282e;"></div>
<div style="left:148px;top:525px;width:1px;height:21px;background:#8a8d92;"></div>
<div style="left:175px;top:525px;width:2px;height:21px;background:#24282e;"></div>
<div style="left:177px;top:525px;width:1px;height:21px;background:#8a8d92;"></div>
<div style="left:182px;top:525px;width:2px;height:21px;background:#24282e;"></div>
<div style="left:184px;top:525px;width:1px;height:21px;background:#8a8d92;"></div>
<div style="left:208px;top:525px;width:2px;height:21px;background:#24282e;"></div>
<div style="left:210px;top:525px;width:1px;height:21px;background:#8a8d92;"></div>
<div style="left:213px;top:525px;width:2px;height:21px;background:#24282e;"></div>
<div style="left:215px;top:525px;width:1px;height:21px;background:#8a8d92;"></div>
<div style="left:236px;top:525px;width:2px;height:21px;background:#24282e;"></div>
<div style="left:238px;top:525px;width:1px;height:21px;background:#8a8d92;"></div>
<div style="left:247px;top:525px;width:2px;height:21px;background:#24282e;"></div>
<div style="left:249px;top:525px;width:1px;height:21px;background:#8a8d92;"></div>
<div style="left:320px;top:525px;width:2px;height:21px;background:#24282e;"></div>
<div style="left:322px;top:525px;width:1px;height:21px;background:#8a8d92;"></div>
<div style="left:328px;top:525px;width:2px;height:21px;background:#24282e;"></div>
<div style="left:330px;top:525px;width:1px;height:21px;background:#8a8d92;"></div>
<div style="left:361px;top:525px;width:2px;height:21px;background:#24282e;"></div>
<div style="left:363px;top:525px;width:1px;height:21px;background:#8a8d92;"></div>
<div style="left:441px;top:525px;width:2px;height:21px;background:#24282e;"></div>
<div style="left:443px;top:525px;width:1px;height:21px;background:#8a8d92;"></div>
<div style="left:465px;top:525px;width:2px;height:21px;background:#24282e;"></div>
<div style="left:467px;top:525px;width:1px;height:21px;background:#8a8d92;"></div>
<div style="left:551px;top:525px;width:2px;height:21px;background:#24282e;"></div>
<div style="left:553px;top:525px;width:1px;height:21px;background:#8a8d92;"></div>
<div style="left:579px;top:525px;width:2px;height:21px;background:#24282e;"></div>
<div style="left:581px;top:525px;width:1px;height:21px;background:#8a8d92;"></div>
<div style="left:589px;top:525px;width:2px;height:21px;background:#24282e;"></div>
<div style="left:591px;top:525px;width:1px;height:21px;background:#8a8d92;"></div>
<div style="left:601px;top:525px;width:2px;height:21px;background:#24282e;"></div>
<div style="left:603px;top:525px;width:1px;height:21px;background:#8a8d92;"></div>
<div style="left:645px;top:525px;width:2px;height:21px;background:#24282e;"></div>
<div style="left:647px;top:525px;width:1px;height:21px;background:#8a8d92;"></div>
<div style="left:652px;top:525px;width:2px;height:21px;background:#24282e;"></div>
<div style="left:654px;top:525px;width:1px;height:21px;background:#8a8d92;"></div>
<div style="left:671px;top:525px;width:2px;height:21px;background:#24282e;"></div>
<div style="left:673px;top:525px;width:1px;height:21px;background:#8a8d92;"></div>
<div style="left:688px;top:525px;width:2px;height:21px;background:#24282e;"></div>
<div style="left:690px;top:525px;width:1px;height:21px;background:#8a8d92;"></div>
<div style="left:758px;top:525px;width:2px;height:21px;background:#24282e;"></div>
<div style="left:760px;top:525px;width:1px;height:21px;background:#8a8d92;"></div>
<div style="left:761px;top:525px;width:2px;height:21px;background:#24282e;"></div>
<div style="left:763px;top:525px;width:1px;height:21px;background:#8a8d92;"></div>
<div style="left:765px;top:525px;width:2px;height:21px;background:#24282e;"></div>
<div style="left:767px;top:525px;width:1px;height:21px;background:#8a8d92;"></div>
<div style="left:802px;top:525px;width:2px;height:21px;background:#24282e;"></div>
<div style="left:804px;top:525px;width:1px;height:21px;background:#8a8d92;"></div>
<div style="left:887px;top:525px;width:2px;height:21px;background:#24282e;"></div>
<div style="left:889px;top:525px;width:1px;height:21px;background:#8a8d92;"></div>
<div style="left:947px;top:525px;width:2px;height:21px;background:#24282e;"></div>
<div style="left:949px;top:525px;width:1px;height:21px;background:#8a8d92;"></div>
<div style="left:952px;top:525px;width:2px;height:21px;background:#24282e;"></div>
<div style="left:954px;top:525px;width:1px;height:21px;background:#8a8d92;"></div>
<div style="left:970px;top:525px;width:2px;height:21px;background:#24282e;"></div>
<div style="left:972px;top:525px;width:1px;height:21px;background:#8a8d92;"></div>
<div style="left:986px;top:525px;width:2px;height:21px;background:#24282e;"></div>
<div style="left:988px;top:525px;width:1px;height:21px;background:#8a8d92;"></div>
<div style="left:1070px;top:525px;width:2px;height:21px;background:#24282e;"></div>
<div style="left:1072px;top:525px;width:1px;height:21px;background:#8a8d92;"></div>
<div style="left:1079px;top:525px;width:2px;height:21px;background:#24282e;"></div>
<div style="left:1081px;top:525px;width:1px;height:21px;background:#8a8d92;"></div>
<div style="left:1095px;top:525px;width:2px;height:21px;background:#24282e;"></div>
<div style="left:1097px;top:525px;width:1px;height:21px;background:#8a8d92;"></div>
<div style="left:1125px;top:525px;width:2px;height:21px;background:#24282e;"></div>
<div style="left:1127px;top:525px;width:1px;height:21px;background:#8a8d92;"></div>
<div style="left:1141px;top:525px;width:2px;height:21px;background:#24282e;"></div>
<div style="left:1143px;top:525px;width:1px;height:21px;background:#8a8d92;"></div>
<div style="left:1154px;top:525px;width:2px;height:21px;background:#24282e;"></div>
<div style="left:1156px;top:525px;width:1px;height:21px;background:#8a8d92;"></div>
<div style="left:1224px;top:525px;width:2px;height:21px;background:#24282e;"></div>
<div style="left:1226px;top:525px;width:1px;height:21px;background:#8a8d92;"></div>
<div style="left:1273px;top:525px;width:2px;height:21px;background:#24282e;"></div>
<div style="left:1275px;top:525px;width:1px;height:21px;background:#8a8d92;"></div>
<div class="fx fa" style="left:68px;top:529px"><svg width="16" height="15" style="left:-1.5px;top:-1.5px"><path d="M3.3 12.8L6.6 4.2Q7.1 2.9 9 2.9M4.8 6H8.3M8 5.9L11.8 12.4M12.6 5.7L7.5 12.7" stroke="#111" stroke-width="1.1" fill="none"/></svg></div>
<div class="fx fa" style="left:263px;top:529px"><svg width="16" height="15" style="left:-1.5px;top:-1.5px"><path d="M3.3 12.8L6.6 4.2Q7.1 2.9 9 2.9M4.8 6H8.3M8 5.9L11.8 12.4M12.6 5.7L7.5 12.7" stroke="#111" stroke-width="1.1" fill="none"/></svg></div>
<div class="fx fa" style="left:377px;top:529px"><svg width="16" height="15" style="left:-1.5px;top:-1.5px"><path d="M3.3 12.8L6.6 4.2Q7.1 2.9 9 2.9M4.8 6H8.3M8 5.9L11.8 12.4M12.6 5.7L7.5 12.7" stroke="#111" stroke-width="1.1" fill="none"/></svg></div>
<div class="fx fa" style="left:481px;top:529px"><svg width="16" height="15" style="left:-1.5px;top:-1.5px"><path d="M3.3 12.8L6.6 4.2Q7.1 2.9 9 2.9M4.8 6H8.3M8 5.9L11.8 12.4M12.6 5.7L7.5 12.7" stroke="#111" stroke-width="1.1" fill="none"/></svg></div>
<div class="fx fa" style="left:617px;top:529px"><svg width="16" height="15" style="left:-1.5px;top:-1.5px"><path d="M3.3 12.8L6.6 4.2Q7.1 2.9 9 2.9M4.8 6H8.3M8 5.9L11.8 12.4M12.6 5.7L7.5 12.7" stroke="#111" stroke-width="1.1" fill="none"/></svg></div>
<div class="fx fa" style="left:704px;top:529px"><svg width="16" height="15" style="left:-1.5px;top:-1.5px"><path d="M3.3 12.8L6.6 4.2Q7.1 2.9 9 2.9M4.8 6H8.3M8 5.9L11.8 12.4M12.6 5.7L7.5 12.7" stroke="#111" stroke-width="1.1" fill="none"/></svg></div>
<div class="fx fa" style="left:818px;top:529px"><svg width="16" height="15" style="left:-1.5px;top:-1.5px"><path d="M3.3 12.8L6.6 4.2Q7.1 2.9 9 2.9M4.8 6H8.3M8 5.9L11.8 12.4M12.6 5.7L7.5 12.7" stroke="#111" stroke-width="1.1" fill="none"/></svg></div>
<div class="fx fa" style="left:903px;top:529px"><svg width="16" height="15" style="left:-1.5px;top:-1.5px"><path d="M3.3 12.8L6.6 4.2Q7.1 2.9 9 2.9M4.8 6H8.3M8 5.9L11.8 12.4M12.6 5.7L7.5 12.7" stroke="#111" stroke-width="1.1" fill="none"/></svg></div>
<div class="fx fa" style="left:1002px;top:529px"><svg width="16" height="15" style="left:-1.5px;top:-1.5px"><path d="M3.3 12.8L6.6 4.2Q7.1 2.9 9 2.9M4.8 6H8.3M8 5.9L11.8 12.4M12.6 5.7L7.5 12.7" stroke="#111" stroke-width="1.1" fill="none"/></svg></div>
<div class="fx fa" style="left:1170px;top:529px"><svg width="16" height="15" style="left:-1.5px;top:-1.5px"><path d="M3.3 12.8L6.6 4.2Q7.1 2.9 9 2.9M4.8 6H8.3M8 5.9L11.8 12.4M12.6 5.7L7.5 12.7" stroke="#111" stroke-width="1.1" fill="none"/></svg></div>
<div class="fx fa" style="left:1240px;top:529px"><svg width="16" height="15" style="left:-1.5px;top:-1.5px"><path d="M3.3 12.8L6.6 4.2Q7.1 2.9 9 2.9M4.8 6H8.3M8 5.9L11.8 12.4M12.6 5.7L7.5 12.7" stroke="#111" stroke-width="1.1" fill="none"/></svg></div>
<div class="fx fa" style="left:1289px;top:529px"><svg width="16" height="15" style="left:-1.5px;top:-1.5px"><path d="M3.3 12.8L6.6 4.2Q7.1 2.9 9 2.9M4.8 6H8.3M8 5.9L11.8 12.4M12.6 5.7L7.5 12.7" stroke="#111" stroke-width="1.1" fill="none"/></svg></div>
<div style="left:16px;top:546px;width:2px;height:21px;background:#24282e;"></div>
<div style="left:18px;top:546px;width:1px;height:21px;background:#8a8d92;"></div>
<div style="left:34px;top:546px;width:2px;height:21px;background:#24282e;"></div>
<div style="left:36px;top:546px;width:1px;height:21px;background:#8a8d92;"></div>
<div style="left:52px;top:546px;width:2px;height:21px;background:#24282e;"></div>
<div style="left:54px;top:546px;width:1px;height:21px;background:#8a8d92;"></div>
<div style="left:59px;top:546px;width:2px;height:21px;background:#24282e;"></div>
<div style="left:61px;top:546px;width:1px;height:21px;background:#8a8d92;"></div>
<div style="left:111px;top:546px;width:2px;height:21px;background:#24282e;"></div>
<div style="left:113px;top:546px;width:1px;height:21px;background:#8a8d92;"></div>
<div style="left:118px;top:546px;width:2px;height:21px;background:#24282e;"></div>
<div style="left:120px;top:546px;width:1px;height:21px;background:#8a8d92;"></div>
<div style="left:129px;top:546px;width:2px;height:21px;background:#24282e;"></div>
<div style="left:131px;top:546px;width:1px;height:21px;background:#8a8d92;"></div>
<div style="left:146px;top:546px;width:2px;height:21px;background:#24282e;"></div>
<div style="left:148px;top:546px;width:1px;height:21px;background:#8a8d92;"></div>
<div style="left:182px;top:546px;width:2px;height:21px;background:#24282e;"></div>
<div style="left:184px;top:546px;width:1px;height:21px;background:#8a8d92;"></div>
<div style="left:203px;top:546px;width:2px;height:21px;background:#24282e;"></div>
<div style="left:205px;top:546px;width:1px;height:21px;background:#8a8d92;"></div>
<div style="left:213px;top:546px;width:2px;height:21px;background:#24282e;"></div>
<div style="left:215px;top:546px;width:1px;height:21px;background:#8a8d92;"></div>
<div style="left:236px;top:546px;width:2px;height:21px;background:#24282e;"></div>
<div style="left:238px;top:546px;width:1px;height:21px;background:#8a8d92;"></div>
<div style="left:247px;top:546px;width:2px;height:21px;background:#24282e;"></div>
<div style="left:249px;top:546px;width:1px;height:21px;background:#8a8d92;"></div>
<div style="left:320px;top:546px;width:2px;height:21px;background:#24282e;"></div>
<div style="left:322px;top:546px;width:1px;height:21px;background:#8a8d92;"></div>
<div style="left:328px;top:546px;width:2px;height:21px;background:#24282e;"></div>
<div style="left:330px;top:546px;width:1px;height:21px;background:#8a8d92;"></div>
<div style="left:361px;top:546px;width:2px;height:21px;background:#24282e;"></div>
<div style="left:363px;top:546px;width:1px;height:21px;background:#8a8d92;"></div>
<div style="left:403px;top:546px;width:2px;height:21px;background:#24282e;"></div>
<div style="left:405px;top:546px;width:1px;height:21px;background:#8a8d92;"></div>
<div style="left:441px;top:546px;width:2px;height:21px;background:#24282e;"></div>
<div style="left:443px;top:546px;width:1px;height:21px;background:#8a8d92;"></div>
<div style="left:465px;top:546px;width:2px;height:21px;background:#24282e;"></div>
<div style="left:467px;top:546px;width:1px;height:21px;background:#8a8d92;"></div>
<div style="left:551px;top:546px;width:2px;height:21px;background:#24282e;"></div>
<div style="left:553px;top:546px;width:1px;height:21px;background:#8a8d92;"></div>
<div style="left:579px;top:546px;width:2px;height:21px;background:#24282e;"></div>
<div style="left:581px;top:546px;width:1px;height:21px;background:#8a8d92;"></div>
<div style="left:589px;top:546px;width:2px;height:21px;background:#24282e;"></div>
<div style="left:591px;top:546px;width:1px;height:21px;background:#8a8d92;"></div>
<div style="left:601px;top:546px;width:2px;height:21px;background:#24282e;"></div>
<div style="left:603px;top:546px;width:1px;height:21px;background:#8a8d92;"></div>
<div style="left:645px;top:546px;width:2px;height:21px;background:#24282e;"></div>
<div style="left:647px;top:546px;width:1px;height:21px;background:#8a8d92;"></div>
<div style="left:652px;top:546px;width:2px;height:21px;background:#24282e;"></div>
<div style="left:654px;top:546px;width:1px;height:21px;background:#8a8d92;"></div>
<div style="left:671px;top:546px;width:2px;height:21px;background:#24282e;"></div>
<div style="left:673px;top:546px;width:1px;height:21px;background:#8a8d92;"></div>
<div style="left:688px;top:546px;width:2px;height:21px;background:#24282e;"></div>
<div style="left:690px;top:546px;width:1px;height:21px;background:#8a8d92;"></div>
<div style="left:758px;top:546px;width:2px;height:21px;background:#24282e;"></div>
<div style="left:760px;top:546px;width:1px;height:21px;background:#8a8d92;"></div>
<div style="left:761px;top:546px;width:2px;height:21px;background:#24282e;"></div>
<div style="left:763px;top:546px;width:1px;height:21px;background:#8a8d92;"></div>
<div style="left:765px;top:546px;width:2px;height:21px;background:#24282e;"></div>
<div style="left:767px;top:546px;width:1px;height:21px;background:#8a8d92;"></div>
<div style="left:802px;top:546px;width:2px;height:21px;background:#24282e;"></div>
<div style="left:804px;top:546px;width:1px;height:21px;background:#8a8d92;"></div>
<div style="left:887px;top:546px;width:2px;height:21px;background:#24282e;"></div>
<div style="left:889px;top:546px;width:1px;height:21px;background:#8a8d92;"></div>
<div style="left:947px;top:546px;width:2px;height:21px;background:#24282e;"></div>
<div style="left:949px;top:546px;width:1px;height:21px;background:#8a8d92;"></div>
<div style="left:952px;top:546px;width:2px;height:21px;background:#24282e;"></div>
<div style="left:954px;top:546px;width:1px;height:21px;background:#8a8d92;"></div>
<div style="left:970px;top:546px;width:2px;height:21px;background:#24282e;"></div>
<div style="left:972px;top:546px;width:1px;height:21px;background:#8a8d92;"></div>
<div style="left:986px;top:546px;width:2px;height:21px;background:#24282e;"></div>
<div style="left:988px;top:546px;width:1px;height:21px;background:#8a8d92;"></div>
<div style="left:1070px;top:546px;width:2px;height:21px;background:#24282e;"></div>
<div style="left:1072px;top:546px;width:1px;height:21px;background:#8a8d92;"></div>
<div style="left:1079px;top:546px;width:2px;height:21px;background:#24282e;"></div>
<div style="left:1081px;top:546px;width:1px;height:21px;background:#8a8d92;"></div>
<div style="left:1095px;top:546px;width:2px;height:21px;background:#24282e;"></div>
<div style="left:1097px;top:546px;width:1px;height:21px;background:#8a8d92;"></div>
<div style="left:1125px;top:546px;width:2px;height:21px;background:#24282e;"></div>
<div style="left:1127px;top:546px;width:1px;height:21px;background:#8a8d92;"></div>
<div style="left:1141px;top:546px;width:2px;height:21px;background:#24282e;"></div>
<div style="left:1143px;top:546px;width:1px;height:21px;background:#8a8d92;"></div>
<div style="left:1154px;top:546px;width:2px;height:21px;background:#24282e;"></div>
<div style="left:1156px;top:546px;width:1px;height:21px;background:#8a8d92;"></div>
<div style="left:1224px;top:546px;width:2px;height:21px;background:#24282e;"></div>
<div style="left:1226px;top:546px;width:1px;height:21px;background:#8a8d92;"></div>
<div style="left:1273px;top:546px;width:2px;height:21px;background:#24282e;"></div>
<div style="left:1275px;top:546px;width:1px;height:21px;background:#8a8d92;"></div>
<div class="fx fa" style="left:75px;top:550px"><svg width="16" height="15" style="left:-1.5px;top:-1.5px"><path d="M3.3 12.8L6.6 4.2Q7.1 2.9 9 2.9M4.8 6H8.3M8 5.9L11.8 12.4M12.6 5.7L7.5 12.7" stroke="#111" stroke-width="1.1" fill="none"/></svg></div>
<div class="fx fa" style="left:263px;top:550px"><svg width="16" height="15" style="left:-1.5px;top:-1.5px"><path d="M3.3 12.8L6.6 4.2Q7.1 2.9 9 2.9M4.8 6H8.3M8 5.9L11.8 12.4M12.6 5.7L7.5 12.7" stroke="#111" stroke-width="1.1" fill="none"/></svg></div>
<div class="fx fa" style="left:377px;top:550px"><svg width="16" height="15" style="left:-1.5px;top:-1.5px"><path d="M3.3 12.8L6.6 4.2Q7.1 2.9 9 2.9M4.8 6H8.3M8 5.9L11.8 12.4M12.6 5.7L7.5 12.7" stroke="#111" stroke-width="1.1" fill="none"/></svg></div>
<div class="fx fa" style="left:481px;top:550px"><svg width="16" height="15" style="left:-1.5px;top:-1.5px"><path d="M3.3 12.8L6.6 4.2Q7.1 2.9 9 2.9M4.8 6H8.3M8 5.9L11.8 12.4M12.6 5.7L7.5 12.7" stroke="#111" stroke-width="1.1" fill="none"/></svg></div>
<div class="fx fa" style="left:617px;top:550px"><svg width="16" height="15" style="left:-1.5px;top:-1.5px"><path d="M3.3 12.8L6.6 4.2Q7.1 2.9 9 2.9M4.8 6H8.3M8 5.9L11.8 12.4M12.6 5.7L7.5 12.7" stroke="#111" stroke-width="1.1" fill="none"/></svg></div>
<div class="fx fa" style="left:704px;top:550px"><svg width="16" height="15" style="left:-1.5px;top:-1.5px"><path d="M3.3 12.8L6.6 4.2Q7.1 2.9 9 2.9M4.8 6H8.3M8 5.9L11.8 12.4M12.6 5.7L7.5 12.7" stroke="#111" stroke-width="1.1" fill="none"/></svg></div>
<div class="fx fa" style="left:818px;top:550px"><svg width="16" height="15" style="left:-1.5px;top:-1.5px"><path d="M3.3 12.8L6.6 4.2Q7.1 2.9 9 2.9M4.8 6H8.3M8 5.9L11.8 12.4M12.6 5.7L7.5 12.7" stroke="#111" stroke-width="1.1" fill="none"/></svg></div>
<div class="fx fa" style="left:903px;top:550px"><svg width="16" height="15" style="left:-1.5px;top:-1.5px"><path d="M3.3 12.8L6.6 4.2Q7.1 2.9 9 2.9M4.8 6H8.3M8 5.9L11.8 12.4M12.6 5.7L7.5 12.7" stroke="#111" stroke-width="1.1" fill="none"/></svg></div>
<div class="fx fa" style="left:1002px;top:550px"><svg width="16" height="15" style="left:-1.5px;top:-1.5px"><path d="M3.3 12.8L6.6 4.2Q7.1 2.9 9 2.9M4.8 6H8.3M8 5.9L11.8 12.4M12.6 5.7L7.5 12.7" stroke="#111" stroke-width="1.1" fill="none"/></svg></div>
<div class="fx fa" style="left:1170px;top:550px"><svg width="16" height="15" style="left:-1.5px;top:-1.5px"><path d="M3.3 12.8L6.6 4.2Q7.1 2.9 9 2.9M4.8 6H8.3M8 5.9L11.8 12.4M12.6 5.7L7.5 12.7" stroke="#111" stroke-width="1.1" fill="none"/></svg></div>
<div class="fx fa" style="left:1240px;top:550px"><svg width="16" height="15" style="left:-1.5px;top:-1.5px"><path d="M3.3 12.8L6.6 4.2Q7.1 2.9 9 2.9M4.8 6H8.3M8 5.9L11.8 12.4M12.6 5.7L7.5 12.7" stroke="#111" stroke-width="1.1" fill="none"/></svg></div>
<div class="fx fa" style="left:1289px;top:550px"><svg width="16" height="15" style="left:-1.5px;top:-1.5px"><path d="M3.3 12.8L6.6 4.2Q7.1 2.9 9 2.9M4.8 6H8.3M8 5.9L11.8 12.4M12.6 5.7L7.5 12.7" stroke="#111" stroke-width="1.1" fill="none"/></svg></div>
<div style="left:16px;top:567px;width:2px;height:20px;background:#24282e;"></div>
<div style="left:18px;top:567px;width:1px;height:20px;background:#8a8d92;"></div>
<div style="left:34px;top:567px;width:2px;height:20px;background:#24282e;"></div>
<div style="left:36px;top:567px;width:1px;height:20px;background:#8a8d92;"></div>
<div style="left:52px;top:567px;width:2px;height:20px;background:#24282e;"></div>
<div style="left:54px;top:567px;width:1px;height:20px;background:#8a8d92;"></div>
<div style="left:59px;top:567px;width:2px;height:20px;background:#24282e;"></div>
<div style="left:61px;top:567px;width:1px;height:20px;background:#8a8d92;"></div>
<div style="left:111px;top:567px;width:2px;height:20px;background:#24282e;"></div>
<div style="left:113px;top:567px;width:1px;height:20px;background:#8a8d92;"></div>
<div style="left:118px;top:567px;width:2px;height:20px;background:#24282e;"></div>
<div style="left:120px;top:567px;width:1px;height:20px;background:#8a8d92;"></div>
<div style="left:129px;top:567px;width:2px;height:20px;background:#24282e;"></div>
<div style="left:131px;top:567px;width:1px;height:20px;background:#8a8d92;"></div>
<div style="left:146px;top:567px;width:2px;height:20px;background:#24282e;"></div>
<div style="left:148px;top:567px;width:1px;height:20px;background:#8a8d92;"></div>
<div style="left:182px;top:567px;width:2px;height:20px;background:#24282e;"></div>
<div style="left:184px;top:567px;width:1px;height:20px;background:#8a8d92;"></div>
<div style="left:203px;top:567px;width:2px;height:20px;background:#24282e;"></div>
<div style="left:205px;top:567px;width:1px;height:20px;background:#8a8d92;"></div>
<div style="left:213px;top:567px;width:2px;height:20px;background:#24282e;"></div>
<div style="left:215px;top:567px;width:1px;height:20px;background:#8a8d92;"></div>
<div style="left:236px;top:567px;width:2px;height:20px;background:#24282e;"></div>
<div style="left:238px;top:567px;width:1px;height:20px;background:#8a8d92;"></div>
<div style="left:247px;top:567px;width:2px;height:20px;background:#24282e;"></div>
<div style="left:249px;top:567px;width:1px;height:20px;background:#8a8d92;"></div>
<div style="left:320px;top:567px;width:2px;height:20px;background:#24282e;"></div>
<div style="left:322px;top:567px;width:1px;height:20px;background:#8a8d92;"></div>
<div style="left:328px;top:567px;width:2px;height:20px;background:#24282e;"></div>
<div style="left:330px;top:567px;width:1px;height:20px;background:#8a8d92;"></div>
<div style="left:361px;top:567px;width:2px;height:20px;background:#24282e;"></div>
<div style="left:363px;top:567px;width:1px;height:20px;background:#8a8d92;"></div>
<div style="left:403px;top:567px;width:2px;height:20px;background:#24282e;"></div>
<div style="left:405px;top:567px;width:1px;height:20px;background:#8a8d92;"></div>
<div style="left:441px;top:567px;width:2px;height:20px;background:#24282e;"></div>
<div style="left:443px;top:567px;width:1px;height:20px;background:#8a8d92;"></div>
<div style="left:465px;top:567px;width:2px;height:20px;background:#24282e;"></div>
<div style="left:467px;top:567px;width:1px;height:20px;background:#8a8d92;"></div>
<div style="left:551px;top:567px;width:2px;height:20px;background:#24282e;"></div>
<div style="left:553px;top:567px;width:1px;height:20px;background:#8a8d92;"></div>
<div style="left:579px;top:567px;width:2px;height:20px;background:#24282e;"></div>
<div style="left:581px;top:567px;width:1px;height:20px;background:#8a8d92;"></div>
<div style="left:589px;top:567px;width:2px;height:20px;background:#24282e;"></div>
<div style="left:591px;top:567px;width:1px;height:20px;background:#8a8d92;"></div>
<div style="left:601px;top:567px;width:2px;height:20px;background:#24282e;"></div>
<div style="left:603px;top:567px;width:1px;height:20px;background:#8a8d92;"></div>
<div style="left:645px;top:567px;width:2px;height:20px;background:#24282e;"></div>
<div style="left:647px;top:567px;width:1px;height:20px;background:#8a8d92;"></div>
<div style="left:652px;top:567px;width:2px;height:20px;background:#24282e;"></div>
<div style="left:654px;top:567px;width:1px;height:20px;background:#8a8d92;"></div>
<div style="left:671px;top:567px;width:2px;height:20px;background:#24282e;"></div>
<div style="left:673px;top:567px;width:1px;height:20px;background:#8a8d92;"></div>
<div style="left:688px;top:567px;width:2px;height:20px;background:#24282e;"></div>
<div style="left:690px;top:567px;width:1px;height:20px;background:#8a8d92;"></div>
<div style="left:758px;top:567px;width:2px;height:20px;background:#24282e;"></div>
<div style="left:760px;top:567px;width:1px;height:20px;background:#8a8d92;"></div>
<div style="left:761px;top:567px;width:2px;height:20px;background:#24282e;"></div>
<div style="left:763px;top:567px;width:1px;height:20px;background:#8a8d92;"></div>
<div style="left:765px;top:567px;width:2px;height:20px;background:#24282e;"></div>
<div style="left:767px;top:567px;width:1px;height:20px;background:#8a8d92;"></div>
<div style="left:802px;top:567px;width:2px;height:20px;background:#24282e;"></div>
<div style="left:804px;top:567px;width:1px;height:20px;background:#8a8d92;"></div>
<div style="left:887px;top:567px;width:2px;height:20px;background:#24282e;"></div>
<div style="left:889px;top:567px;width:1px;height:20px;background:#8a8d92;"></div>
<div style="left:947px;top:567px;width:2px;height:20px;background:#24282e;"></div>
<div style="left:949px;top:567px;width:1px;height:20px;background:#8a8d92;"></div>
<div style="left:952px;top:567px;width:2px;height:20px;background:#24282e;"></div>
<div style="left:954px;top:567px;width:1px;height:20px;background:#8a8d92;"></div>
<div style="left:970px;top:567px;width:2px;height:20px;background:#24282e;"></div>
<div style="left:972px;top:567px;width:1px;height:20px;background:#8a8d92;"></div>
<div style="left:986px;top:567px;width:2px;height:20px;background:#24282e;"></div>
<div style="left:988px;top:567px;width:1px;height:20px;background:#8a8d92;"></div>
<div style="left:1070px;top:567px;width:2px;height:20px;background:#24282e;"></div>
<div style="left:1072px;top:567px;width:1px;height:20px;background:#8a8d92;"></div>
<div style="left:1079px;top:567px;width:2px;height:20px;background:#24282e;"></div>
<div style="left:1081px;top:567px;width:1px;height:20px;background:#8a8d92;"></div>
<div style="left:1095px;top:567px;width:2px;height:20px;background:#24282e;"></div>
<div style="left:1097px;top:567px;width:1px;height:20px;background:#8a8d92;"></div>
<div style="left:1125px;top:567px;width:2px;height:20px;background:#24282e;"></div>
<div style="left:1127px;top:567px;width:1px;height:20px;background:#8a8d92;"></div>
<div style="left:1141px;top:567px;width:2px;height:20px;background:#24282e;"></div>
<div style="left:1143px;top:567px;width:1px;height:20px;background:#8a8d92;"></div>
<div style="left:1154px;top:567px;width:2px;height:20px;background:#24282e;"></div>
<div style="left:1156px;top:567px;width:1px;height:20px;background:#8a8d92;"></div>
<div style="left:1224px;top:567px;width:2px;height:20px;background:#24282e;"></div>
<div style="left:1226px;top:567px;width:1px;height:20px;background:#8a8d92;"></div>
<div style="left:1273px;top:567px;width:2px;height:20px;background:#24282e;"></div>
<div style="left:1275px;top:567px;width:1px;height:20px;background:#8a8d92;"></div>
<div class="fx fa" style="left:75px;top:571px"><svg width="16" height="15" style="left:-1.5px;top:-1.5px"><path d="M3.3 12.8L6.6 4.2Q7.1 2.9 9 2.9M4.8 6H8.3M8 5.9L11.8 12.4M12.6 5.7L7.5 12.7" stroke="#111" stroke-width="1.1" fill="none"/></svg></div>
<div class="fx fa" style="left:263px;top:571px"><svg width="16" height="15" style="left:-1.5px;top:-1.5px"><path d="M3.3 12.8L6.6 4.2Q7.1 2.9 9 2.9M4.8 6H8.3M8 5.9L11.8 12.4M12.6 5.7L7.5 12.7" stroke="#111" stroke-width="1.1" fill="none"/></svg></div>
<div class="fx fa" style="left:377px;top:571px"><svg width="16" height="15" style="left:-1.5px;top:-1.5px"><path d="M3.3 12.8L6.6 4.2Q7.1 2.9 9 2.9M4.8 6H8.3M8 5.9L11.8 12.4M12.6 5.7L7.5 12.7" stroke="#111" stroke-width="1.1" fill="none"/></svg></div>
<div class="fx fa" style="left:481px;top:571px"><svg width="16" height="15" style="left:-1.5px;top:-1.5px"><path d="M3.3 12.8L6.6 4.2Q7.1 2.9 9 2.9M4.8 6H8.3M8 5.9L11.8 12.4M12.6 5.7L7.5 12.7" stroke="#111" stroke-width="1.1" fill="none"/></svg></div>
<div class="fx fa" style="left:617px;top:571px"><svg width="16" height="15" style="left:-1.5px;top:-1.5px"><path d="M3.3 12.8L6.6 4.2Q7.1 2.9 9 2.9M4.8 6H8.3M8 5.9L11.8 12.4M12.6 5.7L7.5 12.7" stroke="#111" stroke-width="1.1" fill="none"/></svg></div>
<div class="fx fa" style="left:704px;top:571px"><svg width="16" height="15" style="left:-1.5px;top:-1.5px"><path d="M3.3 12.8L6.6 4.2Q7.1 2.9 9 2.9M4.8 6H8.3M8 5.9L11.8 12.4M12.6 5.7L7.5 12.7" stroke="#111" stroke-width="1.1" fill="none"/></svg></div>
<div class="fx fa" style="left:818px;top:571px"><svg width="16" height="15" style="left:-1.5px;top:-1.5px"><path d="M3.3 12.8L6.6 4.2Q7.1 2.9 9 2.9M4.8 6H8.3M8 5.9L11.8 12.4M12.6 5.7L7.5 12.7" stroke="#111" stroke-width="1.1" fill="none"/></svg></div>
<div class="fx fa" style="left:903px;top:571px"><svg width="16" height="15" style="left:-1.5px;top:-1.5px"><path d="M3.3 12.8L6.6 4.2Q7.1 2.9 9 2.9M4.8 6H8.3M8 5.9L11.8 12.4M12.6 5.7L7.5 12.7" stroke="#111" stroke-width="1.1" fill="none"/></svg></div>
<div class="fx fa" style="left:1002px;top:571px"><svg width="16" height="15" style="left:-1.5px;top:-1.5px"><path d="M3.3 12.8L6.6 4.2Q7.1 2.9 9 2.9M4.8 6H8.3M8 5.9L11.8 12.4M12.6 5.7L7.5 12.7" stroke="#111" stroke-width="1.1" fill="none"/></svg></div>
<div class="fx fa" style="left:1170px;top:571px"><svg width="16" height="15" style="left:-1.5px;top:-1.5px"><path d="M3.3 12.8L6.6 4.2Q7.1 2.9 9 2.9M4.8 6H8.3M8 5.9L11.8 12.4M12.6 5.7L7.5 12.7" stroke="#111" stroke-width="1.1" fill="none"/></svg></div>
<div class="fx fa" style="left:1240px;top:571px"><svg width="16" height="15" style="left:-1.5px;top:-1.5px"><path d="M3.3 12.8L6.6 4.2Q7.1 2.9 9 2.9M4.8 6H8.3M8 5.9L11.8 12.4M12.6 5.7L7.5 12.7" stroke="#111" stroke-width="1.1" fill="none"/></svg></div>
<div class="fx fa" style="left:1289px;top:571px"><svg width="16" height="15" style="left:-1.5px;top:-1.5px"><path d="M3.3 12.8L6.6 4.2Q7.1 2.9 9 2.9M4.8 6H8.3M8 5.9L11.8 12.4M12.6 5.7L7.5 12.7" stroke="#111" stroke-width="1.1" fill="none"/></svg></div>
<div style="left:16px;top:587px;width:2px;height:21px;background:#24282e;"></div>
<div style="left:18px;top:587px;width:1px;height:21px;background:#8a8d92;"></div>
<div style="left:34px;top:587px;width:2px;height:21px;background:#24282e;"></div>
<div style="left:36px;top:587px;width:1px;height:21px;background:#8a8d92;"></div>
<div style="left:52px;top:587px;width:2px;height:21px;background:#24282e;"></div>
<div style="left:54px;top:587px;width:1px;height:21px;background:#8a8d92;"></div>
<div style="left:59px;top:587px;width:2px;height:21px;background:#24282e;"></div>
<div style="left:61px;top:587px;width:1px;height:21px;background:#8a8d92;"></div>
<div style="left:111px;top:587px;width:2px;height:21px;background:#24282e;"></div>
<div style="left:113px;top:587px;width:1px;height:21px;background:#8a8d92;"></div>
<div style="left:118px;top:587px;width:2px;height:21px;background:#24282e;"></div>
<div style="left:120px;top:587px;width:1px;height:21px;background:#8a8d92;"></div>
<div style="left:129px;top:587px;width:2px;height:21px;background:#24282e;"></div>
<div style="left:131px;top:587px;width:1px;height:21px;background:#8a8d92;"></div>
<div style="left:146px;top:587px;width:2px;height:21px;background:#24282e;"></div>
<div style="left:148px;top:587px;width:1px;height:21px;background:#8a8d92;"></div>
<div style="left:182px;top:587px;width:2px;height:21px;background:#24282e;"></div>
<div style="left:184px;top:587px;width:1px;height:21px;background:#8a8d92;"></div>
<div style="left:203px;top:587px;width:2px;height:21px;background:#24282e;"></div>
<div style="left:205px;top:587px;width:1px;height:21px;background:#8a8d92;"></div>
<div style="left:213px;top:587px;width:2px;height:21px;background:#24282e;"></div>
<div style="left:215px;top:587px;width:1px;height:21px;background:#8a8d92;"></div>
<div style="left:236px;top:587px;width:2px;height:21px;background:#24282e;"></div>
<div style="left:238px;top:587px;width:1px;height:21px;background:#8a8d92;"></div>
<div style="left:247px;top:587px;width:2px;height:21px;background:#24282e;"></div>
<div style="left:249px;top:587px;width:1px;height:21px;background:#8a8d92;"></div>
<div style="left:320px;top:587px;width:2px;height:21px;background:#24282e;"></div>
<div style="left:322px;top:587px;width:1px;height:21px;background:#8a8d92;"></div>
<div style="left:328px;top:587px;width:2px;height:21px;background:#24282e;"></div>
<div style="left:330px;top:587px;width:1px;height:21px;background:#8a8d92;"></div>
<div style="left:361px;top:587px;width:2px;height:21px;background:#24282e;"></div>
<div style="left:363px;top:587px;width:1px;height:21px;background:#8a8d92;"></div>
<div style="left:403px;top:587px;width:2px;height:21px;background:#24282e;"></div>
<div style="left:405px;top:587px;width:1px;height:21px;background:#8a8d92;"></div>
<div style="left:441px;top:587px;width:2px;height:21px;background:#24282e;"></div>
<div style="left:443px;top:587px;width:1px;height:21px;background:#8a8d92;"></div>
<div style="left:465px;top:587px;width:2px;height:21px;background:#24282e;"></div>
<div style="left:467px;top:587px;width:1px;height:21px;background:#8a8d92;"></div>
<div style="left:551px;top:587px;width:2px;height:21px;background:#24282e;"></div>
<div style="left:553px;top:587px;width:1px;height:21px;background:#8a8d92;"></div>
<div style="left:579px;top:587px;width:2px;height:21px;background:#24282e;"></div>
<div style="left:581px;top:587px;width:1px;height:21px;background:#8a8d92;"></div>
<div style="left:589px;top:587px;width:2px;height:21px;background:#24282e;"></div>
<div style="left:591px;top:587px;width:1px;height:21px;background:#8a8d92;"></div>
<div style="left:601px;top:587px;width:2px;height:21px;background:#24282e;"></div>
<div style="left:603px;top:587px;width:1px;height:21px;background:#8a8d92;"></div>
<div style="left:645px;top:587px;width:2px;height:21px;background:#24282e;"></div>
<div style="left:647px;top:587px;width:1px;height:21px;background:#8a8d92;"></div>
<div style="left:652px;top:587px;width:2px;height:21px;background:#24282e;"></div>
<div style="left:654px;top:587px;width:1px;height:21px;background:#8a8d92;"></div>
<div style="left:671px;top:587px;width:2px;height:21px;background:#24282e;"></div>
<div style="left:673px;top:587px;width:1px;height:21px;background:#8a8d92;"></div>
<div style="left:688px;top:587px;width:2px;height:21px;background:#24282e;"></div>
<div style="left:690px;top:587px;width:1px;height:21px;background:#8a8d92;"></div>
<div style="left:758px;top:587px;width:2px;height:21px;background:#24282e;"></div>
<div style="left:760px;top:587px;width:1px;height:21px;background:#8a8d92;"></div>
<div style="left:761px;top:587px;width:2px;height:21px;background:#24282e;"></div>
<div style="left:763px;top:587px;width:1px;height:21px;background:#8a8d92;"></div>
<div style="left:765px;top:587px;width:2px;height:21px;background:#24282e;"></div>
<div style="left:767px;top:587px;width:1px;height:21px;background:#8a8d92;"></div>
<div style="left:802px;top:587px;width:2px;height:21px;background:#24282e;"></div>
<div style="left:804px;top:587px;width:1px;height:21px;background:#8a8d92;"></div>
<div style="left:887px;top:587px;width:2px;height:21px;background:#24282e;"></div>
<div style="left:889px;top:587px;width:1px;height:21px;background:#8a8d92;"></div>
<div style="left:947px;top:587px;width:2px;height:21px;background:#24282e;"></div>
<div style="left:949px;top:587px;width:1px;height:21px;background:#8a8d92;"></div>
<div style="left:952px;top:587px;width:2px;height:21px;background:#24282e;"></div>
<div style="left:954px;top:587px;width:1px;height:21px;background:#8a8d92;"></div>
<div style="left:970px;top:587px;width:2px;height:21px;background:#24282e;"></div>
<div style="left:972px;top:587px;width:1px;height:21px;background:#8a8d92;"></div>
<div style="left:986px;top:587px;width:2px;height:21px;background:#24282e;"></div>
<div style="left:988px;top:587px;width:1px;height:21px;background:#8a8d92;"></div>
<div style="left:1070px;top:587px;width:2px;height:21px;background:#24282e;"></div>
<div style="left:1072px;top:587px;width:1px;height:21px;background:#8a8d92;"></div>
<div style="left:1079px;top:587px;width:2px;height:21px;background:#24282e;"></div>
<div style="left:1081px;top:587px;width:1px;height:21px;background:#8a8d92;"></div>
<div style="left:1095px;top:587px;width:2px;height:21px;background:#24282e;"></div>
<div style="left:1097px;top:587px;width:1px;height:21px;background:#8a8d92;"></div>
<div style="left:1125px;top:587px;width:2px;height:21px;background:#24282e;"></div>
<div style="left:1127px;top:587px;width:1px;height:21px;background:#8a8d92;"></div>
<div style="left:1141px;top:587px;width:2px;height:21px;background:#24282e;"></div>
<div style="left:1143px;top:587px;width:1px;height:21px;background:#8a8d92;"></div>
<div style="left:1154px;top:587px;width:2px;height:21px;background:#24282e;"></div>
<div style="left:1156px;top:587px;width:1px;height:21px;background:#8a8d92;"></div>
<div style="left:1224px;top:587px;width:2px;height:21px;background:#24282e;"></div>
<div style="left:1226px;top:587px;width:1px;height:21px;background:#8a8d92;"></div>
<div style="left:1273px;top:587px;width:2px;height:21px;background:#24282e;"></div>
<div style="left:1275px;top:587px;width:1px;height:21px;background:#8a8d92;"></div>
<div class="fx fa" style="left:75px;top:591px"><svg width="16" height="15" style="left:-1.5px;top:-1.5px"><path d="M3.3 12.8L6.6 4.2Q7.1 2.9 9 2.9M4.8 6H8.3M8 5.9L11.8 12.4M12.6 5.7L7.5 12.7" stroke="#111" stroke-width="1.1" fill="none"/></svg></div>
<div class="fx fa" style="left:263px;top:591px"><svg width="16" height="15" style="left:-1.5px;top:-1.5px"><path d="M3.3 12.8L6.6 4.2Q7.1 2.9 9 2.9M4.8 6H8.3M8 5.9L11.8 12.4M12.6 5.7L7.5 12.7" stroke="#111" stroke-width="1.1" fill="none"/></svg></div>
<div class="fx fa" style="left:377px;top:591px"><svg width="16" height="15" style="left:-1.5px;top:-1.5px"><path d="M3.3 12.8L6.6 4.2Q7.1 2.9 9 2.9M4.8 6H8.3M8 5.9L11.8 12.4M12.6 5.7L7.5 12.7" stroke="#111" stroke-width="1.1" fill="none"/></svg></div>
<div class="fx fa" style="left:481px;top:591px"><svg width="16" height="15" style="left:-1.5px;top:-1.5px"><path d="M3.3 12.8L6.6 4.2Q7.1 2.9 9 2.9M4.8 6H8.3M8 5.9L11.8 12.4M12.6 5.7L7.5 12.7" stroke="#111" stroke-width="1.1" fill="none"/></svg></div>
<div class="fx fa" style="left:617px;top:591px"><svg width="16" height="15" style="left:-1.5px;top:-1.5px"><path d="M3.3 12.8L6.6 4.2Q7.1 2.9 9 2.9M4.8 6H8.3M8 5.9L11.8 12.4M12.6 5.7L7.5 12.7" stroke="#111" stroke-width="1.1" fill="none"/></svg></div>
<div class="fx fa" style="left:704px;top:591px"><svg width="16" height="15" style="left:-1.5px;top:-1.5px"><path d="M3.3 12.8L6.6 4.2Q7.1 2.9 9 2.9M4.8 6H8.3M8 5.9L11.8 12.4M12.6 5.7L7.5 12.7" stroke="#111" stroke-width="1.1" fill="none"/></svg></div>
<div class="fx fa" style="left:818px;top:591px"><svg width="16" height="15" style="left:-1.5px;top:-1.5px"><path d="M3.3 12.8L6.6 4.2Q7.1 2.9 9 2.9M4.8 6H8.3M8 5.9L11.8 12.4M12.6 5.7L7.5 12.7" stroke="#111" stroke-width="1.1" fill="none"/></svg></div>
<div class="fx fa" style="left:903px;top:591px"><svg width="16" height="15" style="left:-1.5px;top:-1.5px"><path d="M3.3 12.8L6.6 4.2Q7.1 2.9 9 2.9M4.8 6H8.3M8 5.9L11.8 12.4M12.6 5.7L7.5 12.7" stroke="#111" stroke-width="1.1" fill="none"/></svg></div>
<div class="fx fa" style="left:1002px;top:591px"><svg width="16" height="15" style="left:-1.5px;top:-1.5px"><path d="M3.3 12.8L6.6 4.2Q7.1 2.9 9 2.9M4.8 6H8.3M8 5.9L11.8 12.4M12.6 5.7L7.5 12.7" stroke="#111" stroke-width="1.1" fill="none"/></svg></div>
<div class="fx fa" style="left:1170px;top:591px"><svg width="16" height="15" style="left:-1.5px;top:-1.5px"><path d="M3.3 12.8L6.6 4.2Q7.1 2.9 9 2.9M4.8 6H8.3M8 5.9L11.8 12.4M12.6 5.7L7.5 12.7" stroke="#111" stroke-width="1.1" fill="none"/></svg></div>
<div class="fx fa" style="left:1240px;top:591px"><svg width="16" height="15" style="left:-1.5px;top:-1.5px"><path d="M3.3 12.8L6.6 4.2Q7.1 2.9 9 2.9M4.8 6H8.3M8 5.9L11.8 12.4M12.6 5.7L7.5 12.7" stroke="#111" stroke-width="1.1" fill="none"/></svg></div>
<div class="fx fa" style="left:1289px;top:591px"><svg width="16" height="15" style="left:-1.5px;top:-1.5px"><path d="M3.3 12.8L6.6 4.2Q7.1 2.9 9 2.9M4.8 6H8.3M8 5.9L11.8 12.4M12.6 5.7L7.5 12.7" stroke="#111" stroke-width="1.1" fill="none"/></svg></div>
<div style="left:16px;top:608px;width:2px;height:21px;background:#24282e;"></div>
<div style="left:18px;top:608px;width:1px;height:21px;background:#8a8d92;"></div>
<div style="left:34px;top:608px;width:2px;height:21px;background:#24282e;"></div>
<div style="left:36px;top:608px;width:1px;height:21px;background:#8a8d92;"></div>
<div style="left:52px;top:608px;width:2px;height:21px;background:#24282e;"></div>
<div style="left:54px;top:608px;width:1px;height:21px;background:#8a8d92;"></div>
<div style="left:59px;top:608px;width:2px;height:21px;background:#24282e;"></div>
<div style="left:61px;top:608px;width:1px;height:21px;background:#8a8d92;"></div>
<div style="left:111px;top:608px;width:2px;height:21px;background:#24282e;"></div>
<div style="left:113px;top:608px;width:1px;height:21px;background:#8a8d92;"></div>
<div style="left:118px;top:608px;width:2px;height:21px;background:#24282e;"></div>
<div style="left:120px;top:608px;width:1px;height:21px;background:#8a8d92;"></div>
<div style="left:129px;top:608px;width:2px;height:21px;background:#24282e;"></div>
<div style="left:131px;top:608px;width:1px;height:21px;background:#8a8d92;"></div>
<div style="left:146px;top:608px;width:2px;height:21px;background:#24282e;"></div>
<div style="left:148px;top:608px;width:1px;height:21px;background:#8a8d92;"></div>
<div style="left:182px;top:608px;width:2px;height:21px;background:#24282e;"></div>
<div style="left:184px;top:608px;width:1px;height:21px;background:#8a8d92;"></div>
<div style="left:203px;top:608px;width:2px;height:21px;background:#24282e;"></div>
<div style="left:205px;top:608px;width:1px;height:21px;background:#8a8d92;"></div>
<div style="left:213px;top:608px;width:2px;height:21px;background:#24282e;"></div>
<div style="left:215px;top:608px;width:1px;height:21px;background:#8a8d92;"></div>
<div style="left:236px;top:608px;width:2px;height:21px;background:#24282e;"></div>
<div style="left:238px;top:608px;width:1px;height:21px;background:#8a8d92;"></div>
<div style="left:247px;top:608px;width:2px;height:21px;background:#24282e;"></div>
<div style="left:249px;top:608px;width:1px;height:21px;background:#8a8d92;"></div>
<div style="left:320px;top:608px;width:2px;height:21px;background:#24282e;"></div>
<div style="left:322px;top:608px;width:1px;height:21px;background:#8a8d92;"></div>
<div style="left:328px;top:608px;width:2px;height:21px;background:#24282e;"></div>
<div style="left:330px;top:608px;width:1px;height:21px;background:#8a8d92;"></div>
<div style="left:361px;top:608px;width:2px;height:21px;background:#24282e;"></div>
<div style="left:363px;top:608px;width:1px;height:21px;background:#8a8d92;"></div>
<div style="left:403px;top:608px;width:2px;height:21px;background:#24282e;"></div>
<div style="left:405px;top:608px;width:1px;height:21px;background:#8a8d92;"></div>
<div style="left:441px;top:608px;width:2px;height:21px;background:#24282e;"></div>
<div style="left:443px;top:608px;width:1px;height:21px;background:#8a8d92;"></div>
<div style="left:465px;top:608px;width:2px;height:21px;background:#24282e;"></div>
<div style="left:467px;top:608px;width:1px;height:21px;background:#8a8d92;"></div>
<div style="left:551px;top:608px;width:2px;height:21px;background:#24282e;"></div>
<div style="left:553px;top:608px;width:1px;height:21px;background:#8a8d92;"></div>
<div style="left:579px;top:608px;width:2px;height:21px;background:#24282e;"></div>
<div style="left:581px;top:608px;width:1px;height:21px;background:#8a8d92;"></div>
<div style="left:589px;top:608px;width:2px;height:21px;background:#24282e;"></div>
<div style="left:591px;top:608px;width:1px;height:21px;background:#8a8d92;"></div>
<div style="left:601px;top:608px;width:2px;height:21px;background:#24282e;"></div>
<div style="left:603px;top:608px;width:1px;height:21px;background:#8a8d92;"></div>
<div style="left:645px;top:608px;width:2px;height:21px;background:#24282e;"></div>
<div style="left:647px;top:608px;width:1px;height:21px;background:#8a8d92;"></div>
<div style="left:652px;top:608px;width:2px;height:21px;background:#24282e;"></div>
<div style="left:654px;top:608px;width:1px;height:21px;background:#8a8d92;"></div>
<div style="left:671px;top:608px;width:2px;height:21px;background:#24282e;"></div>
<div style="left:673px;top:608px;width:1px;height:21px;background:#8a8d92;"></div>
<div style="left:688px;top:608px;width:2px;height:21px;background:#24282e;"></div>
<div style="left:690px;top:608px;width:1px;height:21px;background:#8a8d92;"></div>
<div style="left:758px;top:608px;width:2px;height:21px;background:#24282e;"></div>
<div style="left:760px;top:608px;width:1px;height:21px;background:#8a8d92;"></div>
<div style="left:761px;top:608px;width:2px;height:21px;background:#24282e;"></div>
<div style="left:763px;top:608px;width:1px;height:21px;background:#8a8d92;"></div>
<div style="left:765px;top:608px;width:2px;height:21px;background:#24282e;"></div>
<div style="left:767px;top:608px;width:1px;height:21px;background:#8a8d92;"></div>
<div style="left:802px;top:608px;width:2px;height:21px;background:#24282e;"></div>
<div style="left:804px;top:608px;width:1px;height:21px;background:#8a8d92;"></div>
<div style="left:887px;top:608px;width:2px;height:21px;background:#24282e;"></div>
<div style="left:889px;top:608px;width:1px;height:21px;background:#8a8d92;"></div>
<div style="left:947px;top:608px;width:2px;height:21px;background:#24282e;"></div>
<div style="left:949px;top:608px;width:1px;height:21px;background:#8a8d92;"></div>
<div style="left:952px;top:608px;width:2px;height:21px;background:#24282e;"></div>
<div style="left:954px;top:608px;width:1px;height:21px;background:#8a8d92;"></div>
<div style="left:970px;top:608px;width:2px;height:21px;background:#24282e;"></div>
<div style="left:972px;top:608px;width:1px;height:21px;background:#8a8d92;"></div>
<div style="left:986px;top:608px;width:2px;height:21px;background:#24282e;"></div>
<div style="left:988px;top:608px;width:1px;height:21px;background:#8a8d92;"></div>
<div style="left:1070px;top:608px;width:2px;height:21px;background:#24282e;"></div>
<div style="left:1072px;top:608px;width:1px;height:21px;background:#8a8d92;"></div>
<div style="left:1079px;top:608px;width:2px;height:21px;background:#24282e;"></div>
<div style="left:1081px;top:608px;width:1px;height:21px;background:#8a8d92;"></div>
<div style="left:1095px;top:608px;width:2px;height:21px;background:#24282e;"></div>
<div style="left:1097px;top:608px;width:1px;height:21px;background:#8a8d92;"></div>
<div style="left:1125px;top:608px;width:2px;height:21px;background:#24282e;"></div>
<div style="left:1127px;top:608px;width:1px;height:21px;background:#8a8d92;"></div>
<div style="left:1141px;top:608px;width:2px;height:21px;background:#24282e;"></div>
<div style="left:1143px;top:608px;width:1px;height:21px;background:#8a8d92;"></div>
<div style="left:1154px;top:608px;width:2px;height:21px;background:#24282e;"></div>
<div style="left:1156px;top:608px;width:1px;height:21px;background:#8a8d92;"></div>
<div style="left:1224px;top:608px;width:2px;height:21px;background:#24282e;"></div>
<div style="left:1226px;top:608px;width:1px;height:21px;background:#8a8d92;"></div>
<div style="left:1273px;top:608px;width:2px;height:21px;background:#24282e;"></div>
<div style="left:1275px;top:608px;width:1px;height:21px;background:#8a8d92;"></div>
<div class="fx fa" style="left:75px;top:612px"><svg width="16" height="15" style="left:-1.5px;top:-1.5px"><path d="M3.3 12.8L6.6 4.2Q7.1 2.9 9 2.9M4.8 6H8.3M8 5.9L11.8 12.4M12.6 5.7L7.5 12.7" stroke="#111" stroke-width="1.1" fill="none"/></svg></div>
<div class="fx fa" style="left:263px;top:612px"><svg width="16" height="15" style="left:-1.5px;top:-1.5px"><path d="M3.3 12.8L6.6 4.2Q7.1 2.9 9 2.9M4.8 6H8.3M8 5.9L11.8 12.4M12.6 5.7L7.5 12.7" stroke="#111" stroke-width="1.1" fill="none"/></svg></div>
<div class="fx fa" style="left:377px;top:612px"><svg width="16" height="15" style="left:-1.5px;top:-1.5px"><path d="M3.3 12.8L6.6 4.2Q7.1 2.9 9 2.9M4.8 6H8.3M8 5.9L11.8 12.4M12.6 5.7L7.5 12.7" stroke="#111" stroke-width="1.1" fill="none"/></svg></div>
<div class="fx fa" style="left:481px;top:612px"><svg width="16" height="15" style="left:-1.5px;top:-1.5px"><path d="M3.3 12.8L6.6 4.2Q7.1 2.9 9 2.9M4.8 6H8.3M8 5.9L11.8 12.4M12.6 5.7L7.5 12.7" stroke="#111" stroke-width="1.1" fill="none"/></svg></div>
<div class="fx fa" style="left:617px;top:612px"><svg width="16" height="15" style="left:-1.5px;top:-1.5px"><path d="M3.3 12.8L6.6 4.2Q7.1 2.9 9 2.9M4.8 6H8.3M8 5.9L11.8 12.4M12.6 5.7L7.5 12.7" stroke="#111" stroke-width="1.1" fill="none"/></svg></div>
<div class="fx fa" style="left:704px;top:612px"><svg width="16" height="15" style="left:-1.5px;top:-1.5px"><path d="M3.3 12.8L6.6 4.2Q7.1 2.9 9 2.9M4.8 6H8.3M8 5.9L11.8 12.4M12.6 5.7L7.5 12.7" stroke="#111" stroke-width="1.1" fill="none"/></svg></div>
<div class="fx fa" style="left:818px;top:612px"><svg width="16" height="15" style="left:-1.5px;top:-1.5px"><path d="M3.3 12.8L6.6 4.2Q7.1 2.9 9 2.9M4.8 6H8.3M8 5.9L11.8 12.4M12.6 5.7L7.5 12.7" stroke="#111" stroke-width="1.1" fill="none"/></svg></div>
<div class="fx fa" style="left:903px;top:612px"><svg width="16" height="15" style="left:-1.5px;top:-1.5px"><path d="M3.3 12.8L6.6 4.2Q7.1 2.9 9 2.9M4.8 6H8.3M8 5.9L11.8 12.4M12.6 5.7L7.5 12.7" stroke="#111" stroke-width="1.1" fill="none"/></svg></div>
<div class="fx fa" style="left:1002px;top:612px"><svg width="16" height="15" style="left:-1.5px;top:-1.5px"><path d="M3.3 12.8L6.6 4.2Q7.1 2.9 9 2.9M4.8 6H8.3M8 5.9L11.8 12.4M12.6 5.7L7.5 12.7" stroke="#111" stroke-width="1.1" fill="none"/></svg></div>
<div class="fx fa" style="left:1170px;top:612px"><svg width="16" height="15" style="left:-1.5px;top:-1.5px"><path d="M3.3 12.8L6.6 4.2Q7.1 2.9 9 2.9M4.8 6H8.3M8 5.9L11.8 12.4M12.6 5.7L7.5 12.7" stroke="#111" stroke-width="1.1" fill="none"/></svg></div>
<div class="fx fa" style="left:1240px;top:612px"><svg width="16" height="15" style="left:-1.5px;top:-1.5px"><path d="M3.3 12.8L6.6 4.2Q7.1 2.9 9 2.9M4.8 6H8.3M8 5.9L11.8 12.4M12.6 5.7L7.5 12.7" stroke="#111" stroke-width="1.1" fill="none"/></svg></div>
<div class="fx fa" style="left:1289px;top:612px"><svg width="16" height="15" style="left:-1.5px;top:-1.5px"><path d="M3.3 12.8L6.6 4.2Q7.1 2.9 9 2.9M4.8 6H8.3M8 5.9L11.8 12.4M12.6 5.7L7.5 12.7" stroke="#111" stroke-width="1.1" fill="none"/></svg></div>
<div style="left:16px;top:629px;width:2px;height:20px;background:#24282e;"></div>
<div style="left:18px;top:629px;width:1px;height:20px;background:#8a8d92;"></div>
<div style="left:34px;top:629px;width:2px;height:20px;background:#24282e;"></div>
<div style="left:36px;top:629px;width:1px;height:20px;background:#8a8d92;"></div>
<div style="left:52px;top:629px;width:2px;height:20px;background:#24282e;"></div>
<div style="left:54px;top:629px;width:1px;height:20px;background:#8a8d92;"></div>
<div style="left:59px;top:629px;width:2px;height:20px;background:#24282e;"></div>
<div style="left:61px;top:629px;width:1px;height:20px;background:#8a8d92;"></div>
<div style="left:111px;top:629px;width:2px;height:20px;background:#24282e;"></div>
<div style="left:113px;top:629px;width:1px;height:20px;background:#8a8d92;"></div>
<div style="left:118px;top:629px;width:2px;height:20px;background:#24282e;"></div>
<div style="left:120px;top:629px;width:1px;height:20px;background:#8a8d92;"></div>
<div style="left:129px;top:629px;width:2px;height:20px;background:#24282e;"></div>
<div style="left:131px;top:629px;width:1px;height:20px;background:#8a8d92;"></div>
<div style="left:146px;top:629px;width:2px;height:20px;background:#24282e;"></div>
<div style="left:148px;top:629px;width:1px;height:20px;background:#8a8d92;"></div>
<div style="left:175px;top:629px;width:2px;height:20px;background:#24282e;"></div>
<div style="left:177px;top:629px;width:1px;height:20px;background:#8a8d92;"></div>
<div style="left:182px;top:629px;width:2px;height:20px;background:#24282e;"></div>
<div style="left:184px;top:629px;width:1px;height:20px;background:#8a8d92;"></div>
<div style="left:203px;top:629px;width:2px;height:20px;background:#24282e;"></div>
<div style="left:205px;top:629px;width:1px;height:20px;background:#8a8d92;"></div>
<div style="left:213px;top:629px;width:2px;height:20px;background:#24282e;"></div>
<div style="left:215px;top:629px;width:1px;height:20px;background:#8a8d92;"></div>
<div style="left:236px;top:629px;width:2px;height:20px;background:#24282e;"></div>
<div style="left:238px;top:629px;width:1px;height:20px;background:#8a8d92;"></div>
<div style="left:247px;top:629px;width:2px;height:20px;background:#24282e;"></div>
<div style="left:249px;top:629px;width:1px;height:20px;background:#8a8d92;"></div>
<div style="left:320px;top:629px;width:2px;height:20px;background:#24282e;"></div>
<div style="left:322px;top:629px;width:1px;height:20px;background:#8a8d92;"></div>
<div style="left:328px;top:629px;width:2px;height:20px;background:#24282e;"></div>
<div style="left:330px;top:629px;width:1px;height:20px;background:#8a8d92;"></div>
<div style="left:361px;top:629px;width:2px;height:20px;background:#24282e;"></div>
<div style="left:363px;top:629px;width:1px;height:20px;background:#8a8d92;"></div>
<div style="left:403px;top:629px;width:2px;height:20px;background:#24282e;"></div>
<div style="left:405px;top:629px;width:1px;height:20px;background:#8a8d92;"></div>
<div style="left:432px;top:629px;width:2px;height:20px;background:#24282e;"></div>
<div style="left:434px;top:629px;width:1px;height:20px;background:#8a8d92;"></div>
<div style="left:438px;top:629px;width:2px;height:20px;background:#24282e;"></div>
<div style="left:440px;top:629px;width:1px;height:20px;background:#8a8d92;"></div>
<div style="left:465px;top:629px;width:2px;height:20px;background:#24282e;"></div>
<div style="left:467px;top:629px;width:1px;height:20px;background:#8a8d92;"></div>
<div style="left:551px;top:629px;width:2px;height:20px;background:#24282e;"></div>
<div style="left:553px;top:629px;width:1px;height:20px;background:#8a8d92;"></div>
<div style="left:579px;top:629px;width:2px;height:20px;background:#24282e;"></div>
<div style="left:581px;top:629px;width:1px;height:20px;background:#8a8d92;"></div>
<div style="left:589px;top:629px;width:2px;height:20px;background:#24282e;"></div>
<div style="left:591px;top:629px;width:1px;height:20px;background:#8a8d92;"></div>
<div style="left:601px;top:629px;width:2px;height:20px;background:#24282e;"></div>
<div style="left:603px;top:629px;width:1px;height:20px;background:#8a8d92;"></div>
<div style="left:645px;top:629px;width:2px;height:20px;background:#24282e;"></div>
<div style="left:647px;top:629px;width:1px;height:20px;background:#8a8d92;"></div>
<div style="left:652px;top:629px;width:2px;height:20px;background:#24282e;"></div>
<div style="left:654px;top:629px;width:1px;height:20px;background:#8a8d92;"></div>
<div style="left:671px;top:629px;width:2px;height:20px;background:#24282e;"></div>
<div style="left:673px;top:629px;width:1px;height:20px;background:#8a8d92;"></div>
<div style="left:688px;top:629px;width:2px;height:20px;background:#24282e;"></div>
<div style="left:690px;top:629px;width:1px;height:20px;background:#8a8d92;"></div>
<div style="left:758px;top:629px;width:2px;height:20px;background:#24282e;"></div>
<div style="left:760px;top:629px;width:1px;height:20px;background:#8a8d92;"></div>
<div style="left:761px;top:629px;width:2px;height:20px;background:#24282e;"></div>
<div style="left:763px;top:629px;width:1px;height:20px;background:#8a8d92;"></div>
<div style="left:765px;top:629px;width:2px;height:20px;background:#24282e;"></div>
<div style="left:767px;top:629px;width:1px;height:20px;background:#8a8d92;"></div>
<div style="left:802px;top:629px;width:2px;height:20px;background:#24282e;"></div>
<div style="left:804px;top:629px;width:1px;height:20px;background:#8a8d92;"></div>
<div style="left:887px;top:629px;width:2px;height:20px;background:#24282e;"></div>
<div style="left:889px;top:629px;width:1px;height:20px;background:#8a8d92;"></div>
<div style="left:947px;top:629px;width:2px;height:20px;background:#24282e;"></div>
<div style="left:949px;top:629px;width:1px;height:20px;background:#8a8d92;"></div>
<div style="left:952px;top:629px;width:2px;height:20px;background:#24282e;"></div>
<div style="left:954px;top:629px;width:1px;height:20px;background:#8a8d92;"></div>
<div style="left:970px;top:629px;width:2px;height:20px;background:#24282e;"></div>
<div style="left:972px;top:629px;width:1px;height:20px;background:#8a8d92;"></div>
<div style="left:986px;top:629px;width:2px;height:20px;background:#24282e;"></div>
<div style="left:988px;top:629px;width:1px;height:20px;background:#8a8d92;"></div>
<div style="left:1070px;top:629px;width:2px;height:20px;background:#24282e;"></div>
<div style="left:1072px;top:629px;width:1px;height:20px;background:#8a8d92;"></div>
<div style="left:1079px;top:629px;width:2px;height:20px;background:#24282e;"></div>
<div style="left:1081px;top:629px;width:1px;height:20px;background:#8a8d92;"></div>
<div style="left:1095px;top:629px;width:2px;height:20px;background:#24282e;"></div>
<div style="left:1097px;top:629px;width:1px;height:20px;background:#8a8d92;"></div>
<div style="left:1125px;top:629px;width:2px;height:20px;background:#24282e;"></div>
<div style="left:1127px;top:629px;width:1px;height:20px;background:#8a8d92;"></div>
<div style="left:1141px;top:629px;width:2px;height:20px;background:#24282e;"></div>
<div style="left:1143px;top:629px;width:1px;height:20px;background:#8a8d92;"></div>
<div style="left:1154px;top:629px;width:2px;height:20px;background:#24282e;"></div>
<div style="left:1156px;top:629px;width:1px;height:20px;background:#8a8d92;"></div>
<div style="left:1202px;top:629px;width:2px;height:20px;background:#24282e;"></div>
<div style="left:1204px;top:629px;width:1px;height:20px;background:#8a8d92;"></div>
<div style="left:1224px;top:629px;width:2px;height:20px;background:#24282e;"></div>
<div style="left:1226px;top:629px;width:1px;height:20px;background:#8a8d92;"></div>
<div style="left:1264px;top:629px;width:2px;height:20px;background:#24282e;"></div>
<div style="left:1266px;top:629px;width:1px;height:20px;background:#8a8d92;"></div>
<div style="left:1273px;top:629px;width:2px;height:20px;background:#24282e;"></div>
<div style="left:1275px;top:629px;width:1px;height:20px;background:#8a8d92;"></div>
<div class="fx fa" style="left:75px;top:633px"><svg width="16" height="15" style="left:-1.5px;top:-1.5px"><path d="M3.3 12.8L6.6 4.2Q7.1 2.9 9 2.9M4.8 6H8.3M8 5.9L11.8 12.4M12.6 5.7L7.5 12.7" stroke="#111" stroke-width="1.1" fill="none"/></svg></div>
<div class="fx fa" style="left:263px;top:633px"><svg width="16" height="15" style="left:-1.5px;top:-1.5px"><path d="M3.3 12.8L6.6 4.2Q7.1 2.9 9 2.9M4.8 6H8.3M8 5.9L11.8 12.4M12.6 5.7L7.5 12.7" stroke="#111" stroke-width="1.1" fill="none"/></svg></div>
<div class="fx fa" style="left:377px;top:633px"><svg width="16" height="15" style="left:-1.5px;top:-1.5px"><path d="M3.3 12.8L6.6 4.2Q7.1 2.9 9 2.9M4.8 6H8.3M8 5.9L11.8 12.4M12.6 5.7L7.5 12.7" stroke="#111" stroke-width="1.1" fill="none"/></svg></div>
<div class="fx fa" style="left:481px;top:633px"><svg width="16" height="15" style="left:-1.5px;top:-1.5px"><path d="M3.3 12.8L6.6 4.2Q7.1 2.9 9 2.9M4.8 6H8.3M8 5.9L11.8 12.4M12.6 5.7L7.5 12.7" stroke="#111" stroke-width="1.1" fill="none"/></svg></div>
<div class="fx fa" style="left:617px;top:633px"><svg width="16" height="15" style="left:-1.5px;top:-1.5px"><path d="M3.3 12.8L6.6 4.2Q7.1 2.9 9 2.9M4.8 6H8.3M8 5.9L11.8 12.4M12.6 5.7L7.5 12.7" stroke="#111" stroke-width="1.1" fill="none"/></svg></div>
<div class="fx fa" style="left:704px;top:633px"><svg width="16" height="15" style="left:-1.5px;top:-1.5px"><path d="M3.3 12.8L6.6 4.2Q7.1 2.9 9 2.9M4.8 6H8.3M8 5.9L11.8 12.4M12.6 5.7L7.5 12.7" stroke="#111" stroke-width="1.1" fill="none"/></svg></div>
<div class="fx fa" style="left:818px;top:633px"><svg width="16" height="15" style="left:-1.5px;top:-1.5px"><path d="M3.3 12.8L6.6 4.2Q7.1 2.9 9 2.9M4.8 6H8.3M8 5.9L11.8 12.4M12.6 5.7L7.5 12.7" stroke="#111" stroke-width="1.1" fill="none"/></svg></div>
<div class="fx fa" style="left:903px;top:633px"><svg width="16" height="15" style="left:-1.5px;top:-1.5px"><path d="M3.3 12.8L6.6 4.2Q7.1 2.9 9 2.9M4.8 6H8.3M8 5.9L11.8 12.4M12.6 5.7L7.5 12.7" stroke="#111" stroke-width="1.1" fill="none"/></svg></div>
<div class="fx fa" style="left:1002px;top:633px"><svg width="16" height="15" style="left:-1.5px;top:-1.5px"><path d="M3.3 12.8L6.6 4.2Q7.1 2.9 9 2.9M4.8 6H8.3M8 5.9L11.8 12.4M12.6 5.7L7.5 12.7" stroke="#111" stroke-width="1.1" fill="none"/></svg></div>
<div class="fx fa" style="left:1170px;top:633px"><svg width="16" height="15" style="left:-1.5px;top:-1.5px"><path d="M3.3 12.8L6.6 4.2Q7.1 2.9 9 2.9M4.8 6H8.3M8 5.9L11.8 12.4M12.6 5.7L7.5 12.7" stroke="#111" stroke-width="1.1" fill="none"/></svg></div>
<div class="fx fa" style="left:1240px;top:633px"><svg width="16" height="15" style="left:-1.5px;top:-1.5px"><path d="M3.3 12.8L6.6 4.2Q7.1 2.9 9 2.9M4.8 6H8.3M8 5.9L11.8 12.4M12.6 5.7L7.5 12.7" stroke="#111" stroke-width="1.1" fill="none"/></svg></div>
<div class="fx fa" style="left:1289px;top:633px"><svg width="16" height="15" style="left:-1.5px;top:-1.5px"><path d="M3.3 12.8L6.6 4.2Q7.1 2.9 9 2.9M4.8 6H8.3M8 5.9L11.8 12.4M12.6 5.7L7.5 12.7" stroke="#111" stroke-width="1.1" fill="none"/></svg></div>
<div style="left:16px;top:649px;width:2px;height:21px;background:#24282e;"></div>
<div style="left:18px;top:649px;width:1px;height:21px;background:#8a8d92;"></div>
<div style="left:34px;top:649px;width:2px;height:21px;background:#24282e;"></div>
<div style="left:36px;top:649px;width:1px;height:21px;background:#8a8d92;"></div>
<div style="left:52px;top:649px;width:2px;height:21px;background:#24282e;"></div>
<div style="left:54px;top:649px;width:1px;height:21px;background:#8a8d92;"></div>
<div style="left:59px;top:649px;width:2px;height:21px;background:#24282e;"></div>
<div style="left:61px;top:649px;width:1px;height:21px;background:#8a8d92;"></div>
<div style="left:111px;top:649px;width:2px;height:21px;background:#24282e;"></div>
<div style="left:113px;top:649px;width:1px;height:21px;background:#8a8d92;"></div>
<div style="left:118px;top:649px;width:2px;height:21px;background:#24282e;"></div>
<div style="left:120px;top:649px;width:1px;height:21px;background:#8a8d92;"></div>
<div style="left:129px;top:649px;width:2px;height:21px;background:#24282e;"></div>
<div style="left:131px;top:649px;width:1px;height:21px;background:#8a8d92;"></div>
<div style="left:146px;top:649px;width:2px;height:21px;background:#24282e;"></div>
<div style="left:148px;top:649px;width:1px;height:21px;background:#8a8d92;"></div>
<div style="left:175px;top:649px;width:2px;height:21px;background:#24282e;"></div>
<div style="left:177px;top:649px;width:1px;height:21px;background:#8a8d92;"></div>
<div style="left:182px;top:649px;width:2px;height:21px;background:#24282e;"></div>
<div style="left:184px;top:649px;width:1px;height:21px;background:#8a8d92;"></div>
<div style="left:203px;top:649px;width:2px;height:21px;background:#24282e;"></div>
<div style="left:205px;top:649px;width:1px;height:21px;background:#8a8d92;"></div>
<div style="left:213px;top:649px;width:2px;height:21px;background:#24282e;"></div>
<div style="left:215px;top:649px;width:1px;height:21px;background:#8a8d92;"></div>
<div style="left:236px;top:649px;width:2px;height:21px;background:#24282e;"></div>
<div style="left:238px;top:649px;width:1px;height:21px;background:#8a8d92;"></div>
<div style="left:247px;top:649px;width:2px;height:21px;background:#24282e;"></div>
<div style="left:249px;top:649px;width:1px;height:21px;background:#8a8d92;"></div>
<div style="left:320px;top:649px;width:2px;height:21px;background:#24282e;"></div>
<div style="left:322px;top:649px;width:1px;height:21px;background:#8a8d92;"></div>
<div style="left:328px;top:649px;width:2px;height:21px;background:#24282e;"></div>
<div style="left:330px;top:649px;width:1px;height:21px;background:#8a8d92;"></div>
<div style="left:361px;top:649px;width:2px;height:21px;background:#24282e;"></div>
<div style="left:363px;top:649px;width:1px;height:21px;background:#8a8d92;"></div>
<div style="left:403px;top:649px;width:2px;height:21px;background:#24282e;"></div>
<div style="left:405px;top:649px;width:1px;height:21px;background:#8a8d92;"></div>
<div style="left:432px;top:649px;width:2px;height:21px;background:#24282e;"></div>
<div style="left:434px;top:649px;width:1px;height:21px;background:#8a8d92;"></div>
<div style="left:438px;top:649px;width:2px;height:21px;background:#24282e;"></div>
<div style="left:440px;top:649px;width:1px;height:21px;background:#8a8d92;"></div>
<div style="left:465px;top:649px;width:2px;height:21px;background:#24282e;"></div>
<div style="left:467px;top:649px;width:1px;height:21px;background:#8a8d92;"></div>
<div style="left:551px;top:649px;width:2px;height:21px;background:#24282e;"></div>
<div style="left:553px;top:649px;width:1px;height:21px;background:#8a8d92;"></div>
<div style="left:579px;top:649px;width:2px;height:21px;background:#24282e;"></div>
<div style="left:581px;top:649px;width:1px;height:21px;background:#8a8d92;"></div>
<div style="left:589px;top:649px;width:2px;height:21px;background:#24282e;"></div>
<div style="left:591px;top:649px;width:1px;height:21px;background:#8a8d92;"></div>
<div style="left:601px;top:649px;width:2px;height:21px;background:#24282e;"></div>
<div style="left:603px;top:649px;width:1px;height:21px;background:#8a8d92;"></div>
<div style="left:645px;top:649px;width:2px;height:21px;background:#24282e;"></div>
<div style="left:647px;top:649px;width:1px;height:21px;background:#8a8d92;"></div>
<div style="left:652px;top:649px;width:2px;height:21px;background:#24282e;"></div>
<div style="left:654px;top:649px;width:1px;height:21px;background:#8a8d92;"></div>
<div style="left:671px;top:649px;width:2px;height:21px;background:#24282e;"></div>
<div style="left:673px;top:649px;width:1px;height:21px;background:#8a8d92;"></div>
<div style="left:688px;top:649px;width:2px;height:21px;background:#24282e;"></div>
<div style="left:690px;top:649px;width:1px;height:21px;background:#8a8d92;"></div>
<div style="left:758px;top:649px;width:2px;height:21px;background:#24282e;"></div>
<div style="left:760px;top:649px;width:1px;height:21px;background:#8a8d92;"></div>
<div style="left:761px;top:649px;width:2px;height:21px;background:#24282e;"></div>
<div style="left:763px;top:649px;width:1px;height:21px;background:#8a8d92;"></div>
<div style="left:765px;top:649px;width:2px;height:21px;background:#24282e;"></div>
<div style="left:767px;top:649px;width:1px;height:21px;background:#8a8d92;"></div>
<div style="left:802px;top:649px;width:2px;height:21px;background:#24282e;"></div>
<div style="left:804px;top:649px;width:1px;height:21px;background:#8a8d92;"></div>
<div style="left:887px;top:649px;width:2px;height:21px;background:#24282e;"></div>
<div style="left:889px;top:649px;width:1px;height:21px;background:#8a8d92;"></div>
<div style="left:947px;top:649px;width:2px;height:21px;background:#24282e;"></div>
<div style="left:949px;top:649px;width:1px;height:21px;background:#8a8d92;"></div>
<div style="left:952px;top:649px;width:2px;height:21px;background:#24282e;"></div>
<div style="left:954px;top:649px;width:1px;height:21px;background:#8a8d92;"></div>
<div style="left:970px;top:649px;width:2px;height:21px;background:#24282e;"></div>
<div style="left:972px;top:649px;width:1px;height:21px;background:#8a8d92;"></div>
<div style="left:986px;top:649px;width:2px;height:21px;background:#24282e;"></div>
<div style="left:988px;top:649px;width:1px;height:21px;background:#8a8d92;"></div>
<div style="left:1070px;top:649px;width:2px;height:21px;background:#24282e;"></div>
<div style="left:1072px;top:649px;width:1px;height:21px;background:#8a8d92;"></div>
<div style="left:1079px;top:649px;width:2px;height:21px;background:#24282e;"></div>
<div style="left:1081px;top:649px;width:1px;height:21px;background:#8a8d92;"></div>
<div style="left:1095px;top:649px;width:2px;height:21px;background:#24282e;"></div>
<div style="left:1097px;top:649px;width:1px;height:21px;background:#8a8d92;"></div>
<div style="left:1125px;top:649px;width:2px;height:21px;background:#24282e;"></div>
<div style="left:1127px;top:649px;width:1px;height:21px;background:#8a8d92;"></div>
<div style="left:1141px;top:649px;width:2px;height:21px;background:#24282e;"></div>
<div style="left:1143px;top:649px;width:1px;height:21px;background:#8a8d92;"></div>
<div style="left:1154px;top:649px;width:2px;height:21px;background:#24282e;"></div>
<div style="left:1156px;top:649px;width:1px;height:21px;background:#8a8d92;"></div>
<div style="left:1202px;top:649px;width:2px;height:21px;background:#24282e;"></div>
<div style="left:1204px;top:649px;width:1px;height:21px;background:#8a8d92;"></div>
<div style="left:1224px;top:649px;width:2px;height:21px;background:#24282e;"></div>
<div style="left:1226px;top:649px;width:1px;height:21px;background:#8a8d92;"></div>
<div style="left:1264px;top:649px;width:2px;height:21px;background:#24282e;"></div>
<div style="left:1266px;top:649px;width:1px;height:21px;background:#8a8d92;"></div>
<div style="left:1273px;top:649px;width:2px;height:21px;background:#24282e;"></div>
<div style="left:1275px;top:649px;width:1px;height:21px;background:#8a8d92;"></div>
<div class="fx fa" style="left:75px;top:653px"><svg width="16" height="15" style="left:-1.5px;top:-1.5px"><path d="M3.3 12.8L6.6 4.2Q7.1 2.9 9 2.9M4.8 6H8.3M8 5.9L11.8 12.4M12.6 5.7L7.5 12.7" stroke="#111" stroke-width="1.1" fill="none"/></svg></div>
<div class="fx fa" style="left:263px;top:653px"><svg width="16" height="15" style="left:-1.5px;top:-1.5px"><path d="M3.3 12.8L6.6 4.2Q7.1 2.9 9 2.9M4.8 6H8.3M8 5.9L11.8 12.4M12.6 5.7L7.5 12.7" stroke="#111" stroke-width="1.1" fill="none"/></svg></div>
<div class="fx fa" style="left:377px;top:653px"><svg width="16" height="15" style="left:-1.5px;top:-1.5px"><path d="M3.3 12.8L6.6 4.2Q7.1 2.9 9 2.9M4.8 6H8.3M8 5.9L11.8 12.4M12.6 5.7L7.5 12.7" stroke="#111" stroke-width="1.1" fill="none"/></svg></div>
<div class="fx fa" style="left:481px;top:653px"><svg width="16" height="15" style="left:-1.5px;top:-1.5px"><path d="M3.3 12.8L6.6 4.2Q7.1 2.9 9 2.9M4.8 6H8.3M8 5.9L11.8 12.4M12.6 5.7L7.5 12.7" stroke="#111" stroke-width="1.1" fill="none"/></svg></div>
<div class="fx fa" style="left:617px;top:653px"><svg width="16" height="15" style="left:-1.5px;top:-1.5px"><path d="M3.3 12.8L6.6 4.2Q7.1 2.9 9 2.9M4.8 6H8.3M8 5.9L11.8 12.4M12.6 5.7L7.5 12.7" stroke="#111" stroke-width="1.1" fill="none"/></svg></div>
<div class="fx fa" style="left:704px;top:653px"><svg width="16" height="15" style="left:-1.5px;top:-1.5px"><path d="M3.3 12.8L6.6 4.2Q7.1 2.9 9 2.9M4.8 6H8.3M8 5.9L11.8 12.4M12.6 5.7L7.5 12.7" stroke="#111" stroke-width="1.1" fill="none"/></svg></div>
<div class="fx fa" style="left:818px;top:653px"><svg width="16" height="15" style="left:-1.5px;top:-1.5px"><path d="M3.3 12.8L6.6 4.2Q7.1 2.9 9 2.9M4.8 6H8.3M8 5.9L11.8 12.4M12.6 5.7L7.5 12.7" stroke="#111" stroke-width="1.1" fill="none"/></svg></div>
<div class="fx fa" style="left:903px;top:653px"><svg width="16" height="15" style="left:-1.5px;top:-1.5px"><path d="M3.3 12.8L6.6 4.2Q7.1 2.9 9 2.9M4.8 6H8.3M8 5.9L11.8 12.4M12.6 5.7L7.5 12.7" stroke="#111" stroke-width="1.1" fill="none"/></svg></div>
<div class="fx fa" style="left:1002px;top:653px"><svg width="16" height="15" style="left:-1.5px;top:-1.5px"><path d="M3.3 12.8L6.6 4.2Q7.1 2.9 9 2.9M4.8 6H8.3M8 5.9L11.8 12.4M12.6 5.7L7.5 12.7" stroke="#111" stroke-width="1.1" fill="none"/></svg></div>
<div class="fx fa" style="left:1170px;top:653px"><svg width="16" height="15" style="left:-1.5px;top:-1.5px"><path d="M3.3 12.8L6.6 4.2Q7.1 2.9 9 2.9M4.8 6H8.3M8 5.9L11.8 12.4M12.6 5.7L7.5 12.7" stroke="#111" stroke-width="1.1" fill="none"/></svg></div>
<div class="fx fa" style="left:1240px;top:653px"><svg width="16" height="15" style="left:-1.5px;top:-1.5px"><path d="M3.3 12.8L6.6 4.2Q7.1 2.9 9 2.9M4.8 6H8.3M8 5.9L11.8 12.4M12.6 5.7L7.5 12.7" stroke="#111" stroke-width="1.1" fill="none"/></svg></div>
<div class="fx fa" style="left:1289px;top:653px"><svg width="16" height="15" style="left:-1.5px;top:-1.5px"><path d="M3.3 12.8L6.6 4.2Q7.1 2.9 9 2.9M4.8 6H8.3M8 5.9L11.8 12.4M12.6 5.7L7.5 12.7" stroke="#111" stroke-width="1.1" fill="none"/></svg></div>
<div style="left:29px;top:546px;width:1px;height:83px;background:#1a1a1a;"></div>
<div style="left:30px;top:546px;width:1px;height:83px;background:#8c8f95;"></div>
<div style="left:176px;top:546px;width:1px;height:83px;background:#1a1a1a;"></div>
<div style="left:177px;top:546px;width:1px;height:83px;background:#8c8f95;"></div>
<div style="left:178px;top:546px;width:5px;height:83px;background:#151c26;"></div>
<div style="left:183px;top:546px;width:1px;height:83px;background:#8c8f95;"></div>
<div class="red" style="left:770px;top:546px"><span>+2;18</span></div>
<div class="red" style="left:770px;top:567px"><span>+2;18</span></div>
<div class="red" style="left:770px;top:587px"><span>+2;18</span></div>
<div class="red" style="left:770px;top:608px"><span>+2;18</span></div>
<div style="left:14px;top:463px;width:3px;height:207px;background:#1a1a1a;"></div>
<div style="left:14px;top:670px;width:1337px;height:35px;background:#2fd592;"></div>
<div style="left:14px;top:670px;width:4px;height:35px;background:#1e8a5c;"></div>
<svg class="abs" style="left:0;top:670px" width="1360" height="35"><path fill="#1d7650" d="M18 0h2l-1 1zM20 0h3l-1.5 5zM23 0h3l-1.5 3zM26 0h4l-2 1zM38 0h2l-1 1zM40 0h3l-1.5 2zM45 0h3l-1.5 5zM48 0h4l-2 4zM52 0h3l-1.5 4zM59 0h4l-2 2zM66 0h2l-1 1zM68 0h4l-2 2zM72 0h3l-1.5 5zM79 0h4l-2 5zM83 0h4l-2 4zM90 0h3l-1.5 3zM97 0h3l-1.5 5zM100 0h4l-2 4zM104 0h2l-1 4zM110 0h3l-1.5 3zM117 0h3l-1.5 4zM120 0h3l-1.5 5zM123 0h3l-1.5 2zM126 0h3l-1.5 1zM129 0h3l-1.5 4zM132 0h4l-2 5zM136 0h4l-2 1zM140 0h4l-2 3zM144 0h3l-1.5 4zM147 0h2l-1 1zM149 0h3l-1.5 2zM152 0h3l-1.5 4zM155 0h3l-1.5 2zM158 0h4l-2 2zM162 0h4l-2 1zM166 0h2l-1 3zM171 0h2l-1 4zM173 0h2l-1 1zM175 0h4l-2 2zM179 0h3l-1.5 2zM182 0h3l-1.5 5zM185 0h4l-2 4zM189 0h2l-1 2zM197 0h4l-2 2zM201 0h3l-1.5 2zM204 0h4l-2 4zM210 0h3l-1.5 1zM213 0h4l-2 1zM217 0h3l-1.5 2zM220 0h3l-1.5 3zM223 0h3l-1.5 5zM226 0h2l-1 2zM228 0h3l-1.5 3zM231 0h3l-1.5 3zM234 0h3l-1.5 1zM237 0h2l-1 2zM239 0h2l-1 5zM241 0h2l-1 5zM243 0h4l-2 4zM247 0h3l-1.5 2zM250 0h2l-1 3zM252 0h4l-2 4zM260 0h4l-2 1zM264 0h3l-1.5 5zM267 0h4l-2 2zM271 0h2l-1 3zM277 0h2l-1 1zM279 0h4l-2 1zM283 0h4l-2 2zM287 0h4l-2 2zM295 0h3l-1.5 3zM298 0h2l-1 5zM300 0h2l-1 4zM302 0h4l-2 2zM306 0h4l-2 2zM310 0h3l-1.5 5zM313 0h4l-2 2zM317 0h2l-1 1zM319 0h4l-2 3zM323 0h3l-1.5 5zM326 0h3l-1.5 2zM329 0h4l-2 3zM333 0h2l-1 3zM335 0h3l-1.5 2zM338 0h3l-1.5 2zM341 0h3l-1.5 2zM347 0h2l-1 5zM349 0h3l-1.5 5zM352 0h3l-1.5 3zM355 0h2l-1 1zM359 0h3l-1.5 2zM362 0h2l-1 4zM364 0h3l-1.5 2zM367 0h3l-1.5 1zM370 0h3l-1.5 4zM373 0h3l-1.5 5zM376 0h3l-1.5 2zM379 0h3l-1.5 1zM382 0h2l-1 2zM384 0h3l-1.5 1zM387 0h2l-1 3zM389 0h3l-1.5 3zM392 0h3l-1.5 3zM395 0h3l-1.5 4zM398 0h3l-1.5 4zM401 0h3l-1.5 2zM415 0h2l-1 2zM417 0h3l-1.5 4zM420 0h4l-2 3zM424 0h4l-2 2zM428 0h3l-1.5 3zM431 0h2l-1 3zM433 0h4l-2 1zM437 0h4l-2 3zM441 0h2l-1 4zM443 0h3l-1.5 1zM446 0h4l-2 4zM450 0h2l-1 5zM452 0h2l-1 2zM454 0h4l-2 1zM458 0h4l-2 5zM462 0h3l-1.5 5zM465 0h4l-2 5zM472 0h3l-1.5 2zM475 0h4l-2 2zM479 0h3l-1.5 3zM482 0h4l-2 4zM486 0h3l-1.5 5zM489 0h3l-1.5 1zM492 0h3l-1.5 1zM495 0h3l-1.5 1zM500 0h4l-2 1zM504 0h3l-1.5 1zM507 0h4l-2 2zM511 0h3l-1.5 4zM514 0h2l-1 5zM519 0h3l-1.5 5zM522 0h2l-1 2zM527 0h3l-1.5 5zM530 0h3l-1.5 2zM533 0h4l-2 4zM537 0h2l-1 5zM539 0h4l-2 2zM543 0h3l-1.5 2zM546 0h3l-1.5 3zM549 0h3l-1.5 4zM552 0h2l-1 3zM554 0h3l-1.5 1zM557 0h3l-1.5 5zM560 0h3l-1.5 3zM563 0h3l-1.5 2zM566 0h2l-1 2zM568 0h3l-1.5 3zM571 0h4l-2 4zM575 0h2l-1 3zM577 0h3l-1.5 1zM580 0h2l-1 4zM582 0h3l-1.5 2zM585 0h3l-1.5 3zM588 0h2l-1 4zM590 0h3l-1.5 2zM593 0h3l-1.5 4zM596 0h4l-2 1zM600 0h4l-2 2zM604 0h4l-2 4zM608 0h4l-2 3zM612 0h3l-1.5 2zM615 0h4l-2 5zM619 0h3l-1.5 3zM622 0h2l-1 4zM624 0h3l-1.5 2zM627 0h3l-1.5 2zM630 0h4l-2 3zM634 0h2l-1 2zM636 0h2l-1 2zM638 0h3l-1.5 2zM641 0h3l-1.5 2zM644 0h3l-1.5 4zM650 0h3l-1.5 3zM653 0h2l-1 5zM658 0h4l-2 4zM665 0h3l-1.5 4zM668 0h3l-1.5 2zM671 0h4l-2 5zM678 0h2l-1 2zM680 0h3l-1.5 2zM683 0h3l-1.5 1zM686 0h2l-1 3zM690 0h2l-1 4zM692 0h3l-1.5 2zM695 0h3l-1.5 3zM698 0h2l-1 3zM700 0h4l-2 2zM704 0h3l-1.5 3zM707 0h4l-2 3zM711 0h3l-1.5 3zM714 0h3l-1.5 1zM719 0h3l-1.5 2zM722 0h3l-1.5 3zM725 0h3l-1.5 1zM728 0h4l-2 5zM732 0h3l-1.5 2zM735 0h4l-2 2zM739 0h2l-1 3zM741 0h2l-1 3zM743 0h4l-2 5zM747 0h3l-1.5 3zM750 0h4l-2 1zM754 0h2l-1 2zM756 0h2l-1 2zM758 0h3l-1.5 4zM761 0h3l-1.5 1zM764 0h3l-1.5 2zM767 0h4l-2 2zM771 0h4l-2 2zM775 0h3l-1.5 2zM781 0h3l-1.5 2zM784 0h4l-2 3zM788 0h2l-1 3zM790 0h2l-1 5zM792 0h4l-2 3zM796 0h3l-1.5 2zM799 0h3l-1.5 2zM802 0h4l-2 1zM806 0h3l-1.5 2zM809 0h3l-1.5 5zM812 0h2l-1 1zM817 0h2l-1 1zM819 0h4l-2 1zM823 0h2l-1 2zM825 0h4l-2 2zM829 0h2l-1 5zM831 0h2l-1 3zM833 0h3l-1.5 4zM836 0h3l-1.5 1zM839 0h2l-1 5zM841 0h2l-1 4zM843 0h4l-2 4zM851 0h4l-2 2zM855 0h3l-1.5 5zM858 0h3l-1.5 1zM861 0h3l-1.5 5zM866 0h4l-2 3zM870 0h2l-1 3zM872 0h3l-1.5 2zM875 0h3l-1.5 5zM878 0h4l-2 1zM882 0h4l-2 5zM892 0h4l-2 5zM896 0h4l-2 2zM900 0h3l-1.5 2zM903 0h3l-1.5 4zM909 0h2l-1 1zM911 0h3l-1.5 4zM914 0h2l-1 2zM916 0h4l-2 2zM920 0h2l-1 3zM922 0h3l-1.5 4zM925 0h2l-1 5zM927 0h4l-2 1zM931 0h2l-1 5zM933 0h3l-1.5 2zM936 0h2l-1 1zM938 0h3l-1.5 3zM941 0h3l-1.5 2zM944 0h3l-1.5 4zM947 0h3l-1.5 1zM950 0h3l-1.5 2zM953 0h3l-1.5 2zM956 0h3l-1.5 4zM959 0h4l-2 4zM965 0h4l-2 5zM969 0h3l-1.5 2zM972 0h4l-2 4zM976 0h4l-2 2zM980 0h2l-1 1zM982 0h2l-1 1zM984 0h2l-1 2zM986 0h4l-2 3zM990 0h4l-2 2zM994 0h3l-1.5 5zM999 0h3l-1.5 5zM1006 0h4l-2 2zM1010 0h3l-1.5 2zM1013 0h3l-1.5 5zM1016 0h3l-1.5 4zM1019 0h3l-1.5 2zM1022 0h3l-1.5 2zM1025 0h2l-1 4zM1027 0h4l-2 5zM1031 0h3l-1.5 5zM1038 0h3l-1.5 4zM1041 0h4l-2 2zM1045 0h3l-1.5 1zM1048 0h3l-1.5 3zM1051 0h3l-1.5 5zM1056 0h3l-1.5 1zM1059 0h2l-1 3zM1061 0h3l-1.5 2zM1064 0h2l-1 2zM1066 0h4l-2 1zM1074 0h3l-1.5 5zM1077 0h2l-1 2zM1079 0h4l-2 4zM1083 0h3l-1.5 4zM1092 0h2l-1 4zM1094 0h3l-1.5 3zM1097 0h2l-1 4zM1099 0h3l-1.5 2zM1105 0h4l-2 1zM1109 0h2l-1 2zM1111 0h3l-1.5 2zM1114 0h2l-1 2zM1116 0h4l-2 2zM1120 0h2l-1 1zM1122 0h3l-1.5 5zM1127 0h2l-1 5zM1129 0h4l-2 2zM1136 0h3l-1.5 4zM1139 0h3l-1.5 3zM1146 0h3l-1.5 2zM1149 0h2l-1 2zM1151 0h4l-2 3zM1155 0h3l-1.5 1zM1158 0h4l-2 3zM1162 0h2l-1 3zM1164 0h3l-1.5 2zM1167 0h3l-1.5 1zM1170 0h4l-2 3zM1174 0h4l-2 4zM1178 0h3l-1.5 1zM1181 0h2l-1 1zM1183 0h2l-1 4zM1185 0h3l-1.5 2zM1188 0h3l-1.5 4zM1191 0h3l-1.5 1zM1194 0h2l-1 1zM1196 0h3l-1.5 2zM1199 0h3l-1.5 4zM1202 0h4l-2 2zM1209 0h2l-1 4zM1211 0h3l-1.5 5zM1214 0h3l-1.5 3zM1217 0h2l-1 5zM1223 0h3l-1.5 1zM1228 0h4l-2 5zM1232 0h2l-1 3zM1234 0h3l-1.5 5zM1237 0h4l-2 2zM1241 0h4l-2 2zM1248 0h3l-1.5 2zM1251 0h2l-1 5zM1253 0h3l-1.5 5zM1256 0h3l-1.5 2zM1259 0h3l-1.5 2zM1262 0h3l-1.5 5zM1265 0h3l-1.5 2zM1268 0h3l-1.5 1zM1271 0h3l-1.5 2zM1274 0h4l-2 5zM1278 0h4l-2 3zM1282 0h4l-2 1zM1286 0h3l-1.5 2zM1289 0h4l-2 3zM1296 0h4l-2 1zM1300 0h4l-2 1zM1308 0h4l-2 5zM1312 0h3l-1.5 2zM1315 0h3l-1.5 2zM1318 0h3l-1.5 2zM1321 0h4l-2 2zM1325 0h2l-1 3zM1327 0h2l-1 2zM1329 0h3l-1.5 5zM1332 0h3l-1.5 2zM1335 0h3l-1.5 2zM1338 0h3l-1.5 2zM1341 0h3l-1.5 2zM1344 0h3l-1.5 3zM1347 0h3l-1.5 3zM20 0h2L21.7 15h-1.4zM26 0h2L27.7 12h-1.4zM36 0h2L37.7 20h-1.4zM40 0h1v8h-1zM48 0h1v22h-1zM56 0h2L57.7 33h-1.4zM62 0h2L63.7 5h-1.4zM65 0h1v32h-1zM72 0h1v3h-1zM74 0h1v18h-1zM77 0h3L79.55 12h-2.1zM81 0h4L84.4 30h-2.8zM88 0h2L89.7 33h-1.4zM98 0h2L99.7 3h-1.4zM108 0h2L109.7 22h-1.4zM111 0h2L112.7 18h-1.4zM114 0h1v22h-1zM121 0h4L124.4 25h-2.8zM134 0h2L135.7 22h-1.4zM141 0h1v4h-1zM144 0h1v5h-1zM148 0h2L149.7 18h-1.4zM156 0h3L158.55 18h-2.1zM159 0h3L161.55 22h-2.1zM165 0h4L168.4 32h-2.8zM169 0h3L171.55 10h-2.1zM182 0h2L183.7 4h-1.4zM188 0h4L191.4 15h-2.8zM196 0h3L198.55 6h-2.1zM209 0h2L210.7 12h-1.4zM219 0h3L221.55 32h-2.1zM232 0h1v33h-1zM242 0h2L243.7 20h-1.4zM246 0h2L247.7 20h-1.4zM253 0h1v20h-1zM259 0h2L260.7 5h-1.4zM269 0h4L272.4 20h-2.8zM276 0h3L278.55 30h-2.1zM280 0h3L282.55 33h-2.1zM293 0h3L295.55 8h-2.1zM303 0h4L306.4 18h-2.8zM311 0h1v8h-1zM314 0h4L317.4 5h-2.8zM321 0h3L323.55 12h-2.1zM327 0h1v4h-1zM329 0h2L330.7 4h-1.4zM337 0h1v30h-1zM343 0h3L345.55 5h-2.1zM347 0h4L350.4 15h-2.8zM350 0h4L353.4 25h-2.8zM354 0h2L355.7 25h-1.4zM364 0h1v4h-1zM372 0h4L375.4 5h-2.8zM380 0h3L382.55 12h-2.1zM388 0h1v4h-1zM390 0h4L393.4 18h-2.8zM393 0h4L396.4 5h-2.8zM403 0h1v5h-1zM407 0h3L409.55 4h-2.1zM415 0h1v18h-1zM421 0h3L423.55 22h-2.1zM427 0h2L428.7 6h-1.4zM433 0h4L436.4 12h-2.8zM446 0h4L449.4 20h-2.8zM448 0h4L451.4 8h-2.8zM461 0h2L462.7 15h-1.4zM464 0h2L465.7 3h-1.4zM468 0h4L471.4 5h-2.8zM476 0h1v33h-1zM480 0h3L482.55 30h-2.1zM482 0h2L483.7 18h-1.4zM484 0h3L486.55 5h-2.1zM488 0h4L491.4 4h-2.8zM496 0h4L499.4 10h-2.8zM504 0h3L506.55 25h-2.1zM507 0h2L508.7 5h-1.4zM513 0h3L515.55 28h-2.1zM520 0h2L521.7 32h-1.4zM524 0h1v5h-1zM534 0h4L537.4 5h-2.8zM541 0h2L542.7 8h-1.4zM554 0h1v33h-1zM564 0h2L565.7 28h-1.4zM573 0h1v22h-1zM577 0h3L579.55 5h-2.1zM586 0h3L588.55 33h-2.1zM593 0h1v6h-1zM596 0h2L597.7 5h-1.4zM600 0h1v8h-1zM602 0h1v8h-1zM613 0h2L614.7 10h-1.4zM624 0h4L627.4 5h-2.8zM628 0h4L631.4 32h-2.8zM637 0h2L638.7 30h-1.4zM646 0h4L649.4 20h-2.8zM653 0h2L654.7 28h-1.4zM664 0h1v18h-1zM673 0h3L675.55 20h-2.1zM679 0h2L680.7 5h-1.4zM685 0h1v4h-1zM694 0h3L696.55 12h-2.1zM697 0h1v32h-1zM703 0h1v3h-1zM705 0h2L706.7 30h-1.4zM709 0h3L711.55 33h-2.1zM710 0h2L711.7 4h-1.4zM711 0h3L713.55 33h-2.1zM715 0h1v30h-1zM719 0h3L721.55 18h-2.1zM726 0h1v18h-1zM733 0h3L735.55 8h-2.1zM737 0h4L740.4 8h-2.8zM742 0h3L744.55 32h-2.1zM746 0h1v8h-1zM754 0h1v32h-1zM757 0h2L758.7 30h-1.4zM759 0h2L760.7 32h-1.4zM762 0h2L763.7 32h-1.4zM765 0h1v33h-1zM768 0h2L769.7 32h-1.4zM772 0h2L773.7 8h-1.4zM776 0h3L778.55 8h-2.1zM784 0h2L785.7 18h-1.4zM788 0h4L791.4 18h-2.8zM791 0h4L794.4 4h-2.8zM795 0h2L796.7 20h-1.4zM802 0h2L803.7 22h-1.4zM809 0h2L810.7 25h-1.4zM810 0h3L812.55 15h-2.1zM817 0h3L819.55 32h-2.1zM819 0h1v5h-1zM827 0h1v12h-1zM831 0h4L834.4 4h-2.8zM838 0h2L839.7 18h-1.4zM841 0h4L844.4 22h-2.8zM845 0h4L848.4 28h-2.8zM850 0h3L852.55 32h-2.1zM851 0h2L852.7 15h-1.4zM853 0h1v8h-1zM860 0h1v28h-1zM861 0h3L863.55 22h-2.1zM868 0h2L869.7 6h-1.4zM872 0h3L874.55 32h-2.1zM880 0h3L882.55 12h-2.1zM882 0h4L885.4 15h-2.8zM886 0h2L887.7 28h-1.4zM894 0h1v3h-1zM896 0h1v5h-1zM901 0h3L903.55 6h-2.1zM905 0h3L907.55 8h-2.1zM912 0h3L914.55 33h-2.1zM919 0h4L922.4 25h-2.8zM923 0h2L924.7 22h-1.4zM927 0h2L928.7 5h-1.4zM935 0h4L938.4 18h-2.8zM937 0h3L939.55 32h-2.1zM944 0h3L946.55 32h-2.1zM948 0h3L950.55 3h-2.1zM951 0h3L953.55 5h-2.1zM953 0h4L956.4 5h-2.8zM955 0h2L956.7 15h-1.4zM963 0h2L964.7 4h-1.4zM967 0h1v10h-1zM969 0h3L971.55 6h-2.1zM977 0h1v28h-1zM979 0h1v5h-1zM980 0h2L981.7 6h-1.4zM982 0h3L984.55 32h-2.1zM987 0h2L988.7 22h-1.4zM991 0h2L992.7 12h-1.4zM996 0h1v3h-1zM1000 0h3L1002.55 3h-2.1zM1003 0h2L1004.7 30h-1.4zM1005 0h2L1006.7 8h-1.4zM1006 0h1v25h-1zM1010 0h2L1011.7 6h-1.4zM1014 0h1v6h-1zM1015 0h2L1016.7 12h-1.4zM1018 0h4L1021.4 18h-2.8zM1019 0h3L1021.55 6h-2.1zM1023 0h1v15h-1zM1030 0h1v22h-1zM1031 0h1v5h-1zM1035 0h3L1037.55 8h-2.1zM1042 0h3L1044.55 6h-2.1zM1049 0h3L1051.55 18h-2.1zM1054 0h4L1057.4 10h-2.8zM1059 0h2L1060.7 28h-1.4zM1061 0h2L1062.7 33h-1.4zM1062 0h1v4h-1zM1066 0h3L1068.55 25h-2.1zM1068 0h3L1070.55 4h-2.1zM1072 0h4L1075.4 28h-2.8zM1075 0h3L1077.55 25h-2.1zM1078 0h4L1081.4 5h-2.8zM1081 0h2L1082.7 6h-1.4zM1088 0h3L1090.55 12h-2.1zM1092 0h1v10h-1zM1094 0h3L1096.55 22h-2.1zM1099 0h1v4h-1zM1103 0h1v30h-1zM1104 0h3L1106.55 30h-2.1zM1105 0h3L1107.55 8h-2.1zM1106 0h2L1107.7 3h-1.4zM1110 0h4L1113.4 6h-2.8zM1115 0h1v25h-1zM1120 0h1v6h-1zM1123 0h2L1124.7 22h-1.4zM1125 0h1v20h-1zM1126 0h2L1127.7 25h-1.4zM1127 0h1v10h-1zM1128 0h3L1130.55 5h-2.1zM1129 0h3L1131.55 32h-2.1zM1134 0h3L1136.55 3h-2.1zM1138 0h3L1140.55 8h-2.1zM1142 0h4L1145.4 25h-2.8zM1149 0h1v8h-1zM1156 0h3L1158.55 22h-2.1zM1158 0h1v22h-1zM1163 0h1v5h-1zM1167 0h2L1168.7 12h-1.4zM1168 0h2L1169.7 5h-1.4zM1175 0h3L1177.55 12h-2.1zM1179 0h3L1181.55 32h-2.1zM1182 0h1v20h-1zM1183 0h2L1184.7 33h-1.4zM1187 0h2L1188.7 18h-1.4zM1194 0h1v8h-1zM1198 0h3L1200.55 6h-2.1zM1201 0h4L1204.4 5h-2.8zM1204 0h4L1207.4 20h-2.8zM1208 0h3L1210.55 25h-2.1zM1213 0h2L1214.7 20h-1.4zM1220 0h4L1223.4 18h-2.8zM1221 0h2L1222.7 30h-1.4zM1222 0h1v33h-1zM1229 0h2L1230.7 22h-1.4zM1233 0h2L1234.7 33h-1.4zM1234 0h3L1236.55 10h-2.1zM1238 0h3L1240.55 33h-2.1zM1243 0h2L1244.7 20h-1.4zM1246 0h4L1249.4 10h-2.8zM1250 0h3L1252.55 20h-2.1zM1254 0h4L1257.4 8h-2.8zM1258 0h1v18h-1zM1262 0h4L1265.4 5h-2.8zM1266 0h4L1269.4 25h-2.8zM1268 0h3L1270.55 5h-2.1zM1272 0h1v6h-1zM1276 0h3L1278.55 8h-2.1zM1281 0h1v12h-1zM1282 0h2L1283.7 8h-1.4zM1285 0h1v3h-1zM1292 0h1v15h-1zM1294 0h2L1295.7 32h-1.4zM1296 0h2L1297.7 20h-1.4zM1300 0h2L1301.7 8h-1.4zM1305 0h2L1306.7 3h-1.4zM1312 0h2L1313.7 6h-1.4zM1317 0h4L1320.4 20h-2.8zM1319 0h1v12h-1zM1323 0h1v6h-1zM1330 0h2L1331.7 12h-1.4zM1337 0h2L1338.7 28h-1.4zM1339 0h2L1340.7 4h-1.4zM1347 0h2L1348.7 15h-1.4zM717 0h10v30l-3 3h-4l-3-3z"/></svg>
<div style="left:111px;top:670px;width:2px;height:34px;background:#1a5a40;"></div>
<div style="left:552px;top:670px;width:2px;height:34px;background:#1a5a40;"></div>
<svg class="abs" style="left:14px;top:670px" width="10" height="10"><polygon points="0,0 8,0 0,8" fill="#e0e0e0"/></svg>
<div class="fx fa" style="left:27px;top:676px"><svg width="16" height="15" style="left:-1.5px;top:-1.5px"><path d="M3.3 12.8L6.6 4.2Q7.1 2.9 9 2.9M4.8 6H8.3M8 5.9L11.8 12.4M12.6 5.7L7.5 12.7" stroke="#111" stroke-width="1.1" fill="none"/></svg></div>
<div class="fx fa" style="left:568px;top:676px"><svg width="16" height="15" style="left:-1.5px;top:-1.5px"><path d="M3.3 12.8L6.6 4.2Q7.1 2.9 9 2.9M4.8 6H8.3M8 5.9L11.8 12.4M12.6 5.7L7.5 12.7" stroke="#111" stroke-width="1.1" fill="none"/></svg></div>
<div style="left:14px;top:705px;width:1337px;height:15px;background:#1b1b1b;"></div>
<div style="left:1351px;top:191px;width:9px;height:514px;background:#242424;"></div>
<div style="left:1px;top:191px;width:11px;height:1px;background:#2c2c2c;"></div>
<div style="left:1px;top:235px;width:11px;height:1px;background:#2c2c2c;"></div>
<div style="left:1px;top:279px;width:11px;height:1px;background:#2c2c2c;"></div>
<div style="left:1px;top:324px;width:11px;height:1px;background:#2c2c2c;"></div>
<div style="left:1px;top:368px;width:11px;height:1px;background:#2c2c2c;"></div>
<div style="left:1px;top:412px;width:11px;height:1px;background:#2c2c2c;"></div>
<div style="left:1px;top:456px;width:11px;height:7px;background:#262626;"></div>
<div style="left:1px;top:483px;width:11px;height:1px;background:#2b2b2b;"></div>
<div style="left:1px;top:504px;width:11px;height:1px;background:#2b2b2b;"></div>
<div style="left:1px;top:525px;width:11px;height:1px;background:#2b2b2b;"></div>
<div style="left:1px;top:545px;width:11px;height:1px;background:#2b2b2b;"></div>
<div style="left:1px;top:566px;width:11px;height:1px;background:#2b2b2b;"></div>
<div style="left:1px;top:587px;width:11px;height:1px;background:#2b2b2b;"></div>
<div style="left:1px;top:607px;width:11px;height:1px;background:#2b2b2b;"></div>
<div style="left:1px;top:628px;width:11px;height:1px;background:#2b2b2b;"></div>
<div style="left:1px;top:649px;width:11px;height:1px;background:#2b2b2b;"></div>
<div style="left:1px;top:670px;width:11px;height:1px;background:#2b2b2b;"></div>
<div style="left:1px;top:705px;width:11px;height:1px;background:#2b2b2b;"></div>
<div style="left:12px;top:36px;width:2px;height:684px;background:#3b8de8"></div>
<svg class="abs" style="left:12px;top:36px" width="10" height="17"><polygon points="0,0 9,0 9,9 2,16 0,16" fill="#3b8de8"/></svg></div></body></html>
